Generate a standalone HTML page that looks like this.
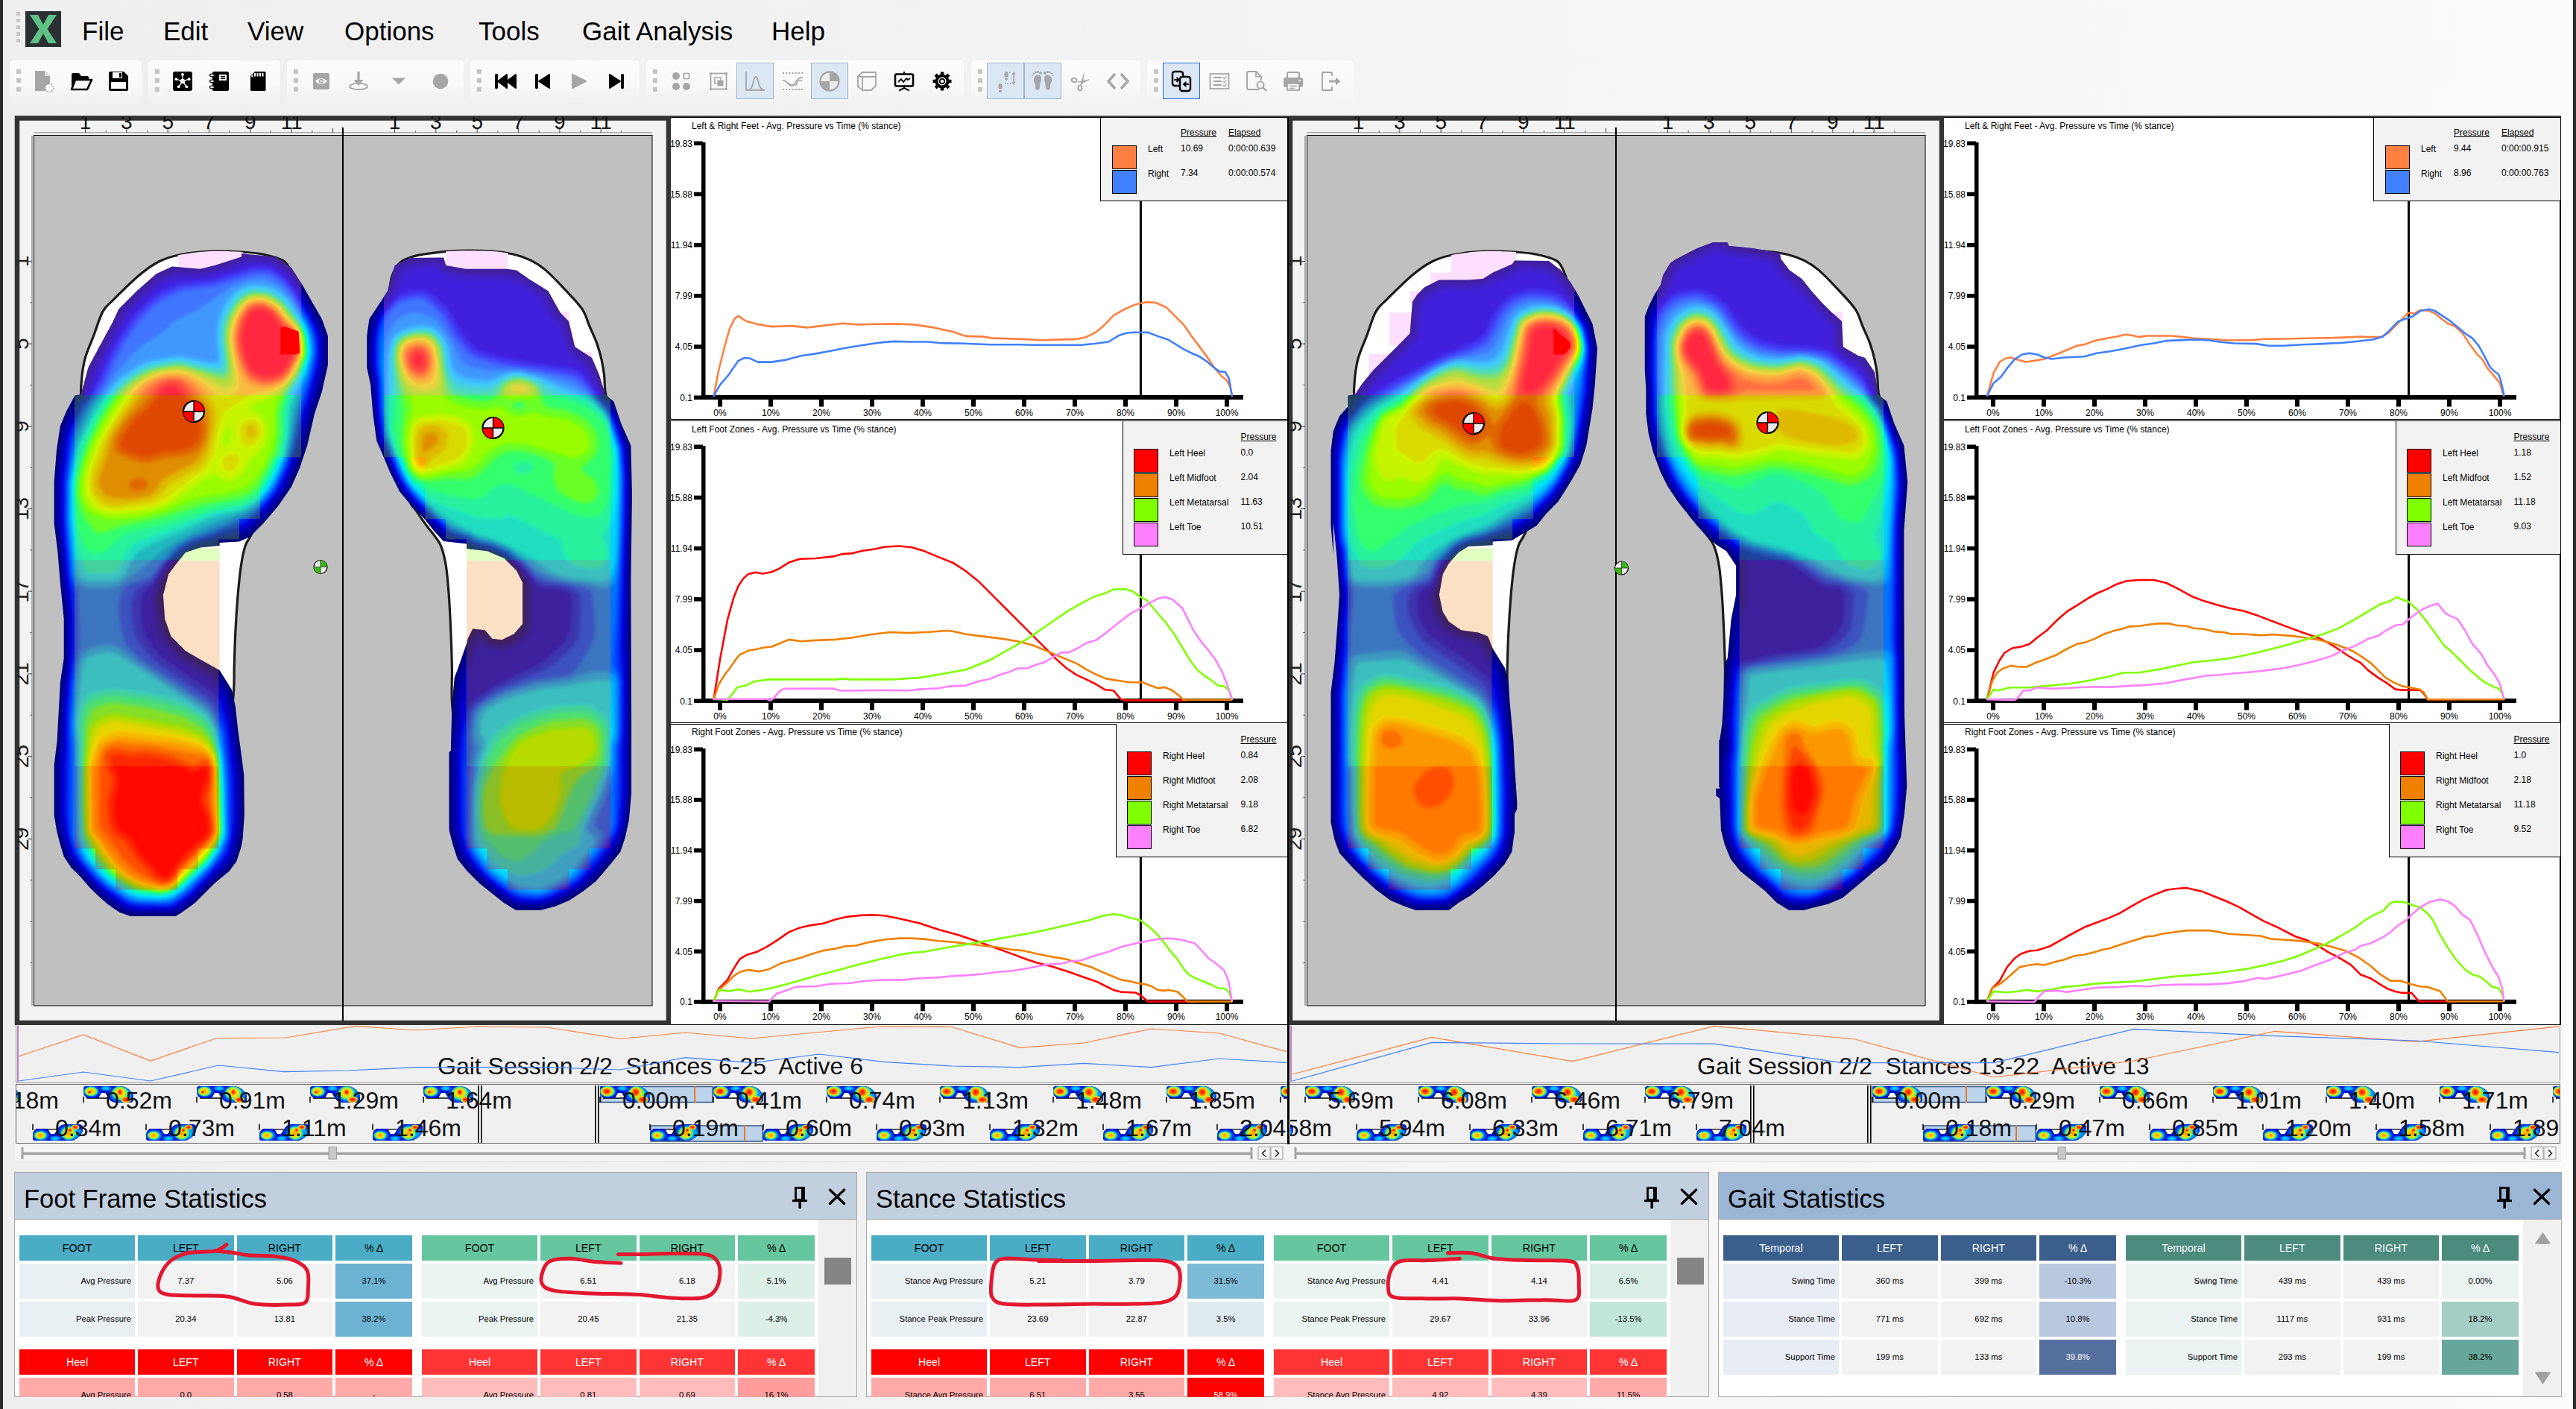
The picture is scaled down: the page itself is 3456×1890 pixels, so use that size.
<!DOCTYPE html>
<html><head><meta charset="utf-8"><title>Gait Analysis</title>
<style>
*{box-sizing:border-box;margin:0;padding:0}
html,body{width:3456px;height:1890px;overflow:hidden;background:#f0f0f0}
body{background:linear-gradient(to right,#efefef,#f2f2f2 40%,#fbfbfb)}
body{position:relative;font-family:"Liberation Sans",sans-serif;color:#000}
.a{position:absolute}
.t{position:absolute;white-space:nowrap;line-height:1}
svg{position:absolute;left:0;top:0;overflow:visible}
.menu{position:absolute;top:19.5px;font-size:35px;line-height:44px;white-space:nowrap;color:#000}
.tg{position:absolute;top:81px;height:57px;background:linear-gradient(#fcfcfc,#f9f9f9 55%,rgba(244,244,244,0));border-radius:5px}
.sel{position:absolute;top:84px;height:49px;width:50px;background:#dbe7f3;border:1px solid #a3b4c8}
.ttl{font-size:12px}
.ax{font-size:12px}
.lg{position:absolute;background:#f2f2f2;border-left:1px solid #000;border-bottom:1px solid #000;font-size:12px}
.lg span{position:absolute;white-space:nowrap;line-height:1}
.lg u{text-decoration:underline}
.sw{position:absolute;width:33px;height:32px;border:1px solid #000}
.big{font-size:32px;color:#111}
.ph{position:absolute;height:63px;border:1px solid #a9a9a9;border-bottom:none}
.ph span{position:absolute;left:12px;top:13px;font-size:34.5px;line-height:44px;white-space:nowrap;color:#000}
.pb{position:absolute;background:#fff;border:1px solid #a9a9a9;overflow:hidden}
.c{position:absolute;font-size:11.3px;line-height:1;white-space:nowrap;display:flex;align-items:center;justify-content:center}
.h{font-size:14.2px}
.r{justify-content:flex-end;padding-right:5px}
</style></head>
<body>
<div class="a" style="left:0;top:0;width:4px;height:1890px;background:#2b2b2b"></div>
<div class="a" style="left:3452px;top:0;width:4px;height:1890px;background:#2b2b2b"></div>
<div class="a" style="left:22px;top:16px;width:5px;height:5px;background:#c8c8c8"></div>
<div class="a" style="left:22px;top:25px;width:5px;height:5px;background:#c8c8c8"></div>
<div class="a" style="left:22px;top:34px;width:5px;height:5px;background:#c8c8c8"></div>
<div class="a" style="left:22px;top:43px;width:5px;height:5px;background:#c8c8c8"></div>
<div class="a" style="left:22px;top:52px;width:5px;height:5px;background:#c8c8c8"></div>
<div class="a" style="left:34px;top:15px;width:48px;height:48px;background:#2a2f33"></div>
<svg width="3456" height="140"><path d="M40 20 L51 20 L58 33 L65 20 L76 20 L63.5 39 L76 58 L65 58 L58 45 L51 58 L40 58 L52.5 39 Z" fill="#5ec286"/></svg>
<div class="menu" id="m_Fi" style="left:110px;width:53px">File</div>
<div class="menu" id="m_Ed" style="left:219px;width:58px">Edit</div>
<div class="menu" id="m_Vi" style="left:332px;width:76px">View</div>
<div class="menu" id="m_Op" style="left:462px;width:124px">Options</div>
<div class="menu" id="m_To" style="left:642px;width:80px">Tools</div>
<div class="menu" id="m_Ga" style="left:781px;width:198px">Gait Analysis</div>
<div class="menu" id="m_He" style="left:1035px;width:74px">Help</div>
<div class="tg" style="left:13px;width:177px"></div>
<div class="a" style="left:22px;top:93px;width:6px;height:6px;background:#c4c4c4;box-shadow:1px 1px 0 #fff"></div>
<div class="a" style="left:22px;top:105px;width:6px;height:6px;background:#c4c4c4;box-shadow:1px 1px 0 #fff"></div>
<div class="a" style="left:22px;top:117px;width:6px;height:6px;background:#c4c4c4;box-shadow:1px 1px 0 #fff"></div>
<div class="tg" style="left:199px;width:177px"></div>
<div class="a" style="left:208px;top:93px;width:6px;height:6px;background:#c4c4c4;box-shadow:1px 1px 0 #fff"></div>
<div class="a" style="left:208px;top:105px;width:6px;height:6px;background:#c4c4c4;box-shadow:1px 1px 0 #fff"></div>
<div class="a" style="left:208px;top:117px;width:6px;height:6px;background:#c4c4c4;box-shadow:1px 1px 0 #fff"></div>
<div class="tg" style="left:385px;width:237px"></div>
<div class="a" style="left:394px;top:93px;width:6px;height:6px;background:#c4c4c4;box-shadow:1px 1px 0 #fff"></div>
<div class="a" style="left:394px;top:105px;width:6px;height:6px;background:#c4c4c4;box-shadow:1px 1px 0 #fff"></div>
<div class="a" style="left:394px;top:117px;width:6px;height:6px;background:#c4c4c4;box-shadow:1px 1px 0 #fff"></div>
<div class="tg" style="left:631px;width:227px"></div>
<div class="a" style="left:640px;top:93px;width:6px;height:6px;background:#c4c4c4;box-shadow:1px 1px 0 #fff"></div>
<div class="a" style="left:640px;top:105px;width:6px;height:6px;background:#c4c4c4;box-shadow:1px 1px 0 #fff"></div>
<div class="a" style="left:640px;top:117px;width:6px;height:6px;background:#c4c4c4;box-shadow:1px 1px 0 #fff"></div>
<div class="tg" style="left:867px;width:426px"></div>
<div class="a" style="left:876px;top:93px;width:6px;height:6px;background:#c4c4c4;box-shadow:1px 1px 0 #fff"></div>
<div class="a" style="left:876px;top:105px;width:6px;height:6px;background:#c4c4c4;box-shadow:1px 1px 0 #fff"></div>
<div class="a" style="left:876px;top:117px;width:6px;height:6px;background:#c4c4c4;box-shadow:1px 1px 0 #fff"></div>
<div class="tg" style="left:1303px;width:227px"></div>
<div class="a" style="left:1312px;top:93px;width:6px;height:6px;background:#c4c4c4;box-shadow:1px 1px 0 #fff"></div>
<div class="a" style="left:1312px;top:105px;width:6px;height:6px;background:#c4c4c4;box-shadow:1px 1px 0 #fff"></div>
<div class="a" style="left:1312px;top:117px;width:6px;height:6px;background:#c4c4c4;box-shadow:1px 1px 0 #fff"></div>
<div class="tg" style="left:1539px;width:277px"></div>
<div class="a" style="left:1548px;top:93px;width:6px;height:6px;background:#c4c4c4;box-shadow:1px 1px 0 #fff"></div>
<div class="a" style="left:1548px;top:105px;width:6px;height:6px;background:#c4c4c4;box-shadow:1px 1px 0 #fff"></div>
<div class="a" style="left:1548px;top:117px;width:6px;height:6px;background:#c4c4c4;box-shadow:1px 1px 0 #fff"></div>
<div class="sel" style="left:988px"></div>
<div class="sel" style="left:1088px"></div>
<div class="sel" style="left:1324px"></div>
<div class="sel" style="left:1374px"></div>
<div class="sel" style="left:1560px;border-color:#1e6fd9"></div>
<svg width="3456" height="160">
<g transform="translate(58 109)"><path d="M-11 -14 H2 L9 -7 V13 H-11Z" fill="#a6a6a6"/><path d="M2 -14 V-7 H9Z" fill="#ddd"/><circle cx="8" cy="9" r="5.5" fill="#fff" stroke="#a6a6a6" stroke-width="1.5" stroke-dasharray="2 1.4"/></g>
<g transform="translate(109 109)"><path d="M-13 -9 Q-13 -11 -11 -11 H-3 L0 -7 H8 Q10 -7 10 -5 V-3 H-8 L-13 9Z" fill="#000"/><path d="M-8 -2 H14 L8 11 H-13Z" fill="none" stroke="#000" stroke-width="2.6" stroke-linejoin="round"/></g>
<g transform="translate(159 109)"><path d="M-13 -11 Q-13 -13 -11 -13 H7 L13 -7 V11 Q13 13 11 13 H-11 Q-13 13 -13 11Z" fill="#000"/><rect x="-10" y="1" width="20" height="9" fill="#fff"/><rect x="-8" y="-12" width="13" height="8" fill="#fff"/><rect x="1" y="-11" width="3" height="6" fill="#000"/></g>
<g transform="translate(245 109)"><rect x="-13" y="-13" width="26" height="26" rx="3" fill="#000"/><circle r="3.2" fill="#fff"/><line x2="0.0" y2="-9.0" stroke="#fff" stroke-width="1.3"/><circle cx="0.0" cy="-9.0" r="1.9" fill="#fff"/><line x2="8.6" y2="-2.8" stroke="#fff" stroke-width="1.3"/><circle cx="8.6" cy="-2.8" r="1.9" fill="#fff"/><line x2="5.3" y2="7.3" stroke="#fff" stroke-width="1.3"/><circle cx="5.3" cy="7.3" r="1.9" fill="#fff"/><line x2="-5.3" y2="7.3" stroke="#fff" stroke-width="1.3"/><circle cx="-5.3" cy="7.3" r="1.9" fill="#fff"/><line x2="-8.6" y2="-2.8" stroke="#fff" stroke-width="1.3"/><circle cx="-8.6" cy="-2.8" r="1.9" fill="#fff"/></g>
<g transform="translate(295 109)"><rect x="-10" y="-13" width="22" height="26" rx="2" fill="#000"/><rect x="-1" y="-9" width="10" height="8" fill="#fff"/><rect x="1" y="-7" width="6" height="1.4" fill="#000"/><rect x="1" y="-4.4" width="6" height="1.4" fill="#000"/><ellipse cx="-10.5" cy="-8" rx="3" ry="1.8" fill="#fff" stroke="#000" stroke-width="1.2"/><ellipse cx="-10.5" cy="0" rx="3" ry="1.8" fill="#fff" stroke="#000" stroke-width="1.2"/><ellipse cx="-10.5" cy="8" rx="3" ry="1.8" fill="#fff" stroke="#000" stroke-width="1.2"/></g>
<g transform="translate(346 109)"><path d="M-10 -7 L-4 -13 H9 Q10.5 -13 10.5 -11.5 V11.5 Q10.5 13 9 13 H-8.5 Q-10 13 -10 11.5Z" fill="#000"/><rect x="-5" y="-11" width="2" height="4.5" fill="#fff"/><rect x="-1.5" y="-11" width="2" height="4.5" fill="#fff"/><rect x="2" y="-11" width="2" height="4.5" fill="#fff"/><rect x="5.5" y="-11" width="2" height="4.5" fill="#fff"/><rect x="-8.6" y="-8.5" width="1.6" height="3" fill="#fff"/></g>
<g transform="translate(431 109)"><rect x="-11" y="-11" width="22" height="22" rx="2.5" fill="#a6a6a6"/><path d="M-8 0 Q0 -8 8 0 Q0 8 -8 0Z" fill="#fff"/><circle r="3.2" fill="#a6a6a6"/><circle r="1.4" fill="#fff"/></g>
<g transform="translate(481 109)"><rect x="-1.6" y="-13" width="3.2" height="13" fill="#a6a6a6"/><path d="M-6.5 -2 H6.5 L0 6Z" fill="#a6a6a6"/><ellipse cx="0" cy="7" rx="12" ry="4.2" fill="none" stroke="#a6a6a6" stroke-width="1.8"/></g>
<g transform="translate(535 109)"><path d="M-9 -4.5 H9 L0 4.5Z" fill="#a6a6a6"/></g>
<g transform="translate(591 109)"><circle r="10.3" fill="#a6a6a6"/></g>
<g transform="translate(678 109)"><rect x="-14" y="-10" width="4" height="20" rx="1.5" fill="#000"/><path d="M2 -9 V9 L-10 0Z M14 -9 V9 L2 0Z" fill="#000" stroke="#000" stroke-width="2" stroke-linejoin="round"/></g>
<g transform="translate(728 109)"><rect x="-10" y="-10" width="4" height="20" rx="1.5" fill="#000"/><path d="M9 -9 V9 L-5 0Z" fill="#000" stroke="#000" stroke-width="2" stroke-linejoin="round"/></g>
<g transform="translate(777 109)"><path d="M-9 -9 V9 L9 0Z" fill="#a6a6a6" stroke="#a6a6a6" stroke-width="2" stroke-linejoin="round"/></g>
<g transform="translate(827 109)"><rect x="6" y="-10" width="4" height="20" rx="1.5" fill="#000"/><path d="M-9 -9 V9 L5 0Z" fill="#000" stroke="#000" stroke-width="2" stroke-linejoin="round"/></g>
<g transform="translate(914 109)"><circle cx="-7" cy="-7" r="5" fill="#a6a6a6"/><circle cx="-7" cy="7" r="5" fill="#a6a6a6"/><circle cx="7" cy="7" r="5" fill="#a6a6a6"/><rect x="3.5" y="-10.5" width="7" height="7" fill="none" stroke="#a6a6a6" stroke-width="1.6"/></g>
<g transform="translate(964 109)"><rect x="-10.5" y="-10.5" width="21" height="21" fill="none" stroke="#a6a6a6" stroke-width="1.8"/><rect x="-5" y="-5" width="8" height="8" fill="none" stroke="#a6a6a6" stroke-width="1.5"/><rect x="-1.5" y="-1.5" width="8" height="8" fill="#a6a6a6"/><circle cx="-10.5" cy="-10.5" r="1.6" fill="#a6a6a6"/><circle cx="-10.5" cy="10.5" r="1.6" fill="#a6a6a6"/><circle cx="10.5" cy="-10.5" r="1.6" fill="#a6a6a6"/><circle cx="10.5" cy="10.5" r="1.6" fill="#a6a6a6"/></g>
<g transform="translate(1013 109)"><path d="M-12 -13 V12 H13" fill="none" stroke="#a6a6a6" stroke-width="1.8"/><path d="M-8 11 C-2 11 -3 -6 1 -6 C5 -6 4 11 11 11" fill="none" stroke="#a6a6a6" stroke-width="1.8"/></g>
<g transform="translate(1064 109)"><path d="M-14 -11 H14 M-14 11 H14" stroke="#a6a6a6" stroke-width="1.8" stroke-dasharray="2 2.2"/><path d="M-14 -1 C-8 -3 -8 6 -2 6 C4 6 4 -6 13 -5" fill="none" stroke="#a6a6a6" stroke-width="1.8"/><path d="M-6 2 L-4 5 H4 L7 -1 H12" fill="none" stroke="#a6a6a6" stroke-width="1.4"/></g>
<g transform="translate(1113 109)"><circle r="12.5" fill="#ececec" stroke="#a6a6a6" stroke-width="2.4"/><path d="M0 0 V-12.5 A12.5 12.5 0 0 1 12.5 0Z M0 0 V12.5 A12.5 12.5 0 0 1 -12.5 0Z" fill="#a6a6a6"/></g>
<g transform="translate(1163 109)"><path d="M-12 -7 L-6 -12 H12 V6 L6 12 H-6 M-12 -7 V7 L-6 12 V-6 H12 M-12 -7 L-6 -6" fill="none" stroke="#a6a6a6" stroke-width="1.8" stroke-linejoin="round"/></g>
<g transform="translate(1213 109)"><rect x="-1" y="-13" width="2" height="4" fill="#000"/><rect x="-12" y="-9.5" width="24" height="16" rx="2" fill="none" stroke="#000" stroke-width="2.6"/><path d="M-8 1 L-4 -3 L-1 1 L3 -4 L5 -2 L8 -4" fill="none" stroke="#000" stroke-width="1.8"/><path d="M0 7 V10 M-7 12.5 L0 9 L7 12.5" fill="none" stroke="#000" stroke-width="2"/></g>
<g transform="translate(1264 109)"><circle r="7.5" fill="none" stroke="#000" stroke-width="4"/><circle r="3.2" fill="none" stroke="#000" stroke-width="1.8"/><rect x="-2.2" y="-12.5" width="4.4" height="5" fill="#000" transform="rotate(0)"/><rect x="-2.2" y="-12.5" width="4.4" height="5" fill="#000" transform="rotate(45)"/><rect x="-2.2" y="-12.5" width="4.4" height="5" fill="#000" transform="rotate(90)"/><rect x="-2.2" y="-12.5" width="4.4" height="5" fill="#000" transform="rotate(135)"/><rect x="-2.2" y="-12.5" width="4.4" height="5" fill="#000" transform="rotate(180)"/><rect x="-2.2" y="-12.5" width="4.4" height="5" fill="#000" transform="rotate(225)"/><rect x="-2.2" y="-12.5" width="4.4" height="5" fill="#000" transform="rotate(270)"/><rect x="-2.2" y="-12.5" width="4.4" height="5" fill="#000" transform="rotate(315)"/></g>
<g transform="translate(1349 109)"><ellipse cx="-7" cy="7" rx="2.6" ry="4" fill="#a6a6a6"/><rect x="-9" y="12" width="4" height="2.4" rx="1" fill="#a6a6a6"/><ellipse cx="1" cy="-9" rx="2.6" ry="4" fill="#a6a6a6"/><rect x="-1" y="-4" width="4" height="2.4" rx="1" fill="#a6a6a6"/><path d="M-1 3 H11" stroke="#a6a6a6" stroke-width="1.6" stroke-dasharray="1.6 1.8"/><path d="M11 -11 V3" stroke="#a6a6a6" stroke-width="1.6"/><path d="M8.5 -9 L11 -13 L13.5 -9Z M8.5 1 L11 5 L13.5 1Z" fill="#a6a6a6"/><path d="M5 -12 h1.6" stroke="#a6a6a6" stroke-width="1.6"/></g>
<g transform="translate(1399 109)"><path d="M-2 -5 C-2 -9 -10 -10 -12 -4 C-13 2 -9 4 -10 8 C-10.5 13 -4 13 -4 8 C-4 3 -2 0 -2 -5Z" fill="#a6a6a6"/><circle cx="-3" cy="-11" r="1.9" fill="#a6a6a6"/><circle cx="-6.5" cy="-12.5" r="1.5" fill="#a6a6a6"/><circle cx="-9.5" cy="-12" r="1.3" fill="#a6a6a6"/><circle cx="-12" cy="-10.5" r="1.1" fill="#a6a6a6"/><circle cx="-13.6" cy="-8" r="1.0" fill="#a6a6a6"/><path d="M2 -5 C2 -9 10 -10 12 -4 C13 2 9 4 10 8 C10.5 13 4 13 4 8 C4 3 2 0 2 -5Z" fill="#a6a6a6"/><circle cx="3" cy="-11" r="1.9" fill="#a6a6a6"/><circle cx="6.5" cy="-12.5" r="1.5" fill="#a6a6a6"/><circle cx="9.5" cy="-12" r="1.3" fill="#a6a6a6"/><circle cx="12" cy="-10.5" r="1.1" fill="#a6a6a6"/><circle cx="13.6" cy="-8" r="1.0" fill="#a6a6a6"/></g>
<g transform="translate(1450 109)"><ellipse cx="-9" cy="0" rx="3.4" ry="2.6" fill="none" stroke="#a6a6a6" stroke-width="1.8" transform="rotate(10)"/><ellipse cx="-1" cy="9" rx="2.6" ry="3.4" fill="none" stroke="#a6a6a6" stroke-width="1.8"/><path d="M-6 1 L13 -3 L4 2Z M-1 6 L5 -14 L3 3Z" fill="#a6a6a6"/></g>
<g transform="translate(1500 109)"><path d="M-4 -10 L-13 0 L-4 10 M4 -10 L13 0 L4 10" fill="none" stroke="#a6a6a6" stroke-width="3.4"/></g>
<g transform="translate(1585 109)"><rect x="-12" y="-13" width="14" height="19" rx="3" fill="#dbe7f3" stroke="#000" stroke-width="2.4"/><rect x="-2" y="-6" width="14" height="19" rx="3" fill="#dbe7f3" stroke="#000" stroke-width="2.4"/><path d="M-10 -2 H-4 M-6.5 -5 L-3 -2 L-6.5 1" fill="none" stroke="#000" stroke-width="1.8"/><path d="M10 4 H4 M6.5 1 L3 4 L6.5 7" fill="none" stroke="#000" stroke-width="1.8"/></g>
<g transform="translate(1636 109)"><rect x="-12.5" y="-10" width="25" height="20" fill="none" stroke="#a6a6a6" stroke-width="1.8"/><path d="M-8 -5 H3 M-8 0 H3 M-8 5 H3" stroke="#a6a6a6" stroke-width="1.8"/><path d="M5 -5 l1.5 1.5 l3 -3 M5 0 l1.5 1.5 l3 -3 M5 5 l1.5 1.5 l3 -3" fill="none" stroke="#a6a6a6" stroke-width="1.3"/></g>
<g transform="translate(1685 109)"><path d="M4 11 H-10 Q-12 11 -12 9 V-11 Q-12 -13 -10 -13 H0 L7 -6 V-1" fill="none" stroke="#a6a6a6" stroke-width="1.9"/><path d="M0 -13 V-6 H7" fill="none" stroke="#a6a6a6" stroke-width="1.6"/><circle cx="6" cy="5" r="4.6" fill="none" stroke="#a6a6a6" stroke-width="1.9"/><path d="M9.5 8.5 L14 13" stroke="#a6a6a6" stroke-width="2.4"/></g>
<g transform="translate(1735 109)"><rect x="-8" y="-12" width="16" height="8" rx="1.5" fill="none" stroke="#a6a6a6" stroke-width="2"/><rect x="-13" y="-5" width="26" height="13" rx="3" fill="#a6a6a6"/><rect x="-8" y="3" width="16" height="9" fill="#f8f8f8" stroke="#a6a6a6" stroke-width="1.8"/><path d="M-5 6.5 H5 M-5 9.3 H2" stroke="#a6a6a6" stroke-width="1.3"/><circle cx="8.5" cy="-1" r="1.3" fill="#f8f8f8"/></g>
<g transform="translate(1785 109)"><path d="M2 -12 H-11 V12 H2 V7 M2 -12 V-7" fill="none" stroke="#a6a6a6" stroke-width="1.9"/><path d="M-2 0 H9" stroke="#a6a6a6" stroke-width="3"/><path d="M7 -5.5 L13.5 0 L7 5.5Z" fill="#a6a6a6"/></g>
</svg>
<div class="a" style="left:20px;top:155px;width:880px;height:1220px;background:#f3f3f3"></div>
<div class="a" style="left:1728px;top:155px;width:880px;height:1220px;background:#f3f3f3"></div>
<svg width="3456" height="1890" font-family="Liberation Sans, sans-serif"><defs><filter id="heat" x="-5%" y="-5%" width="110%" height="110%" color-interpolation-filters="sRGB"><feGaussianBlur stdDeviation="2.5"/><feComponentTransfer><feFuncR type="table" tableValues="0.000 0.000 0.000 0.000 0.000 0.094 0.549 0.941 1.000 1.000 1.000"/><feFuncG type="table" tableValues="0.000 0.000 0.251 0.565 0.878 1.000 1.000 0.941 0.647 0.275 0.000"/><feFuncB type="table" tableValues="0.502 0.843 1.000 1.000 1.000 0.588 0.000 0.000 0.000 0.000 0.000"/></feComponentTransfer></filter></defs>
<path d="M23 158.5 H897 V1372 H23Z" fill="none" stroke="#333" stroke-width="6.5"/>
<clipPath id="rc0"><rect x="22.5" y="156.5" width="876" height="1216"/></clipPath>
<rect x="45.5" y="181.5" width="829.5" height="1167.5" fill="#c0c0c0" stroke="#000" stroke-width="1"/>
<path d="M43.5 182 V1349 M45 179.5 H875" stroke="#fff" stroke-width="1" fill="none"/>
<path d="M45 178 H875" stroke="#777" stroke-width="1.2"/>
<path d="M43 182 V1349" stroke="#777" stroke-width="1.2"/>
<path d="M114.5 172 V178" stroke="#555" stroke-width="1.2"/>
<path d="M142.2 175 V178" stroke="#666" stroke-width="1"/>
<path d="M169.8 172 V178" stroke="#555" stroke-width="1.2"/>
<path d="M197.5 175 V178" stroke="#666" stroke-width="1"/>
<path d="M225.2 172 V178" stroke="#555" stroke-width="1.2"/>
<path d="M252.9 175 V178" stroke="#666" stroke-width="1"/>
<path d="M280.5 172 V178" stroke="#555" stroke-width="1.2"/>
<path d="M308.2 175 V178" stroke="#666" stroke-width="1"/>
<path d="M335.9 172 V178" stroke="#555" stroke-width="1.2"/>
<path d="M363.5 175 V178" stroke="#666" stroke-width="1"/>
<path d="M391.2 172 V178" stroke="#555" stroke-width="1.2"/>
<path d="M418.9 175 V178" stroke="#666" stroke-width="1"/>
<path d="M446.5 172 V178" stroke="#555" stroke-width="1.2"/>
<path d="M529.5 172 V178" stroke="#555" stroke-width="1.2"/>
<path d="M557.2 175 V178" stroke="#666" stroke-width="1"/>
<path d="M584.8 172 V178" stroke="#555" stroke-width="1.2"/>
<path d="M612.5 175 V178" stroke="#666" stroke-width="1"/>
<path d="M640.2 172 V178" stroke="#555" stroke-width="1.2"/>
<path d="M667.9 175 V178" stroke="#666" stroke-width="1"/>
<path d="M695.5 172 V178" stroke="#555" stroke-width="1.2"/>
<path d="M723.2 175 V178" stroke="#666" stroke-width="1"/>
<path d="M750.9 172 V178" stroke="#555" stroke-width="1.2"/>
<path d="M778.5 175 V178" stroke="#666" stroke-width="1"/>
<path d="M806.2 172 V178" stroke="#555" stroke-width="1.2"/>
<path d="M833.9 175 V178" stroke="#666" stroke-width="1"/>
<path d="M37 350.5 H43" stroke="#555" stroke-width="1.2"/>
<path d="M40 405.8 H43" stroke="#666" stroke-width="1"/>
<path d="M37 461.2 H43" stroke="#555" stroke-width="1.2"/>
<path d="M40 516.5 H43" stroke="#666" stroke-width="1"/>
<path d="M37 571.9 H43" stroke="#555" stroke-width="1.2"/>
<path d="M40 627.2 H43" stroke="#666" stroke-width="1"/>
<path d="M37 682.5 H43" stroke="#555" stroke-width="1.2"/>
<path d="M40 737.9 H43" stroke="#666" stroke-width="1"/>
<path d="M37 793.2 H43" stroke="#555" stroke-width="1.2"/>
<path d="M40 848.6 H43" stroke="#666" stroke-width="1"/>
<path d="M37 903.9 H43" stroke="#555" stroke-width="1.2"/>
<path d="M40 959.2 H43" stroke="#666" stroke-width="1"/>
<path d="M37 1014.6 H43" stroke="#555" stroke-width="1.2"/>
<path d="M40 1069.9 H43" stroke="#666" stroke-width="1"/>
<path d="M37 1125.3 H43" stroke="#555" stroke-width="1.2"/>
<path d="M40 1180.6 H43" stroke="#666" stroke-width="1"/>
<path d="M40 1235.9 H43" stroke="#666" stroke-width="1"/>
<path d="M40 1291.3 H43" stroke="#666" stroke-width="1"/>
<rect x="459" y="171" width="2" height="1198" fill="#000"/>
<g clip-path="url(#rc0)"><text x="114.5" y="173" font-size="28" text-anchor="middle" fill="#111">1</text><text x="169.8" y="173" font-size="28" text-anchor="middle" fill="#111">3</text><text x="225.2" y="173" font-size="28" text-anchor="middle" fill="#111">5</text><text x="280.5" y="173" font-size="28" text-anchor="middle" fill="#111">7</text><text x="335.9" y="173" font-size="28" text-anchor="middle" fill="#111">9</text><text x="391.2" y="173" font-size="28" text-anchor="middle" fill="#111">11</text><text x="529.5" y="173" font-size="28" text-anchor="middle" fill="#111">1</text><text x="584.8" y="173" font-size="28" text-anchor="middle" fill="#111">3</text><text x="640.2" y="173" font-size="28" text-anchor="middle" fill="#111">5</text><text x="695.5" y="173" font-size="28" text-anchor="middle" fill="#111">7</text><text x="750.9" y="173" font-size="28" text-anchor="middle" fill="#111">9</text><text x="806.2" y="173" font-size="28" text-anchor="middle" fill="#111">11</text><text transform="translate(37.5 350.5) rotate(-90)" font-size="28" text-anchor="middle" fill="#222">1</text><text transform="translate(37.5 461.2) rotate(-90)" font-size="28" text-anchor="middle" fill="#222">5</text><text transform="translate(37.5 571.9) rotate(-90)" font-size="28" text-anchor="middle" fill="#222">9</text><text transform="translate(37.5 682.5) rotate(-90)" font-size="28" text-anchor="middle" fill="#222">13</text><text transform="translate(37.5 793.2) rotate(-90)" font-size="28" text-anchor="middle" fill="#222">17</text><text transform="translate(37.5 903.9) rotate(-90)" font-size="28" text-anchor="middle" fill="#222">21</text><text transform="translate(37.5 1014.6) rotate(-90)" font-size="28" text-anchor="middle" fill="#222">25</text><text transform="translate(37.5 1125.3) rotate(-90)" font-size="28" text-anchor="middle" fill="#222">29</text></g>
<path d="M1731 158.5 H2605 V1372 H1731Z" fill="none" stroke="#333" stroke-width="6.5"/>
<clipPath id="rc1708"><rect x="1730.5" y="156.5" width="876" height="1216"/></clipPath>
<rect x="1753.5" y="181.5" width="829.5" height="1167.5" fill="#c0c0c0" stroke="#000" stroke-width="1"/>
<path d="M1751.5 182 V1349 M1753 179.5 H2583" stroke="#fff" stroke-width="1" fill="none"/>
<path d="M1753 178 H2583" stroke="#777" stroke-width="1.2"/>
<path d="M1751 182 V1349" stroke="#777" stroke-width="1.2"/>
<path d="M1822.5 172 V178" stroke="#555" stroke-width="1.2"/>
<path d="M1850.2 175 V178" stroke="#666" stroke-width="1"/>
<path d="M1877.8 172 V178" stroke="#555" stroke-width="1.2"/>
<path d="M1905.5 175 V178" stroke="#666" stroke-width="1"/>
<path d="M1933.2 172 V178" stroke="#555" stroke-width="1.2"/>
<path d="M1960.8 175 V178" stroke="#666" stroke-width="1"/>
<path d="M1988.5 172 V178" stroke="#555" stroke-width="1.2"/>
<path d="M2016.2 175 V178" stroke="#666" stroke-width="1"/>
<path d="M2043.9 172 V178" stroke="#555" stroke-width="1.2"/>
<path d="M2071.5 175 V178" stroke="#666" stroke-width="1"/>
<path d="M2099.2 172 V178" stroke="#555" stroke-width="1.2"/>
<path d="M2126.9 175 V178" stroke="#666" stroke-width="1"/>
<path d="M2154.5 172 V178" stroke="#555" stroke-width="1.2"/>
<path d="M2237.5 172 V178" stroke="#555" stroke-width="1.2"/>
<path d="M2265.2 175 V178" stroke="#666" stroke-width="1"/>
<path d="M2292.8 172 V178" stroke="#555" stroke-width="1.2"/>
<path d="M2320.5 175 V178" stroke="#666" stroke-width="1"/>
<path d="M2348.2 172 V178" stroke="#555" stroke-width="1.2"/>
<path d="M2375.8 175 V178" stroke="#666" stroke-width="1"/>
<path d="M2403.5 172 V178" stroke="#555" stroke-width="1.2"/>
<path d="M2431.2 175 V178" stroke="#666" stroke-width="1"/>
<path d="M2458.9 172 V178" stroke="#555" stroke-width="1.2"/>
<path d="M2486.5 175 V178" stroke="#666" stroke-width="1"/>
<path d="M2514.2 172 V178" stroke="#555" stroke-width="1.2"/>
<path d="M2541.9 175 V178" stroke="#666" stroke-width="1"/>
<path d="M1745 350.5 H1751" stroke="#555" stroke-width="1.2"/>
<path d="M1748 405.8 H1751" stroke="#666" stroke-width="1"/>
<path d="M1745 461.2 H1751" stroke="#555" stroke-width="1.2"/>
<path d="M1748 516.5 H1751" stroke="#666" stroke-width="1"/>
<path d="M1745 571.9 H1751" stroke="#555" stroke-width="1.2"/>
<path d="M1748 627.2 H1751" stroke="#666" stroke-width="1"/>
<path d="M1745 682.5 H1751" stroke="#555" stroke-width="1.2"/>
<path d="M1748 737.9 H1751" stroke="#666" stroke-width="1"/>
<path d="M1745 793.2 H1751" stroke="#555" stroke-width="1.2"/>
<path d="M1748 848.6 H1751" stroke="#666" stroke-width="1"/>
<path d="M1745 903.9 H1751" stroke="#555" stroke-width="1.2"/>
<path d="M1748 959.2 H1751" stroke="#666" stroke-width="1"/>
<path d="M1745 1014.6 H1751" stroke="#555" stroke-width="1.2"/>
<path d="M1748 1069.9 H1751" stroke="#666" stroke-width="1"/>
<path d="M1745 1125.3 H1751" stroke="#555" stroke-width="1.2"/>
<path d="M1748 1180.6 H1751" stroke="#666" stroke-width="1"/>
<path d="M1748 1235.9 H1751" stroke="#666" stroke-width="1"/>
<path d="M1748 1291.3 H1751" stroke="#666" stroke-width="1"/>
<rect x="2167" y="171" width="2" height="1198" fill="#000"/>
<g clip-path="url(#rc1708)"><text x="1822.5" y="173" font-size="28" text-anchor="middle" fill="#111">1</text><text x="1877.8" y="173" font-size="28" text-anchor="middle" fill="#111">3</text><text x="1933.2" y="173" font-size="28" text-anchor="middle" fill="#111">5</text><text x="1988.5" y="173" font-size="28" text-anchor="middle" fill="#111">7</text><text x="2043.9" y="173" font-size="28" text-anchor="middle" fill="#111">9</text><text x="2099.2" y="173" font-size="28" text-anchor="middle" fill="#111">11</text><text x="2237.5" y="173" font-size="28" text-anchor="middle" fill="#111">1</text><text x="2292.8" y="173" font-size="28" text-anchor="middle" fill="#111">3</text><text x="2348.2" y="173" font-size="28" text-anchor="middle" fill="#111">5</text><text x="2403.5" y="173" font-size="28" text-anchor="middle" fill="#111">7</text><text x="2458.9" y="173" font-size="28" text-anchor="middle" fill="#111">9</text><text x="2514.2" y="173" font-size="28" text-anchor="middle" fill="#111">11</text><text transform="translate(1745.5 350.5) rotate(-90)" font-size="28" text-anchor="middle" fill="#222">1</text><text transform="translate(1745.5 461.2) rotate(-90)" font-size="28" text-anchor="middle" fill="#222">5</text><text transform="translate(1745.5 571.9) rotate(-90)" font-size="28" text-anchor="middle" fill="#222">9</text><text transform="translate(1745.5 682.5) rotate(-90)" font-size="28" text-anchor="middle" fill="#222">13</text><text transform="translate(1745.5 793.2) rotate(-90)" font-size="28" text-anchor="middle" fill="#222">17</text><text transform="translate(1745.5 903.9) rotate(-90)" font-size="28" text-anchor="middle" fill="#222">21</text><text transform="translate(1745.5 1014.6) rotate(-90)" font-size="28" text-anchor="middle" fill="#222">25</text><text transform="translate(1745.5 1125.3) rotate(-90)" font-size="28" text-anchor="middle" fill="#222">29</text></g>
<path d="M313.6 925.3C314.6 908.9 313.9 908.9 314.2 895.9C314.6 882.8 315.0 863.2 315.9 846.9C316.7 830.6 317.9 812.6 319.1 797.9C320.4 783.2 321.7 769.6 323.4 758.8C325.0 747.9 326.9 739.1 328.9 732.6C330.9 726.2 333.7 724.0 335.5 720.2C337.2 716.5 339.7 714.3 339.7 710.1C339.7 706.0 333.7 704.4 335.5 695.4C337.2 686.5 341.7 675.3 350.1 656.3C358.6 637.2 376.3 604.6 386.1 581.2C395.8 557.8 404.6 534.9 408.9 515.9C413.3 496.8 413.3 484.9 412.2 466.9C411.1 449.0 405.2 422.8 402.4 408.1C399.5 393.5 397.6 386.8 395.2 378.8C392.8 370.7 390.6 364.7 388.0 359.8C385.4 354.9 385.3 352.5 379.5 349.4C373.8 346.3 362.7 343.1 353.4 341.2C344.2 339.3 336.0 338.7 324.0 338.0C312.1 337.2 295.7 336.3 281.6 337.0C267.4 337.7 250.6 339.9 239.1 342.2C227.7 344.5 221.7 346.6 213.0 351.0C204.3 355.5 197.0 360.5 186.9 369.0C176.8 377.4 160.8 393.5 152.6 401.6C144.5 409.8 142.5 409.8 137.9 417.9C133.4 426.1 129.6 439.7 125.5 450.6C121.5 461.5 116.3 471.3 113.5 483.2C110.6 495.2 109.1 511.5 108.6 522.4C108.0 533.3 110.7 538.7 110.2 548.5C109.6 558.3 107.7 559.4 105.3 581.2C102.8 602.9 97.1 646.0 95.5 679.1C93.9 712.3 95.5 738.4 95.5 780.0C95.5 821.6 95.5 871.1 95.5 928.5C95.5 985.9 93.9 1092.0 95.5 1124.4C97.1 1156.8 98.2 1112.9 105.2 1123.0C112.3 1133.1 121.5 1170.3 137.8 1185.0C154.1 1199.7 181.3 1211.1 203.0 1211.1C224.8 1211.1 250.9 1205.1 268.3 1185.0C285.7 1164.9 300.6 1122.5 307.4 1090.4C314.2 1058.4 308.9 1008.7 309.0 992.6C309.2 976.5 307.6 1005.0 308.4 993.8C309.1 982.6 312.6 941.6 313.6 925.3Z" fill="#fff" stroke="#1c1c1c" stroke-width="3.2" stroke-linejoin="round"/>
<clipPath id="olLF1"><path d="M313.6 925.3C314.6 908.9 313.9 908.9 314.2 895.9C314.6 882.8 315.0 863.2 315.9 846.9C316.7 830.6 317.9 812.6 319.1 797.9C320.4 783.2 321.7 769.6 323.4 758.8C325.0 747.9 326.9 739.1 328.9 732.6C330.9 726.2 333.7 724.0 335.5 720.2C337.2 716.5 339.7 714.3 339.7 710.1C339.7 706.0 333.7 704.4 335.5 695.4C337.2 686.5 341.7 675.3 350.1 656.3C358.6 637.2 376.3 604.6 386.1 581.2C395.8 557.8 404.6 534.9 408.9 515.9C413.3 496.8 413.3 484.9 412.2 466.9C411.1 449.0 405.2 422.8 402.4 408.1C399.5 393.5 397.6 386.8 395.2 378.8C392.8 370.7 390.6 364.7 388.0 359.8C385.4 354.9 385.3 352.5 379.5 349.4C373.8 346.3 362.7 343.1 353.4 341.2C344.2 339.3 336.0 338.7 324.0 338.0C312.1 337.2 295.7 336.3 281.6 337.0C267.4 337.7 250.6 339.9 239.1 342.2C227.7 344.5 221.7 346.6 213.0 351.0C204.3 355.5 197.0 360.5 186.9 369.0C176.8 377.4 160.8 393.5 152.6 401.6C144.5 409.8 142.5 409.8 137.9 417.9C133.4 426.1 129.6 439.7 125.5 450.6C121.5 461.5 116.3 471.3 113.5 483.2C110.6 495.2 109.1 511.5 108.6 522.4C108.0 533.3 110.7 538.7 110.2 548.5C109.6 558.3 107.7 559.4 105.3 581.2C102.8 602.9 97.1 646.0 95.5 679.1C93.9 712.3 95.5 738.4 95.5 780.0C95.5 821.6 95.5 871.1 95.5 928.5C95.5 985.9 93.9 1092.0 95.5 1124.4C97.1 1156.8 98.2 1112.9 105.2 1123.0C112.3 1133.1 121.5 1170.3 137.8 1185.0C154.1 1199.7 181.3 1211.1 203.0 1211.1C224.8 1211.1 250.9 1205.1 268.3 1185.0C285.7 1164.9 300.6 1122.5 307.4 1090.4C314.2 1058.4 308.9 1008.7 309.0 992.6C309.2 976.5 307.6 1005.0 308.4 993.8C309.1 982.6 312.6 941.6 313.6 925.3Z"/></clipPath><g clip-path="url(#olLF1)">
<path d="M239.1 336.3 325.7 336.3 325.7 364.1 239.1 364.1Z" fill="#ffdfff"/>
<path d="M216.3 735.3 294.6 735.3 294.6 752.2 216.3 752.2Z" fill="#e0ffc0"/>
<path d="M213.0 752.2 294.6 752.2 294.6 904.0 213.0 904.0Z" fill="#fce0c4"/>
</g>
<clipPath id="fpLF1"><path d="M324.0 340.2 369.7 344.5 391.0 359.2 405.6 382.0 418.7 404.9 431.8 427.7 439.9 450.6 439.9 489.8 431.8 525.7 422.0 555.1 412.2 597.5 402.4 626.9 391.0 653.0 373.0 679.1 353.4 702.0 335.5 719.9 320.8 726.5 294.6 728.1 294.6 732.0 268.5 734.6 248.9 741.1 235.9 757.1 226.1 770.2 218.9 797.9 221.2 830.6 229.4 853.4 248.9 873.0 268.5 884.5 294.6 899.1 311.0 925.3 315.9 948.1 319.1 977.5 324.0 1013.4 327.3 1039.5 327.9 1091.8 325.7 1124.4 323.7 1136.1 317.2 1155.7 307.4 1168.7 297.6 1176.8 287.8 1185.0 274.8 1198.0 261.7 1211.1 243.8 1224.1 235.7 1229.0 175.3 1229.0 160.7 1224.1 144.3 1212.7 131.3 1201.3 119.9 1189.9 108.5 1176.8 95.4 1163.8 85.7 1149.1 80.8 1132.8 76.5 1116.5 72.6 1093.7 72.6 1028.5 72.6 1026.5 76.6 993.8 80.8 915.5 85.7 882.8 85.7 830.6 80.8 781.6 77.5 742.4 77.5 741.1 72.6 702.0 72.6 646.5 75.9 604.0 80.8 571.4 89.0 551.8 100.4 530.6 108.6 528.9 118.4 493.0 131.4 468.5 151.0 432.6 159.2 414.7 183.6 390.2 209.8 367.3 231.0 357.5 268.5 360.8 288.1 355.9 324.0 344.5Z"/></clipPath>
<g clip-path="url(#fpLF1)"><g filter="url(#heat)"><rect x="48" y="315" width="417" height="939" fill="#000"/><path d="M178 1224 164 1219 138 1200 122 1184 100 1160 93 1150 89 1142 83 1124 80 1106 78 1090 78 1024 81 1000 81 982 83 972 83 942 84 934 85 918 90 884 90 824 85 784 82 736 77 700 77 642 84 584 87 572 104 538 110 533 114 528 124 498 166 418 190 394 204 382 214 374 234 365 244 364 254 366 274 365 294 361 322 351 330 347 352 348 366 350 372 353 387 364 393 372 403 388 423 424 432 444 435 454 435 472 434 490 426 524 417 552 403 604 394 630 384 654 369 676 355 692 334 712 326 717 318 719 296 723 288 726 266 731 247 740 241 746 228 760 223 768 215 786 212 798 212 806 216 834 222 852 226 859 247 880 288 904 300 920 306 930 312 962 322 1040 322 1098 320 1124 313 1150 305 1162 274 1190 260 1206 236 1223 230 1224Z" fill="rgb(14,14,14)"/><path d="M180 1220 166 1215 140 1196 125 1182 105 1160 98 1150 94 1142 89 1128 86 1114 83 1090 83 1026 85 1000 87 942 89 918 93 886 94 854 94 824 91 792 88 780 81 700 81 644 88 586 91 574 105 546 108 540 118 530 139 480 169 426 175 418 196 397 218 380 236 372 270 372 284 369 296 366 332 354 350 353 364 355 368 357 384 368 399 388 423 432 429 448 431 456 431 472 430 490 421 524 410 559 400 600 393 622 383 646 377 658 365 674 346 694 332 706 324 711 294 719 286 722 264 728 245 738 238 744 220 766 206 792 205 800 206 822 209 836 216 856 219 862 243 886 282 910 297 928 301 936 307 962 310 978 317 1042 318 1098 315 1124 309 1146 301 1158 258 1202 244 1213 234 1219 228 1220Z" fill="rgb(24,24,24)"/><path d="M180 1216 168 1212 142 1194 127 1180 109 1160 100 1148 97 1142 92 1126 89 1114 87 1088 87 1026 89 1000 89 984 90 942 97 878 97 828 94 792 91 774 85 702 85 642 92 586 96 574 110 544 120 532 131 512 144 482 155 460 176 426 200 401 214 391 240 379 272 376 286 374 334 359 350 357 360 359 366 361 382 371 397 392 419 432 425 448 427 458 428 476 425 494 418 520 404 565 397 598 389 622 379 646 373 658 362 672 348 687 336 697 324 705 274 723 262 726 242 737 236 742 222 758 206 783 194 794 191 802 189 812 190 828 193 846 198 856 211 874 224 886 286 929 292 935 296 942 303 962 306 978 313 1042 314 1096 311 1124 305 1144 298 1156 255 1200 242 1210 234 1215 228 1217 194 1217Z" fill="rgb(37,37,37)"/><path d="M182 1213 170 1209 142 1190 129 1178 109 1156 103 1146 97 1132 94 1118 92 1088 93 1000 92 982 95 920 100 878 101 854 101 824 99 794 94 774 87 702 88 644 95 588 100 574 112 548 123 534 136 512 149 482 161 460 182 428 204 406 216 397 242 385 254 383 288 379 334 364 348 362 356 362 364 364 378 373 384 379 394 392 417 434 423 450 425 462 424 480 419 504 401 562 393 598 385 626 370 656 360 670 346 684 336 692 326 698 282 716 260 723 240 734 234 740 220 756 205 778 202 781 190 786 183 792 179 800 176 812 177 824 180 848 185 858 197 876 212 890 282 938 289 946 295 958 302 982 309 1046 310 1096 309 1122 302 1142 293 1156 276 1175 253 1198 242 1206 232 1212 226 1214Z" fill="rgb(52,52,52)"/><path d="M182 1210 172 1207 155 1196 142 1187 130 1176 113 1156 107 1148 102 1138 97 1122 97 1004 95 982 95 964 98 920 101 894 106 870 107 858 105 796 103 790 98 780 96 772 90 698 90 646 98 594 102 580 116 550 141 514 156 480 166 461 186 432 207 410 222 400 245 390 288 384 332 370 348 367 356 367 368 372 378 378 392 395 415 436 420 450 422 464 422 478 418 497 414 511 398 556 390 600 386 614 381 628 372 648 366 658 356 670 344 682 334 689 326 693 273 716 258 721 240 730 231 738 219 752 204 773 198 776 176 783 168 788 163 796 160 806 159 820 164 850 167 860 176 872 191 886 276 942 282 947 287 954 295 972 299 986 303 1020 305 1054 306 1122 300 1140 288 1158 251 1196 232 1209 226 1211 216 1212Z" fill="rgb(67,67,67)"/><path d="M110 786 102 778 100 774 98 766 92 700 92 649 96 622 102 593 112 570 124 546 156 500 178 474 194 461 215 448 232 432 253 420 262 418 305 388 326 378 340 375 352 374 364 378 374 383 384 392 392 401 410 432 417 450 420 472 418 482 412 504 401 532 395 550 390 586 384 614 376 633 364 656 350 673 332 686 322 690 288 701 240 725 228 732 209 746 184 768 158 786 148 789 126 789 116 788ZM228 1207 216 1209 186 1208 176 1205 166 1200 146 1187 132 1174 113 1152 108 1142 103 1130 101 1120 101 1000 98 974 101 924 104 896 108 881 112 876 116 872 128 867 144 864 150 865 156 867 166 873 188 891 270 944 278 950 283 956 289 968 294 980 300 1018 303 1054 304 1116 302 1126 294 1144 282 1162 248 1195 236 1204Z" fill="rgb(82,82,82)"/><path d="M110 777 106 773 104 768 99 740 95 694 95 646 102 608 107 592 123 558 137 536 150 518 158 509 184 491 196 485 214 481 240 477 252 479 282 486 290 486 292 483 293 480 290 450 293 428 298 414 310 396 317 390 326 385 332 382 340 381 360 383 368 386 376 391 384 398 390 405 410 436 415 452 417 472 415 482 410 502 396 530 390 546 389 556 387 582 381 614 370 639 361 656 354 664 346 672 328 683 318 687 294 691 285 694 240 715 207 728 192 736 184 741 180 746 168 770 160 778 150 780 126 780 116 780ZM226 1205 214 1206 184 1204 173 1200 154 1188 138 1176 120 1156 112 1144 106 1128 105 1120 104 1082 104 998 102 978 102 962 111 892 112 888 116 883 128 878 140 875 148 875 158 878 168 884 273 952 282 962 291 982 298 1018 300 1054 302 1116 300 1126 293 1142 280 1160 244 1194 234 1201Z" fill="rgb(98,98,98)"/><path d="M116 768 112 762 106 741 100 710 98 686 98 646 104 615 110 594 127 560 143 534 154 520 164 510 188 494 200 489 228 483 242 482 252 484 286 492 294 492 296 490 298 484 295 452 297 432 302 418 314 400 320 394 328 389 340 386 360 388 374 395 386 406 407 436 412 450 414 472 413 482 407 500 392 528 386 544 385 554 384 582 378 613 368 636 358 654 346 668 328 679 318 682 292 686 282 689 235 708 200 721 182 729 175 734 170 740 160 763 158 766 154 769 147 770 126 770ZM228 1201 216 1203 190 1201 178 1198 166 1192 146 1179 132 1165 120 1150 111 1130 108 1120 107 1084 108 998 106 978 106 966 108 952 111 942 116 934 122 931 142 925 154 924 200 930 228 937 250 945 270 957 280 967 287 980 290 992 297 1026 299 1064 300 1114 298 1124 291 1140 279 1158 244 1191 236 1197Z" fill="rgb(113,113,113)"/><path d="M118 739 114 734 111 728 104 702 100 662 102 640 110 608 116 591 132 559 154 526 166 514 186 500 198 493 212 490 234 486 244 486 288 497 294 497 298 497 301 494 302 488 299 454 300 436 305 422 316 404 322 398 328 394 334 391 342 389 360 392 368 396 376 401 385 410 407 440 411 454 412 472 410 482 404 500 388 528 382 544 380 554 380 582 374 613 362 639 352 655 341 666 324 675 284 682 214 705 173 714 164 719 143 738 134 742 126 742ZM226 1199 214 1200 186 1197 174 1193 160 1184 144 1172 128 1154 121 1144 113 1126 111 1116 109 1082 110 970 112 957 115 948 120 942 126 939 144 933 156 933 200 939 240 949 254 955 272 966 280 975 285 986 293 1012 295 1026 297 1058 298 1114 296 1124 288 1141 276 1157 241 1190 234 1195Z" fill="rgb(128,128,128)"/><path d="M130 715 116 699 109 686 104 664 105 644 110 620 120 592 136 560 158 527 170 515 190 501 202 496 218 492 234 489 244 489 294 503 298 503 302 502 305 498 306 490 302 456 303 440 308 424 317 408 322 402 328 398 334 394 342 393 352 393 360 395 374 403 382 411 404 440 408 452 410 472 408 482 401 500 383 528 378 540 375 552 375 582 371 606 367 616 360 631 348 650 338 660 330 664 320 668 272 677 212 695 166 705 136 715ZM228 1195 216 1198 190 1194 178 1191 163 1182 148 1171 134 1154 126 1143 115 1122 113 1114 112 1086 112 1040 115 980 117 968 122 956 126 951 131 948 146 944 158 943 202 950 242 960 255 966 272 977 280 986 286 998 291 1014 293 1028 296 1112 295 1122 290 1134 276 1154 256 1172 240 1188Z" fill="rgb(144,144,144)"/><path d="M120 685 116 681 112 674 108 660 109 644 113 624 122 599 134 574 150 547 167 524 180 512 198 501 212 496 232 493 242 492 250 494 276 502 296 510 300 511 304 510 308 506 310 496 305 458 305 444 309 428 319 410 324 405 330 400 336 397 344 396 352 396 360 398 368 402 376 408 400 436 403 442 407 456 408 474 404 486 397 502 375 532 371 540 368 552 368 582 364 601 360 612 352 628 338 647 330 653 318 658 304 661 276 665 260 669 246 674 218 686 188 693 160 696 146 696 130 691ZM226 1194 214 1195 188 1191 176 1186 162 1177 150 1167 138 1152 130 1141 117 1118 116 1110 115 1084 115 1032 120 984 122 976 126 971 132 966 144 961 152 959 162 960 244 975 268 985 276 990 282 997 288 1010 291 1020 292 1032 294 1112 293 1122 288 1133 274 1152 256 1168 238 1187Z" fill="rgb(159,159,159)"/><path d="M124 680 117 670 114 658 114 642 118 626 128 598 138 578 156 547 173 524 186 512 200 504 216 498 236 496 248 497 263 502 277 508 298 520 304 520 308 519 312 514 314 504 308 460 308 448 311 432 319 416 324 409 329 404 336 400 342 399 350 399 358 400 366 404 374 410 387 426 398 437 402 444 405 452 406 462 406 476 396 499 390 508 382 518 362 533 342 542 336 546 335 548 337 550 348 555 354 562 358 572 358 582 355 592 351 600 346 606 334 618 329 630 324 636 314 643 306 645 298 642 288 636 284 636 233 672 218 680 202 684 180 688 150 690 136 687ZM302 596 306 595 308 590 309 580 308 571 306 572 304 575 300 586 300 594ZM226 1192 214 1193 192 1189 182 1185 170 1178 158 1169 150 1161 136 1142 120 1117 118 1108 118 1032 119 1016 124 993 128 981 134 974 144 970 152 967 162 968 242 982 264 990 274 996 282 1004 287 1014 290 1024 293 1112 291 1122 286 1132 272 1150 254 1166 238 1184 232 1189Z" fill="rgb(174,174,174)"/><path d="M128 674 122 665 119 654 120 640 123 626 135 594 143 578 162 548 181 522 193 512 206 505 222 500 238 499 250 501 265 508 274 514 290 528 296 531 304 532 312 529 318 524 321 516 320 508 313 474 310 454 313 436 320 420 325 412 330 406 336 403 342 401 350 401 358 403 366 407 373 412 386 428 398 440 402 448 404 458 405 470 404 476 400 486 390 504 384 512 378 517 364 524 340 529 332 533 306 549 302 553 298 561 294 574 287 612 281 622 275 630 268 635 249 648 222 670 208 677 184 681 154 684 140 682 132 678ZM328 599 324 596 322 590 321 580 322 572 324 567 328 564 334 562 340 562 344 564 349 570 351 576 350 584 347 590 342 596 334 599ZM304 632 301 630 298 626 297 620 298 616 301 612 306 609 314 608 318 608 320 611 321 616 321 622 319 626 316 630 312 632 308 633ZM226 1189 220 1191 214 1190 195 1186 184 1182 173 1176 162 1167 155 1160 123 1116 122 1108 121 1034 122 1020 127 1004 131 994 138 988 148 983 158 980 168 980 230 988 244 991 264 997 274 1001 282 1009 286 1016 288 1024 289 1034 289 1078 291 1112 290 1120 285 1130 272 1146 252 1165 236 1183Z" fill="rgb(190,190,190)"/><path d="M360 519 350 520 342 518 334 514 328 508 324 501 319 488 314 462 313 452 314 444 317 432 321 422 330 410 336 406 344 404 352 404 358 406 370 413 384 430 397 442 400 448 402 457 403 468 402 476 396 489 390 500 384 508 378 513 370 517ZM137 672 130 665 125 656 124 646 126 634 135 612 142 592 146 582 162 557 184 527 192 518 200 512 212 506 222 504 234 503 244 504 254 508 263 514 274 524 280 532 287 544 290 554 289 566 283 598 279 610 272 622 262 630 228 649 214 664 205 670 186 674 156 678 146 676ZM338 587 334 587 332 585 329 580 330 574 332 571 336 570 339 570 342 572 344 578 342 584ZM226 1187 218 1188 210 1187 188 1180 175 1172 165 1164 158 1157 127 1114 126 1108 125 1038 126 1024 130 1010 134 1001 140 996 148 992 158 989 166 989 242 998 272 1006 280 1011 284 1018 286 1024 287 1034 286 1076 289 1112 288 1120 284 1127 274 1139 249 1164 234 1182Z" fill="rgb(205,205,205)"/><path d="M364 514 356 515 348 514 340 511 333 506 330 502 326 494 318 472 316 452 318 442 321 430 326 420 330 414 336 409 342 407 350 407 356 408 367 414 383 432 394 442 398 448 399 454 401 466 400 474 392 492 386 501 380 508 374 511ZM142 664 138 660 134 654 132 646 133 640 143 614 148 590 154 579 164 563 196 523 201 518 210 512 220 508 232 506 242 508 250 512 259 520 272 535 279 546 282 556 282 572 280 588 276 600 268 613 264 618 258 622 222 641 216 646 208 659 200 664 188 667 170 669 152 668ZM226 1184 218 1186 211 1184 188 1172 180 1166 166 1152 135 1110 134 1104 133 1086 134 1048 133 1020 135 1012 138 1006 142 1002 148 998 156 996 162 996 176 998 200 999 222 1003 258 1011 274 1013 280 1017 283 1022 285 1030 285 1040 282 1074 286 1100 287 1112 286 1118 283 1124 278 1130 246 1162 233 1180Z" fill="rgb(220,220,220)"/><path d="M365 510 358 511 350 510 342 506 336 502 332 497 328 489 322 472 320 452 324 432 328 423 332 417 338 412 344 410 350 410 356 411 366 417 380 434 392 444 395 448 397 454 398 464 398 472 396 478 390 490 384 499 379 504 372 508ZM159 608 154 602 154 596 156 588 162 576 176 558 194 541 210 520 218 514 224 512 230 511 236 511 243 514 247 518 270 546 273 554 275 562 276 572 275 582 273 590 269 598 264 604 258 608 246 612 220 614 202 620 194 621 174 616ZM197 650 195 654 192 656 184 658 176 656 173 652 174 648 176 645 180 643 186 642 190 642 194 643 197 646ZM226 1181 218 1182 209 1178 184 1152 168 1128 156 1121 151 1114 147 1102 145 1080 145 1072 150 1054 151 1046 149 1040 142 1026 140 1020 142 1011 148 1006 156 1004 174 1008 194 1007 206 1008 228 1013 258 1026 262 1026 270 1021 274 1020 278 1021 280 1024 282 1032 282 1046 275 1074 282 1096 284 1110 283 1118 278 1125 256 1146 240 1163 232 1176Z" fill="rgb(236,236,236)"/><path d="M367 504 354 505 342 500 338 496 334 490 328 474 324 454 328 436 334 422 338 418 344 416 354 416 362 420 377 438 389 448 392 454 394 468 390 480 384 491 378 498 372 502ZM166 603 162 598 162 594 164 587 170 577 182 562 202 544 217 524 222 519 230 517 235 518 239 520 264 551 268 566 269 580 264 592 260 597 254 601 244 604 218 606 200 612 194 613 178 609ZM224 1176 218 1176 214 1173 206 1164 189 1146 174 1122 161 1114 157 1108 154 1096 153 1078 159 1046 157 1038 149 1022 149 1016 152 1013 158 1012 174 1016 196 1014 216 1017 236 1024 258 1036 264 1035 274 1029 276 1030 277 1032 278 1038 277 1046 269 1066 268 1074 269 1080 276 1094 278 1100 279 1110 278 1116 274 1123 253 1140 236 1160 228 1173Z" fill="rgb(251,251,251)"/></g>
<path d="M100.0 300.0 404.1 300.0 404.1 530.0 100.0 530.0Z" fill="#ff80ff" fill-opacity=".25"/>
<path d="M100.0 530.0 404.1 530.0 404.1 613.0 348.9 613.0 348.9 695.9 321.2 695.9 321.2 723.5 293.5 723.5 293.5 751.2 100.0 751.2Z" fill="#80ff00" fill-opacity=".25"/>
<path d="M100.0 751.2 293.5 751.2 293.5 1027.7 100.0 1027.7Z" fill="#f08000" fill-opacity=".25"/>
<path d="M100.0 1027.7 293.5 1027.7 293.5 1138.3 265.9 1138.3 265.9 1165.9 238.2 1165.9 238.2 1193.6 155.3 1193.6 155.3 1165.9 127.7 1165.9 127.7 1138.3 100.0 1138.3Z" fill="#ff0000" fill-opacity=".25"/>
</g>
<path d="M376.3 439.2 382.8 438.2 400.7 444.7 402.1 473.4 396.5 475.4 376.3 475.4Z" fill="#ff0000"/>
<path d="M606.4 941.6C605.5 925.3 606.7 911.7 606.4 895.9C606.1 880.1 605.5 863.2 604.8 846.9C604.1 830.6 603.3 812.6 602.2 797.9C601.1 783.2 600.0 769.6 598.3 758.8C596.5 747.9 594.2 739.2 591.7 732.6C589.3 726.1 587.1 724.6 583.6 719.6C580.0 714.6 574.7 708.4 570.5 702.6C566.3 696.9 561.7 689.8 558.4 685.0C555.1 680.2 551.1 678.1 550.6 673.9C550.1 669.6 555.1 666.8 555.2 659.5C555.2 652.2 555.2 646.5 550.9 630.1C546.7 613.8 535.4 588.8 529.7 561.6C524.0 534.4 518.0 489.8 516.6 466.9C515.3 444.1 520.6 435.4 521.5 424.5C522.5 413.6 522.4 407.5 522.5 401.6C522.7 395.7 521.9 394.7 522.5 389.2C523.2 383.8 524.2 375.1 526.4 369.0C528.7 362.9 531.9 356.7 536.2 352.6C540.6 348.6 545.5 346.7 552.6 344.5C559.6 342.3 568.3 340.9 578.7 339.6C589.0 338.2 601.0 336.8 614.6 336.3C628.2 335.9 647.8 336.2 660.3 337.0C672.8 337.8 681.0 339.2 689.7 341.2C698.4 343.3 705.4 345.8 712.5 349.4C719.6 352.9 724.5 355.9 732.1 362.4C739.7 369.0 750.1 379.9 758.2 388.6C766.4 397.3 775.6 406.5 781.1 414.7C786.5 422.8 787.6 429.9 790.9 437.5C794.1 445.1 797.9 452.8 800.7 460.4C803.4 468.0 805.6 476.2 807.2 483.2C808.8 490.3 809.6 495.7 810.5 502.8C811.3 509.9 811.0 518.1 812.1 525.7C813.2 533.3 815.1 539.3 817.0 548.5C818.9 557.8 821.3 559.4 823.5 581.2C825.7 602.9 829.0 646.0 830.1 679.1C831.1 712.3 830.1 738.4 830.1 780.0C830.1 821.6 830.1 871.1 830.1 928.5C830.1 985.9 831.3 1093.1 830.1 1124.4C828.8 1155.7 832.0 1105.9 822.6 1116.5C813.2 1127.2 792.7 1172.5 773.7 1188.3C754.7 1204.0 730.2 1213.8 708.5 1211.1C686.7 1208.4 659.0 1192.1 643.3 1172.0C627.5 1151.8 619.1 1120.3 613.9 1090.4C608.8 1060.5 612.6 1008.7 612.3 992.6C612.0 976.5 612.9 1002.3 612.0 993.8C611.0 985.3 607.3 957.9 606.4 941.6Z" fill="#fff" stroke="#1c1c1c" stroke-width="3.2" stroke-linejoin="round"/>
<clipPath id="olRF1"><path d="M606.4 941.6C605.5 925.3 606.7 911.7 606.4 895.9C606.1 880.1 605.5 863.2 604.8 846.9C604.1 830.6 603.3 812.6 602.2 797.9C601.1 783.2 600.0 769.6 598.3 758.8C596.5 747.9 594.2 739.2 591.7 732.6C589.3 726.1 587.1 724.6 583.6 719.6C580.0 714.6 574.7 708.4 570.5 702.6C566.3 696.9 561.7 689.8 558.4 685.0C555.1 680.2 551.1 678.1 550.6 673.9C550.1 669.6 555.1 666.8 555.2 659.5C555.2 652.2 555.2 646.5 550.9 630.1C546.7 613.8 535.4 588.8 529.7 561.6C524.0 534.4 518.0 489.8 516.6 466.9C515.3 444.1 520.6 435.4 521.5 424.5C522.5 413.6 522.4 407.5 522.5 401.6C522.7 395.7 521.9 394.7 522.5 389.2C523.2 383.8 524.2 375.1 526.4 369.0C528.7 362.9 531.9 356.7 536.2 352.6C540.6 348.6 545.5 346.7 552.6 344.5C559.6 342.3 568.3 340.9 578.7 339.6C589.0 338.2 601.0 336.8 614.6 336.3C628.2 335.9 647.8 336.2 660.3 337.0C672.8 337.8 681.0 339.2 689.7 341.2C698.4 343.3 705.4 345.8 712.5 349.4C719.6 352.9 724.5 355.9 732.1 362.4C739.7 369.0 750.1 379.9 758.2 388.6C766.4 397.3 775.6 406.5 781.1 414.7C786.5 422.8 787.6 429.9 790.9 437.5C794.1 445.1 797.9 452.8 800.7 460.4C803.4 468.0 805.6 476.2 807.2 483.2C808.8 490.3 809.6 495.7 810.5 502.8C811.3 509.9 811.0 518.1 812.1 525.7C813.2 533.3 815.1 539.3 817.0 548.5C818.9 557.8 821.3 559.4 823.5 581.2C825.7 602.9 829.0 646.0 830.1 679.1C831.1 712.3 830.1 738.4 830.1 780.0C830.1 821.6 830.1 871.1 830.1 928.5C830.1 985.9 831.3 1093.1 830.1 1124.4C828.8 1155.7 832.0 1105.9 822.6 1116.5C813.2 1127.2 792.7 1172.5 773.7 1188.3C754.7 1204.0 730.2 1213.8 708.5 1211.1C686.7 1208.4 659.0 1192.1 643.3 1172.0C627.5 1151.8 619.1 1120.3 613.9 1090.4C608.8 1060.5 612.6 1008.7 612.3 992.6C612.0 976.5 612.9 1002.3 612.0 993.8C611.0 985.3 607.3 957.9 606.4 941.6Z"/></clipPath><g clip-path="url(#olRF1)">
<path d="M598.3 336.3 681.5 336.3 681.5 362.4 598.3 362.4Z" fill="#ffdfff"/>
<path d="M751.7 417.9 764.1 417.9 764.1 432.6 751.7 432.6Z" fill="#ffdfff"/>
<path d="M781.1 471.8 794.8 471.8 794.8 481.6 781.1 481.6Z" fill="#ffdfff"/>
<path d="M626.0 734.3 706.0 734.3 706.0 752.2 626.0 752.2Z" fill="#e0ffc0"/>
<path d="M626.0 752.2 706.0 752.2 706.0 861.6 626.0 861.6Z" fill="#fce0c4"/>
</g>
<clipPath id="fpRF1"><path d="M529.7 355.9 549.3 346.1 595.0 345.5 598.3 355.9 624.4 360.8 679.9 360.8 692.9 362.4 709.3 373.9 735.4 390.2 751.7 419.6 763.1 431.0 771.3 465.3 794.1 480.0 803.9 502.8 812.1 528.9 823.5 538.7 833.3 568.1 846.4 597.5 848.0 662.8 846.4 780.0 847.1 960.0 847.1 1064.3 843.8 1100.2 838.9 1123.0 832.4 1142.6 819.3 1158.9 799.8 1181.7 783.5 1194.8 763.9 1207.8 744.3 1216.0 724.8 1220.9 692.2 1220.9 675.9 1211.1 659.6 1198.0 643.3 1185.0 627.0 1168.7 613.9 1152.4 607.4 1132.8 602.5 1113.3 602.5 1008.9 601.5 1010.1 604.8 1006.9 606.4 944.9 609.7 908.9 614.6 895.9 626.0 863.2 627.6 856.7 634.2 843.6 650.5 845.3 660.3 856.7 673.3 858.3 689.7 850.2 701.1 837.1 701.1 781.6 692.9 765.3 676.6 749.0 653.8 739.2 626.0 735.9 626.0 729.4 595.0 726.1 581.9 711.8 568.9 695.4 552.6 679.1 536.2 659.5 523.2 633.4 515.0 613.8 505.2 591.0 500.3 555.1 497.1 515.9 492.2 493.0 492.2 450.6 495.4 427.7 502.0 417.9 511.7 403.2 519.9 390.2Z"/></clipPath>
<g clip-path="url(#fpRF1)"><g filter="url(#heat)"><rect x="467" y="320" width="406" height="925" fill="#000"/><path d="M734 1213 720 1216 694 1214 680 1207 652 1185 629 1161 620 1149 616 1139 608 1111 608 1015 609 1005 610 983 612 973 612 943 614 935 615 923 619 901 634 859 638 853 642 851 646 852 656 862 666 865 674 865 680 864 692 858 700 850 707 841 708 837 708 789 706 779 697 765 678 748 658 738 636 734 630 731 625 727 600 721 594 717 553 675 539 657 528 635 509 591 503 557 501 513 496 491 497 449 499 437 502 427 526 391 535 363 539 359 552 354 572 353 580 351 588 352 590 353 595 359 600 362 620 367 682 368 690 370 704 377 730 395 745 421 757 435 767 469 789 487 797 503 808 529 821 545 827 557 842 599 844 641 842 871 843 879 843 1063 840 1099 836 1117 826 1139 815 1155 802 1170 790 1182 778 1192 750 1208Z" fill="rgb(14,14,14)"/><path d="M724 1211 704 1211 694 1209 682 1203 654 1182 633 1159 624 1147 620 1139 615 1117 613 1105 613 1017 615 985 617 973 619 945 624 913 627 901 642 863 644 862 652 868 666 872 676 873 684 871 696 864 706 855 713 845 715 839 715 795 713 783 708 775 697 761 680 746 658 735 638 731 632 729 626 725 602 718 598 715 555 673 541 655 529 633 513 593 509 581 506 557 503 513 500 489 501 449 503 437 506 427 514 415 533 391 537 383 542 367 544 365 554 361 584 359 590 365 596 368 620 375 682 376 699 383 724 401 739 425 751 439 761 473 764 477 783 491 793 507 807 533 819 547 825 559 839 599 842 641 841 713 840 725 838 861 840 911 839 1065 835 1107 832 1117 822 1137 811 1151 788 1178 776 1188 754 1201 742 1206Z" fill="rgb(24,24,24)"/><path d="M730 1207 720 1208 700 1207 696 1206 684 1200 652 1176 634 1155 626 1143 621 1127 618 1107 617 1027 619 987 625 955 628 947 634 940 666 918 722 891 737 879 758 859 762 852 764 843 767 809 766 801 763 795 758 792 750 791 730 789 722 787 700 760 680 743 660 734 638 729 628 723 602 714 558 672 544 655 537 645 532 633 515 593 512 581 508 555 506 511 503 489 503 461 504 451 507 435 515 419 534 397 540 392 546 390 560 388 568 389 576 392 584 397 601 413 622 449 634 463 642 469 674 479 720 487 766 493 774 496 780 499 788 508 804 534 814 545 819 553 825 565 836 599 839 639 839 683 834 869 837 913 837 979 835 1007 835 1065 832 1105 829 1115 818 1135 808 1149 785 1175 776 1183 764 1191 742 1202Z" fill="rgb(37,37,37)"/><path d="M728 1204 718 1205 702 1204 696 1202 686 1198 654 1174 636 1153 629 1141 624 1127 623 1113 622 1035 625 985 630 957 634 949 640 943 656 932 672 922 726 901 734 897 746 889 769 867 774 859 777 847 779 809 779 801 776 795 766 789 752 785 730 783 722 780 701 757 682 741 660 731 638 726 628 720 604 712 588 698 560 671 549 659 541 647 533 631 518 593 514 581 511 553 509 511 506 489 506 453 510 437 512 431 517 421 524 412 534 402 540 399 558 395 566 395 572 397 580 403 597 419 612 446 622 459 632 471 640 476 676 486 766 500 778 505 788 515 802 536 813 547 818 555 823 567 834 601 837 639 836 707 830 871 830 891 834 913 834 979 831 1005 831 1065 828 1103 825 1115 815 1133 782 1173 774 1181 762 1189 740 1200Z" fill="rgb(52,52,52)"/><path d="M727 1201 718 1202 700 1200 690 1196 681 1191 660 1176 654 1170 638 1150 630 1137 627 1121 627 1061 629 1027 633 1005 631 987 633 965 636 955 642 946 654 938 674 927 690 921 720 912 760 906 767 903 772 899 778 891 791 869 797 855 798 845 795 799 792 793 786 789 732 778 724 775 718 771 702 754 683 739 662 729 640 724 630 718 606 709 590 696 563 671 545 649 535 631 518 587 514 555 512 513 509 483 510 455 515 433 521 421 530 411 538 405 546 403 558 400 566 401 572 404 579 409 593 423 608 449 618 463 628 474 636 480 670 490 704 494 764 505 774 509 790 523 802 539 813 551 821 567 832 601 835 641 834 711 826 839 822 885 823 893 830 906 831 921 831 981 830 991 827 1005 827 1023 825 1047 824 1105 822 1112 810 1133 775 1175 768 1181 759 1187 738 1197Z" fill="rgb(67,67,67)"/><path d="M820 786 812 789 804 789 788 783 770 781 750 777 731 771 718 763 701 749 684 736 662 726 640 721 632 716 618 711 606 705 590 693 564 669 553 657 546 647 538 633 521 589 518 579 516 555 513 491 515 465 517 455 520 446 526 436 532 429 544 422 554 419 564 420 576 424 584 429 592 437 605 457 618 483 626 490 638 494 656 498 688 496 702 497 729 503 764 513 774 518 788 527 810 550 816 561 820 569 830 601 831 613 833 641 832 681 830 749 826 777 824 782ZM692 1193 673 1181 657 1169 638 1144 634 1136 632 1129 631 1119 632 1053 635 1027 642 1003 641 999 637 991 636 985 637 967 640 956 645 949 654 943 676 931 693 925 724 917 762 912 790 902 808 900 818 902 825 907 828 915 828 981 827 989 823 1001 823 1027 817 1055 811 1075 798 1105 799 1109 806 1114 808 1116 809 1121 807 1127 799 1139 775 1169 767 1177 758 1183 734 1195 724 1198 709 1197Z" fill="rgb(82,82,82)"/><path d="M817 777 810 780 802 780 764 776 747 771 736 765 714 749 686 734 664 724 640 717 600 695 590 688 577 677 556 657 548 647 539 629 523 589 520 577 518 551 520 477 524 457 528 451 531 447 540 442 552 438 568 436 580 438 588 443 597 455 602 467 606 487 607 493 612 499 618 503 632 508 654 510 660 509 676 502 686 499 696 499 710 502 727 507 758 520 784 530 792 535 808 551 814 560 818 569 828 601 829 615 830 667 827 745 823 767 820 773ZM692 1187 669 1173 659 1165 642 1142 638 1134 636 1127 635 1085 636 1053 641 1025 650 999 650 993 645 985 644 981 645 967 647 959 649 955 654 951 676 939 692 933 714 927 732 923 760 920 784 915 810 912 818 913 820 915 821 921 822 949 824 983 819 1001 819 1023 817 1037 806 1067 790 1102 788 1109 788 1113 790 1117 798 1123 799 1127 798 1131 790 1142 767 1169 761 1175 752 1181 730 1191 722 1193 706 1191Z" fill="rgb(98,98,98)"/><path d="M806 761 800 764 788 763 777 761 768 757 761 751 755 739 753 731 754 725 750 724 689 693 680 690 676 694 672 696 662 696 648 695 636 693 606 682 582 672 568 663 554 651 548 643 540 627 526 590 523 577 523 555 524 529 524 477 527 461 530 455 534 450 546 444 560 441 574 441 584 446 591 453 597 463 602 491 604 499 610 507 618 513 636 516 654 517 662 515 675 507 684 503 694 502 706 504 722 509 750 524 786 537 794 543 808 556 812 562 816 570 826 603 827 615 827 641 826 665 822 689 818 703 809 719 808 721 814 735 814 747 812 754ZM684 1170 670 1163 660 1154 645 1133 642 1127 640 1119 638 1087 640 1052 646 1024 660 991 666 983 684 969 694 963 706 958 734 949 744 947 780 945 788 946 794 948 810 959 814 964 816 969 818 983 816 1001 816 1023 812 1037 802 1065 782 1107 778 1131 772 1137 753 1147 740 1161 724 1170 715 1173 702 1175 694 1174Z" fill="rgb(113,113,113)"/><path d="M808 688 804 692 798 694 784 694 774 692 690 652 682 649 676 649 670 651 662 655 646 668 642 669 636 670 610 666 582 659 566 653 556 647 548 638 542 626 534 602 529 579 529 569 531 533 527 479 530 463 534 455 538 451 544 448 558 444 574 444 583 449 590 457 594 465 599 497 604 510 608 517 616 522 644 526 656 525 662 522 672 513 680 508 690 505 700 505 710 508 718 511 724 515 736 526 742 530 782 543 794 551 807 563 812 569 816 581 821 611 821 621 818 661 814 676ZM716 627 714 623 713 621 708 619 704 619 694 621 691 623 689 627 692 633 698 636 710 633 714 630ZM675 1149 668 1143 648 1121 645 1113 643 1095 643 1063 646 1046 654 1021 666 998 675 989 695 973 709 967 734 959 746 956 778 954 788 955 796 959 807 969 812 979 813 987 811 1021 809 1029 792 1070 772 1110 768 1114 754 1117 734 1126 727 1131 716 1143 698 1154 694 1155 688 1155Z" fill="rgb(128,128,128)"/><path d="M799 669 792 674 782 675 772 672 756 664 748 657 743 645 742 635 745 625 743 621 737 617 720 610 704 606 684 605 673 609 664 615 646 633 638 639 630 642 622 643 600 642 574 646 564 645 556 640 550 633 546 625 542 613 539 597 539 577 542 549 532 501 530 481 531 467 536 457 544 451 558 447 572 447 578 449 582 452 588 459 591 467 596 499 602 521 606 527 612 530 632 536 648 538 656 537 662 535 666 531 672 519 678 513 690 508 702 508 714 513 722 519 725 525 729 541 734 546 738 547 754 549 762 551 778 558 788 564 794 571 799 579 802 589 803 597 801 605 796 613 792 618 782 625 780 629 783 633 796 642 800 649 802 655 802 661ZM704 543 700 540 694 540 690 541 688 543 688 545 692 548 696 549 702 547 703 545ZM656 1116 651 1109 648 1093 648 1069 650 1055 656 1041 667 1021 689 993 696 987 712 978 734 969 744 967 782 964 791 967 800 973 804 979 806 987 807 1009 805 1019 800 1027 780 1041 772 1049 762 1070 750 1103 745 1111 739 1115 728 1120 716 1122 666 1120 660 1118Z" fill="rgb(144,144,144)"/><path d="M536 461 539 457 544 454 558 450 572 450 578 453 582 456 588 465 590 475 594 509 595 529 598 534 604 538 622 546 634 548 654 549 672 546 682 555 690 559 702 558 718 553 732 559 752 561 760 563 777 571 784 578 788 585 790 592 790 597 788 603 785 607 780 611 774 613 768 614 710 596 692 594 680 594 672 596 660 602 652 609 639 623 628 630 600 634 574 640 566 640 560 637 554 632 550 625 545 605 544 591 546 573 548 565 553 553 554 547 551 535 539 511 535 495 533 477 534 467ZM718 529 716 533 714 534 698 533 682 534 677 531 676 523 679 517 684 514 692 511 700 511 708 514 714 517 718 523ZM684 1108 679 1101 674 1087 671 1077 671 1067 674 1041 678 1027 683 1015 693 1001 699 995 711 989 740 979 778 976 784 976 790 979 795 985 798 993 799 1001 798 1009 792 1017 780 1025 772 1029 758 1033 752 1037 751 1041 753 1057 752 1065 744 1089 735 1103 726 1111 716 1114 696 1113 689 1111Z" fill="rgb(159,159,159)"/><path d="M580 524 568 525 556 522 548 515 542 506 536 489 535 475 538 463 541 459 546 456 558 453 570 453 578 457 584 465 588 481 590 509 588 515 586 519ZM710 523 709 525 706 526 694 527 688 526 685 525 684 523 685 519 688 517 696 516 704 517 707 519ZM558 631 554 625 552 619 549 597 549 585 551 573 553 567 556 563 560 560 566 558 594 555 602 556 616 560 624 563 629 567 632 571 634 577 636 585 636 593 631 609 624 618 614 624 576 635 566 635Z" fill="rgb(174,174,174)"/><path d="M576 515 568 516 558 515 550 509 544 501 539 487 538 475 541 465 547 459 558 456 568 456 576 460 581 467 585 481 585 497 582 509ZM560 627 556 621 554 615 553 595 555 577 557 571 560 568 566 565 574 564 594 563 614 568 623 573 627 581 627 593 624 605 618 613 606 619 574 630 566 630Z" fill="rgb(190,190,190)"/><path d="M570 509 564 510 556 508 548 501 544 493 541 483 541 473 545 465 552 461 560 459 568 460 574 464 579 471 581 483 580 495 576 504ZM564 623 560 617 558 607 558 589 562 577 566 573 576 570 586 570 594 573 599 579 601 585 600 593 597 601 592 607 582 614 572 623 568 624Z" fill="rgb(205,205,205)"/><path d="M566 504 560 504 554 501 549 495 545 487 544 479 546 471 550 467 556 464 564 464 570 466 574 470 577 477 578 487 576 495 572 501ZM568 606 566 603 566 597 568 585 572 581 576 580 580 580 584 581 586 583 588 587 586 595 579 601 572 605Z" fill="rgb(220,220,220)"/><path d="M564 499 558 498 554 495 551 491 549 485 549 479 550 474 554 470 558 468 564 468 568 470 572 475 573 479 574 485 572 492 569 497Z" fill="rgb(236,236,236)"/><path d="M562 492 559 491 557 489 555 483 556 477 560 475 563 475 566 477 568 483 566 490Z" fill="rgb(251,251,251)"/></g>
<path d="M515.0 300.0 819.1 300.0 819.1 530.0 515.0 530.0Z" fill="#ff80ff" fill-opacity=".25"/>
<path d="M515.0 530.0 819.1 530.0 819.1 751.2 625.6 751.2 625.6 723.5 598.0 723.5 598.0 695.9 570.3 695.9 570.3 613.0 515.0 613.0Z" fill="#80ff00" fill-opacity=".25"/>
<path d="M625.6 751.2 819.1 751.2 819.1 1027.7 625.6 1027.7Z" fill="#f08000" fill-opacity=".25"/>
<path d="M625.6 1027.7 819.1 1027.7 819.1 1138.3 791.5 1138.3 791.5 1165.9 763.9 1165.9 763.9 1193.6 680.9 1193.6 680.9 1165.9 653.2 1165.9 653.2 1138.3 625.6 1138.3Z" fill="#ff0000" fill-opacity=".25"/>
</g>
<path d="M2021.6 925.3C2022.6 908.9 2021.9 908.9 2022.2 895.9C2022.6 882.8 2023.0 863.2 2023.9 846.9C2024.7 830.6 2025.9 812.6 2027.1 797.9C2028.4 783.2 2029.7 769.6 2031.4 758.8C2033.0 747.9 2034.9 739.1 2036.9 732.6C2038.9 726.2 2041.7 724.0 2043.5 720.2C2045.2 716.5 2047.7 714.3 2047.7 710.1C2047.7 706.0 2041.7 704.4 2043.5 695.4C2045.2 686.5 2049.7 675.3 2058.1 656.3C2066.6 637.2 2084.3 604.6 2094.1 581.2C2103.8 557.8 2112.6 534.9 2116.9 515.9C2121.3 496.8 2121.3 484.9 2120.2 466.9C2119.1 449.0 2113.2 422.8 2110.4 408.1C2107.5 393.5 2105.6 386.8 2103.2 378.8C2100.8 370.7 2098.6 364.7 2096.0 359.8C2093.4 354.9 2093.3 352.5 2087.5 349.4C2081.8 346.3 2070.7 343.1 2061.4 341.2C2052.2 339.3 2044.0 338.7 2032.0 338.0C2020.1 337.2 2003.7 336.3 1989.6 337.0C1975.4 337.7 1958.6 339.9 1947.1 342.2C1935.7 344.5 1929.7 346.6 1921.0 351.0C1912.3 355.5 1905.0 360.5 1894.9 369.0C1884.8 377.4 1868.8 393.5 1860.6 401.6C1852.5 409.8 1850.5 409.8 1845.9 417.9C1841.4 426.1 1837.6 439.7 1833.5 450.6C1829.5 461.5 1824.3 471.3 1821.5 483.2C1818.6 495.2 1817.1 511.5 1816.6 522.4C1816.0 533.3 1818.7 538.7 1818.2 548.5C1817.6 558.3 1815.7 559.4 1813.3 581.2C1810.8 602.9 1805.1 646.0 1803.5 679.1C1801.9 712.3 1803.5 738.4 1803.5 780.0C1803.5 821.6 1803.5 871.1 1803.5 928.5C1803.5 985.9 1801.9 1092.0 1803.5 1124.4C1805.1 1156.8 1806.2 1112.9 1813.2 1123.0C1820.3 1133.1 1829.5 1170.3 1845.8 1185.0C1862.1 1199.7 1889.3 1211.1 1911.0 1211.1C1932.8 1211.1 1958.9 1205.1 1976.3 1185.0C1993.7 1164.9 2008.6 1122.5 2015.4 1090.4C2022.2 1058.4 2016.9 1008.7 2017.0 992.6C2017.2 976.5 2015.6 1005.0 2016.4 993.8C2017.1 982.6 2020.6 941.6 2021.6 925.3Z" fill="#fff" stroke="#1c1c1c" stroke-width="3.2" stroke-linejoin="round"/>
<clipPath id="olLF2"><path d="M2021.6 925.3C2022.6 908.9 2021.9 908.9 2022.2 895.9C2022.6 882.8 2023.0 863.2 2023.9 846.9C2024.7 830.6 2025.9 812.6 2027.1 797.9C2028.4 783.2 2029.7 769.6 2031.4 758.8C2033.0 747.9 2034.9 739.1 2036.9 732.6C2038.9 726.2 2041.7 724.0 2043.5 720.2C2045.2 716.5 2047.7 714.3 2047.7 710.1C2047.7 706.0 2041.7 704.4 2043.5 695.4C2045.2 686.5 2049.7 675.3 2058.1 656.3C2066.6 637.2 2084.3 604.6 2094.1 581.2C2103.8 557.8 2112.6 534.9 2116.9 515.9C2121.3 496.8 2121.3 484.9 2120.2 466.9C2119.1 449.0 2113.2 422.8 2110.4 408.1C2107.5 393.5 2105.6 386.8 2103.2 378.8C2100.8 370.7 2098.6 364.7 2096.0 359.8C2093.4 354.9 2093.3 352.5 2087.5 349.4C2081.8 346.3 2070.7 343.1 2061.4 341.2C2052.2 339.3 2044.0 338.7 2032.0 338.0C2020.1 337.2 2003.7 336.3 1989.6 337.0C1975.4 337.7 1958.6 339.9 1947.1 342.2C1935.7 344.5 1929.7 346.6 1921.0 351.0C1912.3 355.5 1905.0 360.5 1894.9 369.0C1884.8 377.4 1868.8 393.5 1860.6 401.6C1852.5 409.8 1850.5 409.8 1845.9 417.9C1841.4 426.1 1837.6 439.7 1833.5 450.6C1829.5 461.5 1824.3 471.3 1821.5 483.2C1818.6 495.2 1817.1 511.5 1816.6 522.4C1816.0 533.3 1818.7 538.7 1818.2 548.5C1817.6 558.3 1815.7 559.4 1813.3 581.2C1810.8 602.9 1805.1 646.0 1803.5 679.1C1801.9 712.3 1803.5 738.4 1803.5 780.0C1803.5 821.6 1803.5 871.1 1803.5 928.5C1803.5 985.9 1801.9 1092.0 1803.5 1124.4C1805.1 1156.8 1806.2 1112.9 1813.2 1123.0C1820.3 1133.1 1829.5 1170.3 1845.8 1185.0C1862.1 1199.7 1889.3 1211.1 1911.0 1211.1C1932.8 1211.1 1958.9 1205.1 1976.3 1185.0C1993.7 1164.9 2008.6 1122.5 2015.4 1090.4C2022.2 1058.4 2016.9 1008.7 2017.0 992.6C2017.2 976.5 2015.6 1005.0 2016.4 993.8C2017.1 982.6 2020.6 941.6 2021.6 925.3Z"/></clipPath><g clip-path="url(#olLF2)">
<path d="M1947.1 336.3 2033.7 336.3 2033.7 378.1 1947.1 378.1Z" fill="#ffdfff"/>
<path d="M1919.4 365.7 1947.8 365.7 1947.8 385.3 1919.4 385.3Z" fill="#ffdfff"/>
<path d="M1891.6 390.2 1904.1 390.2 1904.1 406.5 1891.6 406.5Z" fill="#ffdfff"/>
<path d="M1863.9 419.6 1897.5 419.6 1897.5 463.6 1863.9 463.6Z" fill="#ffdfff"/>
<path d="M1836.1 475.1 1864.9 475.1 1864.9 506.1 1836.1 506.1Z" fill="#ffdfff"/>
<path d="M1924.3 735.3 2002.6 735.3 2002.6 752.2 1924.3 752.2Z" fill="#e0ffc0"/>
<path d="M1921.0 752.2 2002.6 752.2 2002.6 873.0 1921.0 873.0Z" fill="#fce0c4"/>
</g>
<clipPath id="fpLF2"><path d="M2032.0 349.4 2077.7 350.0 2094.1 362.4 2107.1 378.8 2116.9 395.1 2126.7 414.7 2136.5 434.3 2143.0 466.9 2139.8 515.9 2136.5 548.5 2128.3 597.5 2120.2 623.6 2107.1 646.5 2090.8 672.6 2074.5 688.9 2061.4 705.2 2041.8 716.7 2028.8 724.8 2002.6 726.5 2002.6 731.3 1970.0 733.0 1956.9 741.1 1943.9 755.5 1935.7 770.2 1930.8 797.9 1935.7 820.8 1943.9 833.9 1960.2 845.3 1983.1 848.5 1996.1 853.4 2002.6 869.8 2019.0 895.9 2023.9 915.5 2025.5 941.6 2030.4 993.8 2032.0 1026.5 2035.3 1075.4 2035.3 1085.2 2032.0 1091.8 2032.0 1124.4 2031.7 1116.5 2028.4 1142.6 2018.7 1158.9 2005.6 1173.6 1989.3 1188.3 1973.0 1201.3 1956.7 1211.1 1943.7 1220.9 1899.6 1220.9 1885.0 1216.0 1865.4 1207.8 1845.8 1193.2 1829.5 1178.5 1813.2 1162.2 1796.9 1144.2 1790.4 1126.3 1785.5 1103.5 1785.5 960.0 1785.5 1059.1 1785.5 928.5 1790.4 889.4 1793.7 846.9 1797.0 797.9 1793.7 749.0 1788.8 700.0 1788.8 780.0 1788.8 744.4 1785.5 705.2 1785.5 604.0 1788.8 577.9 1797.0 558.3 1808.4 545.3 1808.4 530.6 1818.2 528.9 1826.4 515.9 1842.7 496.3 1862.3 476.7 1878.6 460.4 1891.6 447.3 1894.9 404.9 1901.4 395.1 1911.2 385.3 1930.8 375.5 1970.0 375.5 1989.6 373.9 2002.6 365.7 2028.8 354.3Z"/></clipPath>
<g clip-path="url(#fpLF2)"><g filter="url(#heat)"><rect x="1760" y="324" width="408" height="921" fill="#000"/><path d="M1901 1216 1889 1212 1863 1199 1837 1179 1811 1153 1801 1139 1794 1119 1790 1103 1790 929 1794 895 1795 875 1796 865 1797 841 1798 833 1800 803 1800 789 1798 779 1795 739 1791 731 1789 709 1789 613 1792 589 1795 577 1803 561 1813 548 1816 537 1825 531 1831 521 1843 507 1887 462 1896 451 1899 435 1899 423 1902 409 1905 401 1913 393 1935 382 1977 381 1991 379 2013 368 2025 364 2039 356 2049 355 2057 357 2073 358 2077 359 2091 369 2109 395 2132 437 2134 445 2138 467 2135 525 2133 533 2132 549 2124 595 2118 615 2105 641 2088 667 2057 700 2027 718 2003 723 1997 726 1970 731 1955 739 1941 753 1937 760 1933 769 1925 797 1925 803 1928 819 1931 827 1938 837 1957 850 1965 853 1981 856 1991 859 2002 881 2010 893 2014 903 2019 935 2020 949 2025 991 2026 1009 2027 1017 2029 1077 2028 1091 2027 1121 2024 1129 2022 1141 2015 1153 1985 1184 1974 1193 1941 1215 1933 1216Z" fill="rgb(14,14,14)"/><path d="M1901 1211 1891 1209 1865 1195 1851 1186 1839 1176 1814 1151 1805 1137 1798 1119 1794 1103 1794 931 1798 895 1798 875 1800 865 1800 841 1803 803 1803 789 1801 779 1798 739 1794 729 1792 709 1792 617 1793 605 1798 579 1802 569 1806 563 1817 549 1821 541 1828 535 1849 511 1893 467 1902 455 1906 437 1907 425 1909 411 1912 405 1918 399 1937 389 1979 389 1995 385 2016 375 2029 371 2043 363 2071 365 2085 375 2097 389 2113 411 2128 437 2134 459 2135 471 2131 525 2120 593 2114 615 2096 649 2085 665 2055 695 2025 713 2003 719 1995 723 1969 729 1953 738 1937 755 1931 767 1926 783 1919 795 1918 801 1920 817 1923 827 1931 841 1937 846 1953 856 1985 865 1996 885 2004 897 2007 905 2010 917 2017 957 2021 993 2024 1061 2023 1119 2018 1139 2011 1151 1983 1180 1971 1190 1951 1205 1939 1211 1921 1212Z" fill="rgb(24,24,24)"/><path d="M1901 1208 1885 1202 1869 1194 1859 1187 1841 1173 1817 1149 1809 1137 1802 1121 1798 1107 1797 1097 1797 931 1803 867 1803 843 1807 803 1806 789 1804 779 1801 755 1800 739 1797 727 1795 707 1795 619 1796 607 1799 591 1802 577 1808 565 1819 552 1825 543 1839 530 1867 512 1915 486 1939 474 1967 463 1985 453 1991 447 2000 427 2006 417 2015 405 2023 398 2035 392 2049 388 2059 387 2081 390 2091 393 2097 398 2107 408 2116 421 2124 433 2128 443 2133 467 2128 525 2116 595 2110 617 2094 647 2082 663 2052 693 2023 709 1993 720 1967 727 1952 735 1935 753 1929 765 1926 775 1921 784 1915 789 1907 792 1905 795 1903 799 1901 809 1901 815 1903 823 1911 841 1917 850 1926 857 1963 882 1991 903 1999 911 2003 918 2012 957 2017 993 2020 1063 2019 1119 2014 1137 2006 1151 1979 1179 1959 1195 1943 1206 1937 1208 1913 1209Z" fill="rgb(37,37,37)"/><path d="M1901 1205 1893 1202 1879 1196 1861 1185 1843 1171 1821 1149 1811 1135 1805 1119 1802 1107 1801 1095 1800 931 1807 867 1807 843 1811 805 1810 791 1806 777 1803 739 1799 725 1798 707 1798 619 1799 607 1805 579 1811 567 1827 546 1839 536 1869 518 1921 488 1943 478 1969 469 1991 457 1997 449 2011 421 2020 409 2027 403 2037 398 2051 394 2061 394 2079 396 2089 399 2097 404 2105 411 2113 420 2124 439 2127 447 2130 465 2130 473 2126 503 2125 523 2118 571 2112 603 2106 619 2092 645 2080 661 2051 689 2017 707 1993 717 1967 724 1953 731 1932 751 1926 763 1923 773 1919 779 1915 783 1905 785 1898 789 1892 795 1889 801 1888 813 1890 825 1899 845 1906 857 1917 867 1955 891 1985 913 1993 921 1998 931 2004 945 2009 959 2014 991 2017 1061 2016 1117 2011 1135 2003 1149 1976 1177 1957 1193 1941 1203 1937 1205 1911 1206Z" fill="rgb(52,52,52)"/><path d="M1901 1201 1889 1197 1871 1188 1857 1179 1841 1166 1824 1149 1816 1137 1809 1123 1806 1111 1804 1087 1805 1039 1803 1015 1803 933 1808 885 1812 865 1812 845 1815 805 1814 791 1808 775 1805 737 1802 725 1800 707 1800 623 1801 609 1805 589 1807 579 1813 568 1829 549 1839 541 1925 490 1947 480 1973 473 1987 466 1995 461 2001 453 2015 425 2023 414 2029 408 2039 403 2053 399 2079 401 2089 404 2099 410 2107 416 2113 424 2119 433 2124 443 2128 465 2128 475 2124 503 2122 521 2113 583 2108 607 2103 621 2090 643 2083 653 2075 663 2053 683 2005 709 1991 715 1965 722 1951 729 1930 749 1917 776 1913 778 1905 780 1877 791 1872 795 1869 801 1869 813 1872 835 1875 845 1879 852 1891 865 1905 877 1977 920 1989 929 1996 939 2004 957 2009 977 2012 995 2014 1057 2014 1109 2013 1121 2008 1135 1997 1151 1973 1175 1957 1189 1946 1197 1938 1201 1933 1202 1913 1203Z" fill="rgb(67,67,67)"/><path d="M1817 785 1813 780 1811 773 1807 737 1804 725 1802 709 1802 631 1804 611 1809 585 1813 575 1817 569 1831 553 1841 544 1923 494 1949 482 1981 477 1993 473 1999 470 2004 465 2009 457 2023 425 2029 417 2037 411 2053 405 2071 405 2087 408 2103 416 2113 426 2122 441 2126 459 2127 471 2125 487 2114 533 2113 569 2107 604 2101 619 2085 647 2067 666 2047 681 1993 711 1981 715 1965 719 1949 727 1926 747 1915 767 1895 779 1887 782 1859 788 1827 788ZM1939 1196 1921 1199 1905 1198 1885 1191 1869 1183 1847 1167 1830 1151 1821 1139 1813 1123 1810 1111 1809 1083 1809 1039 1806 1015 1807 931 1811 889 1815 881 1821 878 1829 876 1875 872 1887 875 1981 930 1991 940 2000 957 2007 983 2010 1009 2011 1103 2009 1123 2004 1135 1993 1150 1956 1185 1948 1191Z" fill="rgb(82,82,82)"/><path d="M1817 778 1815 775 1813 770 1810 737 1807 723 1805 707 1805 637 1807 615 1813 589 1817 578 1823 569 1837 554 1845 547 1877 528 1909 505 1929 493 1943 487 1953 484 1963 483 1987 485 1998 483 2005 480 2010 475 2015 466 2030 427 2035 421 2041 416 2057 410 2073 409 2091 412 2105 420 2113 429 2120 441 2125 457 2126 471 2122 487 2109 519 2105 531 2109 567 2105 603 2099 618 2083 644 2065 662 2050 673 2025 686 1994 705 1975 713 1963 717 1951 722 1921 741 1913 749 1899 769 1891 775 1883 777 1861 780 1827 780 1821 779ZM1941 1188 1925 1193 1913 1193 1895 1189 1875 1181 1856 1169 1844 1159 1827 1140 1817 1123 1815 1111 1813 1083 1813 1039 1810 1015 1811 963 1813 930 1817 898 1819 892 1823 889 1831 887 1875 884 1886 885 1957 921 1979 934 1989 943 1996 957 2004 983 2007 1009 2008 1099 2007 1121 2003 1131 1993 1144 1979 1156 1955 1180 1949 1184Z" fill="rgb(98,98,98)"/><path d="M1829 760 1825 755 1819 743 1815 732 1812 719 1809 679 1810 641 1813 619 1820 589 1825 580 1842 557 1850 549 1875 535 1911 507 1925 498 1937 492 1955 487 1963 487 1979 490 1987 491 2001 490 2009 486 2015 480 2019 473 2032 431 2037 424 2045 419 2059 413 2075 412 2091 415 2105 423 2113 431 2120 443 2124 459 2124 471 2121 485 2111 505 2101 529 2101 537 2104 555 2105 567 2104 591 2102 603 2097 615 2083 637 2061 656 2049 665 2019 676 1991 690 1951 703 1908 723 1897 731 1877 753 1871 757 1860 761 1849 763 1837 762ZM1939 1181 1925 1185 1915 1185 1891 1180 1879 1175 1861 1164 1849 1155 1827 1132 1822 1125 1819 1119 1818 1111 1816 1085 1816 1037 1814 1013 1816 953 1820 933 1824 923 1831 916 1849 906 1859 904 1871 906 1929 918 1951 925 1973 936 1983 942 1991 953 1997 968 2002 987 2005 1013 2006 1101 2005 1121 2001 1129 1993 1139 1979 1149 1955 1173 1947 1178Z" fill="rgb(113,113,113)"/><path d="M1833 737 1827 730 1823 723 1817 692 1815 675 1817 643 1820 623 1828 593 1844 563 1850 555 1857 549 1877 539 1907 513 1926 501 1939 494 1955 490 1963 491 1979 495 1989 497 2003 496 2011 493 2017 487 2022 477 2035 433 2039 426 2047 421 2063 415 2079 415 2095 419 2107 427 2114 435 2119 445 2123 461 2123 471 2120 483 2109 503 2098 529 2097 537 2101 565 2100 599 2095 613 2083 631 2075 638 2045 657 2015 664 1991 674 1959 678 1941 684 1891 705 1847 739 1841 740 1837 739ZM1941 1174 1929 1177 1919 1177 1893 1172 1881 1168 1853 1149 1829 1127 1825 1122 1822 1117 1821 1111 1819 1087 1820 1039 1818 1013 1820 957 1825 937 1829 927 1837 920 1851 912 1859 911 1871 912 1935 926 1952 931 1973 941 1983 948 1989 957 1995 972 1999 989 2002 1015 2004 1111 2003 1119 1999 1127 1993 1134 1977 1145 1963 1160 1955 1167Z" fill="rgb(128,128,128)"/><path d="M1838 671 1831 662 1827 653 1826 645 1826 637 1832 609 1838 587 1848 565 1855 555 1879 543 1901 522 1911 514 1929 503 1942 497 1951 495 1959 495 1983 502 1995 503 2005 502 2013 499 2019 492 2025 480 2037 434 2042 427 2049 423 2059 419 2067 417 2085 418 2099 423 2111 433 2116 441 2119 451 2122 463 2121 472 2118 481 2107 501 2094 529 2094 537 2097 553 2098 565 2098 591 2097 603 2089 617 2077 632 2071 636 2043 650 2015 656 1993 664 1985 664 1973 658 1955 657 1941 648 1937 648 1931 652 1919 667 1913 672 1905 676 1891 680 1875 682 1853 680 1845 677ZM1939 1170 1929 1172 1921 1172 1897 1167 1885 1163 1863 1149 1844 1133 1833 1125 1829 1121 1825 1115 1824 1109 1823 1087 1823 1041 1822 1013 1825 957 1829 940 1833 931 1841 924 1853 918 1865 917 1887 921 1937 933 1955 939 1972 947 1980 953 1987 963 1993 977 1997 993 2000 1017 2002 1091 2001 1111 2000 1119 1997 1125 1993 1130 1975 1141 1957 1160 1949 1166Z" fill="rgb(144,144,144)"/><path d="M1846 661 1839 652 1837 645 1838 613 1846 579 1852 565 1857 559 1862 555 1875 549 1881 546 1902 525 1911 518 1929 508 1940 503 1949 501 1957 500 1981 508 1993 510 2003 511 2011 508 2019 500 2026 487 2039 435 2044 429 2049 425 2059 421 2067 420 2083 420 2097 424 2105 430 2110 435 2115 443 2119 453 2120 463 2119 471 2116 481 2106 499 2092 527 2091 537 2095 563 2095 599 2093 605 2089 613 2076 629 2067 634 2043 643 2013 648 1993 653 1989 652 1977 646 1959 644 1945 635 1939 634 1935 635 1931 638 1907 661 1893 667 1879 669 1861 668 1851 666ZM1939 1165 1931 1167 1921 1167 1899 1162 1889 1159 1871 1147 1849 1129 1835 1121 1831 1118 1828 1113 1827 1107 1826 1087 1827 1017 1828 983 1830 959 1833 946 1837 937 1845 929 1855 924 1867 923 1889 927 1933 939 1961 949 1971 954 1977 959 1985 970 1989 979 1993 993 1997 1019 1999 1085 1999 1107 1998 1117 1995 1123 1991 1127 1973 1138 1961 1151 1953 1158Z" fill="rgb(159,159,159)"/><path d="M1853 639 1846 625 1845 617 1845 611 1852 579 1856 567 1861 561 1881 550 1901 531 1911 522 1923 516 1937 511 1949 508 1959 508 1983 515 2003 523 2007 523 2011 521 2019 510 2028 491 2041 437 2045 431 2051 427 2067 422 2075 422 2085 423 2097 427 2105 432 2110 437 2113 443 2117 453 2118 463 2118 471 2115 479 2104 497 2089 527 2088 537 2093 563 2092 599 2087 611 2079 621 2073 627 2063 632 2041 638 2011 636 1993 637 1983 634 1961 626 1941 616 1937 615 1932 617 1927 629 1921 636 1913 643 1905 647 1897 647 1885 641 1879 640 1865 644 1861 644 1857 643ZM1937 1161 1929 1162 1923 1162 1895 1153 1885 1147 1859 1129 1837 1118 1832 1111 1831 1103 1831 1021 1833 981 1839 954 1843 945 1849 937 1857 933 1863 932 1869 932 1895 937 1928 947 1961 959 1968 963 1975 970 1981 979 1985 988 1991 1009 1993 1023 1996 1083 1996 1105 1995 1115 1992 1121 1988 1125 1971 1134 1955 1151 1945 1157Z" fill="rgb(174,174,174)"/><path d="M1875 605 1873 599 1872 577 1874 571 1891 545 1911 527 1919 522 1929 519 1955 514 1965 516 1979 520 2003 531 2007 531 2011 530 2015 528 2019 523 2025 509 2033 483 2041 443 2044 437 2047 433 2053 429 2063 425 2071 424 2079 424 2095 428 2103 433 2109 439 2112 445 2115 453 2117 461 2116 469 2113 478 2102 495 2086 527 2085 537 2089 555 2090 563 2089 597 2087 604 2083 611 2077 619 2071 624 2059 629 2041 632 1991 627 1965 619 1939 604 1931 603 1924 605 1911 618 1907 620 1903 621 1896 619ZM1941 1153 1931 1156 1925 1155 1919 1153 1901 1144 1875 1126 1845 1117 1841 1115 1837 1110 1835 1097 1836 1031 1839 987 1841 979 1844 973 1849 968 1855 964 1861 962 1867 962 1885 964 1943 981 1957 986 1973 995 1979 1000 1983 1007 1988 1023 1991 1051 1993 1099 1991 1115 1989 1119 1984 1123 1969 1128 1965 1130 1954 1145Z" fill="rgb(190,190,190)"/><path d="M1897 565 1893 559 1893 555 1893 551 1897 545 1913 531 1927 524 1947 521 1959 521 1981 527 2005 539 2011 539 2017 535 2023 527 2029 511 2036 483 2045 441 2048 435 2053 432 2061 428 2069 427 2085 428 2093 430 2099 433 2105 438 2109 443 2113 451 2114 459 2115 465 2113 472 2084 523 2080 533 2080 539 2085 555 2086 563 2086 589 2085 599 2078 611 2073 617 2068 621 2054 625 2039 626 2013 622 1993 615 1973 614 1961 608 1933 589 1909 576 1903 572ZM1941 1143 1933 1146 1925 1145 1909 1137 1879 1116 1871 1114 1851 1111 1847 1109 1845 1107 1844 1101 1845 989 1849 979 1857 972 1865 970 1877 971 1942 991 1956 997 1967 1003 1973 1009 1977 1016 1981 1027 1984 1051 1986 1089 1985 1111 1983 1115 1979 1117 1967 1118 1961 1120 1956 1125 1950 1137Z" fill="rgb(205,205,205)"/><path d="M1905 560 1902 555 1902 549 1905 545 1911 539 1917 534 1925 531 1947 526 1959 526 1969 529 1985 535 2003 548 2007 549 2013 548 2023 539 2029 529 2040 481 2046 447 2048 441 2051 437 2057 433 2063 431 2071 429 2079 430 2089 432 2096 435 2103 440 2107 445 2111 453 2112 459 2112 465 2111 471 2107 478 2098 491 2089 507 2077 525 2073 533 2073 541 2079 557 2080 565 2082 591 2081 597 2078 603 2073 609 2066 615 2053 619 2037 620 2015 615 1993 605 1979 606 1973 605 1961 599 1935 580 1915 569ZM1879 999 1875 1002 1869 1004 1863 1004 1859 1002 1855 999 1853 995 1853 989 1854 985 1858 981 1863 979 1869 979 1874 981 1879 985 1881 989 1881 995ZM1909 1082 1902 1075 1897 1065 1897 1057 1900 1049 1911 1037 1919 1031 1933 1028 1939 1029 1943 1031 1948 1037 1951 1049 1950 1057 1945 1067 1938 1075 1929 1081 1917 1084Z" fill="rgb(220,220,220)"/><path d="M1915 558 1912 553 1912 549 1916 543 1921 539 1929 536 1939 533 1951 532 1959 532 1975 537 1987 545 1996 555 2003 570 2005 570 2035 533 2037 516 2046 475 2049 451 2053 441 2057 437 2063 435 2071 433 2079 433 2087 435 2095 439 2101 443 2105 448 2109 460 2109 465 2107 471 2096 487 2083 508 2061 535 2062 541 2073 567 2076 587 2076 593 2074 599 2069 604 2063 609 2053 613 2043 615 2031 613 2019 610 2011 606 2006 601 2002 595 1999 585 1997 585 1983 594 1977 596 1971 595 1961 589 1941 574 1923 565Z" fill="rgb(236,236,236)"/><path d="M2047 526 2044 521 2043 515 2052 473 2055 451 2057 445 2062 441 2071 438 2081 439 2092 443 2099 448 2103 455 2104 463 2102 469 2090 485 2079 503 2069 516 2063 521 2057 525 2051 527ZM1989 577 1985 583 1981 586 1977 587 1971 586 1965 583 1945 568 1927 558 1923 553 1923 549 1925 546 1929 543 1943 539 1957 538 1968 541 1981 549 1989 558 1992 567ZM2037 608 2026 605 2017 601 2012 595 2011 587 2015 574 2029 553 2039 542 2043 540 2047 540 2051 542 2055 547 2063 561 2068 575 2069 589 2066 597 2059 603 2048 607Z" fill="rgb(251,251,251)"/></g>
<path d="M1808.0 300.0 2112.2 300.0 2112.2 530.0 1808.0 530.0Z" fill="#ff80ff" fill-opacity=".25"/>
<path d="M1808.0 530.0 2112.2 530.0 2112.2 613.0 2056.8 613.0 2056.8 695.9 2029.2 695.9 2029.2 723.5 2001.5 723.5 2001.5 751.2 1808.0 751.2Z" fill="#80ff00" fill-opacity=".25"/>
<path d="M1808.0 751.2 2001.5 751.2 2001.5 1027.7 1808.0 1027.7Z" fill="#f08000" fill-opacity=".25"/>
<path d="M1808.0 1027.7 2001.5 1027.7 2001.5 1138.3 1973.9 1138.3 1973.9 1165.9 1946.2 1165.9 1946.2 1193.6 1863.3 1193.6 1863.3 1165.9 1835.7 1165.9 1835.7 1138.3 1808.0 1138.3Z" fill="#ff0000" fill-opacity=".25"/>
</g>
<path d="M2084.3 439.5 2094.1 449.3 2106.5 459.1 2107.1 465.6 2099.3 475.4 2084.3 475.4Z" fill="#ff0000"/>
<path d="M2314.4 941.6C2313.5 925.3 2314.7 911.7 2314.4 895.9C2314.1 880.1 2313.5 863.2 2312.8 846.9C2312.1 830.6 2311.3 812.6 2310.2 797.9C2309.1 783.2 2308.0 769.6 2306.3 758.8C2304.5 747.9 2302.2 739.2 2299.7 732.6C2297.3 726.1 2295.1 724.6 2291.6 719.6C2288.0 714.6 2282.7 708.4 2278.5 702.6C2274.3 696.9 2269.7 689.8 2266.4 685.0C2263.1 680.2 2259.1 678.1 2258.6 673.9C2258.1 669.6 2263.1 666.8 2263.2 659.5C2263.2 652.2 2263.2 646.5 2258.9 630.1C2254.7 613.8 2243.4 588.8 2237.7 561.6C2232.0 534.4 2226.0 489.8 2224.6 466.9C2223.3 444.1 2228.6 435.4 2229.5 424.5C2230.5 413.6 2230.4 407.5 2230.5 401.6C2230.7 395.7 2229.9 394.7 2230.5 389.2C2231.2 383.8 2232.2 375.1 2234.4 369.0C2236.7 362.9 2239.9 356.7 2244.2 352.6C2248.6 348.6 2253.5 346.7 2260.6 344.5C2267.6 342.3 2276.3 340.9 2286.7 339.6C2297.0 338.2 2309.0 336.8 2322.6 336.3C2336.2 335.9 2355.8 336.2 2368.3 337.0C2380.8 337.8 2389.0 339.2 2397.7 341.2C2406.4 343.3 2413.4 345.8 2420.5 349.4C2427.6 352.9 2432.5 355.9 2440.1 362.4C2447.7 369.0 2458.1 379.9 2466.2 388.6C2474.4 397.3 2483.6 406.5 2489.1 414.7C2494.5 422.8 2495.6 429.9 2498.9 437.5C2502.1 445.1 2505.9 452.8 2508.7 460.4C2511.4 468.0 2513.6 476.2 2515.2 483.2C2516.8 490.3 2517.6 495.7 2518.5 502.8C2519.3 509.9 2519.0 518.1 2520.1 525.7C2521.2 533.3 2523.1 539.3 2525.0 548.5C2526.9 557.8 2529.3 559.4 2531.5 581.2C2533.7 602.9 2537.0 646.0 2538.1 679.1C2539.1 712.3 2538.1 738.4 2538.1 780.0C2538.1 821.6 2538.1 871.1 2538.1 928.5C2538.1 985.9 2539.3 1093.1 2538.1 1124.4C2536.8 1155.7 2540.0 1105.9 2530.6 1116.5C2521.2 1127.2 2500.7 1172.5 2481.7 1188.3C2462.7 1204.0 2438.2 1213.8 2416.5 1211.1C2394.7 1208.4 2367.0 1192.1 2351.3 1172.0C2335.5 1151.8 2327.1 1120.3 2321.9 1090.4C2316.8 1060.5 2320.6 1008.7 2320.3 992.6C2320.0 976.5 2320.9 1002.3 2320.0 993.8C2319.0 985.3 2315.3 957.9 2314.4 941.6Z" fill="#fff" stroke="#1c1c1c" stroke-width="3.2" stroke-linejoin="round"/>
<clipPath id="olRF2"><path d="M2314.4 941.6C2313.5 925.3 2314.7 911.7 2314.4 895.9C2314.1 880.1 2313.5 863.2 2312.8 846.9C2312.1 830.6 2311.3 812.6 2310.2 797.9C2309.1 783.2 2308.0 769.6 2306.3 758.8C2304.5 747.9 2302.2 739.2 2299.7 732.6C2297.3 726.1 2295.1 724.6 2291.6 719.6C2288.0 714.6 2282.7 708.4 2278.5 702.6C2274.3 696.9 2269.7 689.8 2266.4 685.0C2263.1 680.2 2259.1 678.1 2258.6 673.9C2258.1 669.6 2263.1 666.8 2263.2 659.5C2263.2 652.2 2263.2 646.5 2258.9 630.1C2254.7 613.8 2243.4 588.8 2237.7 561.6C2232.0 534.4 2226.0 489.8 2224.6 466.9C2223.3 444.1 2228.6 435.4 2229.5 424.5C2230.5 413.6 2230.4 407.5 2230.5 401.6C2230.7 395.7 2229.9 394.7 2230.5 389.2C2231.2 383.8 2232.2 375.1 2234.4 369.0C2236.7 362.9 2239.9 356.7 2244.2 352.6C2248.6 348.6 2253.5 346.7 2260.6 344.5C2267.6 342.3 2276.3 340.9 2286.7 339.6C2297.0 338.2 2309.0 336.8 2322.6 336.3C2336.2 335.9 2355.8 336.2 2368.3 337.0C2380.8 337.8 2389.0 339.2 2397.7 341.2C2406.4 343.3 2413.4 345.8 2420.5 349.4C2427.6 352.9 2432.5 355.9 2440.1 362.4C2447.7 369.0 2458.1 379.9 2466.2 388.6C2474.4 397.3 2483.6 406.5 2489.1 414.7C2494.5 422.8 2495.6 429.9 2498.9 437.5C2502.1 445.1 2505.9 452.8 2508.7 460.4C2511.4 468.0 2513.6 476.2 2515.2 483.2C2516.8 490.3 2517.6 495.7 2518.5 502.8C2519.3 509.9 2519.0 518.1 2520.1 525.7C2521.2 533.3 2523.1 539.3 2525.0 548.5C2526.9 557.8 2529.3 559.4 2531.5 581.2C2533.7 602.9 2537.0 646.0 2538.1 679.1C2539.1 712.3 2538.1 738.4 2538.1 780.0C2538.1 821.6 2538.1 871.1 2538.1 928.5C2538.1 985.9 2539.3 1093.1 2538.1 1124.4C2536.8 1155.7 2540.0 1105.9 2530.6 1116.5C2521.2 1127.2 2500.7 1172.5 2481.7 1188.3C2462.7 1204.0 2438.2 1213.8 2416.5 1211.1C2394.7 1208.4 2367.0 1192.1 2351.3 1172.0C2335.5 1151.8 2327.1 1120.3 2321.9 1090.4C2316.8 1060.5 2320.6 1008.7 2320.3 992.6C2320.0 976.5 2320.9 1002.3 2320.0 993.8C2319.0 985.3 2315.3 957.9 2314.4 941.6Z"/></clipPath><g clip-path="url(#olRF2)">
<path d="M2459.7 417.9 2472.1 417.9 2472.1 432.6 2459.7 432.6Z" fill="#ffdfff"/>
</g>
<clipPath id="fpRF2"><path d="M2298.1 324.9 2317.7 324.9 2319.3 329.8 2352.0 333.1 2387.9 339.6 2389.5 347.7 2400.9 362.4 2417.3 373.9 2430.3 390.2 2443.4 404.9 2456.4 417.9 2471.1 431.0 2472.8 465.3 2492.3 476.7 2502.1 480.0 2515.2 499.6 2520.1 528.9 2531.5 538.7 2541.3 568.1 2554.4 597.5 2559.3 646.5 2554.4 711.8 2554.4 780.0 2555.1 960.0 2558.3 1054.6 2555.1 1090.4 2550.2 1123.0 2543.7 1136.1 2530.6 1155.7 2514.3 1168.7 2491.5 1188.3 2471.9 1204.6 2452.3 1212.7 2432.8 1217.6 2419.7 1220.9 2400.2 1220.9 2383.9 1211.1 2367.6 1194.8 2351.3 1181.7 2335.0 1168.7 2321.9 1152.4 2313.8 1132.8 2308.9 1113.3 2307.2 1070.9 2302.3 1067.6 2302.3 1057.8 2307.2 1057.8 2307.2 992.6 2312.1 960.0 2309.5 1059.1 2306.3 1055.8 2306.3 993.8 2309.5 987.3 2312.8 928.5 2314.4 889.4 2317.7 882.8 2322.6 830.6 2329.1 797.9 2329.1 758.8 2316.1 739.2 2303.0 731.0 2289.9 719.6 2276.9 705.2 2263.8 688.9 2250.8 672.6 2237.7 653.0 2227.9 633.4 2218.1 607.3 2211.6 581.2 2208.3 555.1 2208.3 522.4 2206.7 496.3 2206.7 424.5 2211.6 411.4 2219.7 395.1 2227.9 382.0 2231.2 369.0 2241.0 352.6 2257.3 342.9 2276.9 333.1Z"/></clipPath>
<g clip-path="url(#fpRF2)"><g filter="url(#heat)"><rect x="2182" y="300" width="403" height="946" fill="#000"/><path d="M2422 1215 2404 1214 2386 1206 2370 1190 2356 1179 2344 1168 2334 1158 2327 1148 2319 1130 2314 1112 2313 1070 2310 1064 2312 1054 2312 1020 2313 1016 2316 1011 2317 1006 2316 964 2317 954 2318 918 2320 908 2320 894 2323 884 2326 868 2326 850 2328 842 2329 830 2336 800 2336 758 2335 754 2323 738 2298 719 2280 702 2269 686 2253 668 2241 650 2233 634 2223 608 2216 582 2212 558 2212 512 2210 502 2211 440 2212 424 2219 410 2231 390 2247 358 2258 350 2296 332 2302 330 2312 331 2318 335 2328 338 2354 341 2380 346 2395 366 2412 378 2423 392 2442 412 2448 419 2462 432 2465 438 2466 462 2468 468 2472 472 2497 486 2508 500 2518 532 2528 542 2532 552 2549 598 2552 612 2555 648 2551 704 2551 864 2552 880 2552 1004 2554 1014 2554 1062 2552 1074 2552 1090 2549 1114 2546 1122 2537 1136 2526 1152 2488 1185 2464 1201 2440 1210Z" fill="rgb(14,14,14)"/><path d="M2422 1211 2404 1210 2392 1205 2386 1201 2372 1187 2357 1176 2340 1158 2329 1144 2323 1128 2319 1110 2318 1072 2317 1062 2317 1022 2320 1012 2321 1006 2320 968 2322 930 2326 896 2330 884 2333 870 2334 852 2336 832 2344 800 2343 756 2340 748 2328 736 2300 715 2284 700 2252 660 2243 646 2231 622 2225 606 2221 590 2216 556 2213 492 2214 450 2216 430 2217 424 2224 410 2241 386 2251 366 2254 362 2276 350 2303 338 2308 338 2316 342 2326 345 2352 348 2376 353 2390 372 2406 384 2416 396 2436 416 2442 424 2457 438 2458 442 2459 462 2462 470 2468 476 2490 489 2496 494 2504 505 2516 533 2527 546 2547 600 2549 614 2552 648 2548 704 2547 862 2549 882 2549 1004 2550 1016 2550 1060 2549 1088 2545 1114 2543 1120 2535 1132 2522 1150 2486 1182 2460 1198 2438 1207Z" fill="rgb(24,24,24)"/><path d="M2430 1206 2420 1207 2406 1206 2398 1204 2390 1199 2373 1184 2360 1174 2346 1160 2333 1144 2327 1130 2322 1110 2322 1072 2321 1060 2321 1024 2324 1006 2324 968 2326 920 2330 896 2334 890 2338 887 2384 877 2434 870 2442 867 2449 862 2464 848 2470 840 2473 826 2474 798 2473 794 2468 790 2450 787 2440 783 2410 762 2396 754 2348 741 2336 736 2303 712 2287 698 2258 664 2245 644 2235 622 2229 608 2222 580 2218 554 2217 500 2217 456 2219 430 2224 418 2231 408 2240 398 2246 393 2252 390 2278 388 2288 390 2298 394 2310 402 2317 408 2334 434 2340 440 2352 450 2362 455 2396 464 2422 464 2450 468 2454 470 2466 480 2488 494 2500 507 2514 534 2525 548 2537 578 2544 602 2546 614 2549 648 2545 704 2544 864 2546 886 2547 980 2546 1004 2547 1016 2547 1062 2546 1088 2543 1112 2537 1124 2520 1147 2488 1176 2460 1194 2440 1203Z" fill="rgb(37,37,37)"/><path d="M2430 1203 2420 1204 2408 1203 2400 1201 2392 1197 2360 1170 2348 1158 2336 1142 2330 1128 2326 1110 2325 1024 2328 1004 2327 966 2330 920 2333 900 2336 896 2342 892 2384 883 2438 876 2451 872 2465 864 2476 854 2482 844 2485 828 2487 798 2483 792 2478 788 2470 784 2454 782 2446 779 2415 758 2401 750 2389 746 2350 736 2338 732 2330 728 2306 710 2289 696 2261 662 2248 642 2235 614 2231 604 2225 580 2221 554 2220 500 2220 456 2223 430 2228 418 2234 410 2242 403 2248 399 2256 396 2270 394 2280 394 2288 397 2300 403 2308 408 2314 414 2335 444 2347 454 2358 461 2368 464 2392 469 2420 469 2446 473 2456 477 2486 499 2496 509 2502 517 2512 536 2522 547 2531 568 2542 602 2544 616 2546 648 2542 706 2541 798 2541 862 2543 882 2544 980 2543 1006 2544 1018 2544 1060 2542 1088 2539 1112 2534 1124 2518 1144 2486 1174 2460 1191 2442 1199Z" fill="rgb(52,52,52)"/><path d="M2430 1200 2420 1201 2408 1199 2398 1196 2392 1193 2362 1168 2352 1158 2338 1139 2331 1124 2328 1108 2329 1028 2332 939 2336 906 2337 902 2340 898 2348 894 2380 889 2442 881 2468 875 2484 868 2493 860 2499 850 2505 812 2506 798 2505 794 2500 789 2470 780 2450 775 2420 756 2401 746 2350 733 2331 724 2308 708 2290 692 2264 662 2252 644 2239 618 2234 604 2228 580 2224 552 2222 498 2223 458 2223 446 2226 434 2232 420 2237 414 2246 407 2252 403 2258 401 2272 399 2280 399 2288 402 2300 408 2310 417 2327 442 2334 450 2347 460 2358 466 2370 469 2390 473 2416 472 2426 473 2446 477 2459 484 2484 503 2496 515 2500 519 2511 538 2520 548 2529 568 2540 602 2542 616 2544 648 2540 704 2539 770 2537 798 2537 860 2541 884 2542 978 2540 1006 2540 1062 2540 1086 2537 1110 2535 1118 2528 1128 2496 1161 2486 1170 2459 1188 2442 1196Z" fill="rgb(67,67,67)"/><path d="M2530 782 2524 785 2516 786 2480 779 2452 770 2428 755 2402 743 2354 730 2340 725 2322 714 2300 696 2286 682 2266 658 2252 637 2240 614 2236 602 2230 580 2227 554 2226 498 2227 454 2230 442 2235 428 2240 421 2246 415 2256 409 2270 405 2280 405 2292 408 2300 413 2306 418 2332 454 2340 461 2350 468 2362 473 2382 476 2394 477 2420 475 2446 481 2454 485 2486 511 2500 524 2509 538 2519 550 2525 562 2535 594 2540 616 2541 648 2536 760 2534 776ZM2400 1191 2387 1184 2363 1164 2342 1137 2335 1126 2332 1118 2331 1104 2331 1028 2338 922 2340 906 2342 903 2345 900 2354 897 2460 883 2488 876 2504 874 2526 872 2532 873 2536 878 2538 886 2540 976 2539 988 2537 1006 2536 1098 2535 1110 2533 1116 2526 1126 2513 1136 2490 1162 2480 1170 2458 1184 2442 1192 2428 1196 2418 1196Z" fill="rgb(82,82,82)"/><path d="M2523 776 2518 778 2512 779 2479 774 2460 766 2434 751 2404 739 2354 726 2340 720 2324 710 2307 696 2288 677 2268 651 2250 624 2242 606 2235 578 2231 546 2231 500 2233 454 2235 444 2241 432 2245 426 2251 420 2262 413 2272 410 2282 410 2294 414 2300 418 2306 424 2326 455 2332 462 2343 470 2356 476 2368 479 2386 481 2412 477 2420 477 2434 480 2446 484 2457 492 2498 527 2508 540 2516 549 2524 565 2530 582 2536 604 2538 618 2537 670 2532 746 2528 768 2526 773ZM2400 1184 2386 1176 2368 1162 2340 1127 2337 1122 2334 1116 2333 1102 2334 1034 2337 986 2339 962 2344 940 2346 910 2348 907 2352 905 2367 902 2456 891 2488 886 2514 884 2526 884 2530 887 2531 892 2536 940 2537 976 2536 988 2533 1004 2532 1102 2532 1110 2530 1116 2524 1123 2507 1134 2490 1153 2481 1162 2463 1176 2454 1181 2437 1188 2426 1190 2416 1189Z" fill="rgb(98,98,98)"/><path d="M2514 761 2508 764 2498 764 2489 762 2480 758 2473 752 2468 746 2460 729 2433 714 2433 712 2431 710 2424 695 2419 690 2410 684 2391 674 2386 673 2379 674 2372 678 2360 687 2352 690 2340 689 2330 685 2320 679 2280 651 2268 639 2255 618 2245 594 2240 574 2236 540 2236 496 2237 458 2239 448 2244 436 2249 428 2254 424 2264 418 2274 415 2284 415 2294 419 2300 423 2307 432 2328 465 2338 472 2353 480 2366 483 2384 485 2418 480 2430 482 2442 486 2451 492 2474 513 2500 533 2514 550 2522 565 2528 582 2533 606 2535 620 2534 639 2532 655 2520 703 2514 720 2515 724 2522 735 2523 742 2523 746 2520 754ZM2410 1179 2394 1172 2376 1159 2354 1136 2342 1125 2337 1116 2336 1100 2337 1028 2340 982 2345 960 2349 952 2356 945 2386 929 2400 923 2412 920 2482 911 2494 911 2502 913 2512 918 2524 928 2528 934 2530 942 2533 980 2530 1004 2529 1102 2528 1114 2522 1121 2507 1128 2501 1132 2480 1154 2454 1174 2444 1178 2428 1181 2420 1181Z" fill="rgb(113,113,113)"/><path d="M2498 699 2494 701 2488 701 2476 698 2470 695 2463 688 2452 669 2445 662 2422 648 2396 638 2386 636 2376 637 2356 644 2340 654 2332 656 2304 646 2282 640 2276 636 2270 631 2263 620 2249 590 2246 578 2241 538 2240 460 2242 450 2247 440 2250 434 2255 428 2264 422 2274 418 2284 419 2292 422 2298 426 2306 436 2320 461 2325 468 2335 476 2352 484 2366 487 2384 488 2410 483 2418 482 2427 484 2438 488 2448 494 2472 518 2498 537 2504 543 2514 557 2522 572 2528 596 2529 618 2527 638 2524 649 2509 678 2501 694ZM2410 1170 2396 1164 2383 1156 2360 1134 2344 1122 2339 1114 2338 1092 2340 1029 2344 985 2348 968 2352 959 2358 952 2387 936 2400 930 2414 927 2476 918 2490 917 2498 918 2508 924 2519 932 2524 938 2526 946 2529 982 2527 1002 2528 1020 2526 1044 2526 1104 2525 1112 2522 1117 2518 1120 2502 1126 2496 1130 2470 1153 2452 1167 2442 1170 2428 1172 2418 1172Z" fill="rgb(128,128,128)"/><path d="M2512 636 2506 642 2496 647 2488 650 2480 651 2472 649 2431 636 2390 627 2376 627 2336 637 2324 639 2284 631 2274 626 2268 619 2255 596 2251 586 2250 576 2246 536 2243 466 2246 450 2250 440 2254 434 2262 427 2272 422 2280 422 2290 425 2296 429 2303 438 2317 464 2322 471 2334 480 2350 487 2364 490 2384 492 2392 490 2410 486 2418 485 2432 489 2444 496 2470 522 2500 547 2508 557 2516 569 2520 582 2522 606 2519 622 2516 630ZM2402 1161 2391 1154 2370 1134 2346 1120 2342 1116 2341 1112 2341 1084 2344 1028 2349 990 2354 972 2358 964 2364 957 2390 942 2404 936 2430 930 2476 922 2488 922 2498 924 2508 930 2516 936 2520 942 2522 950 2524 978 2524 1002 2525 1020 2523 1048 2523 1104 2521 1112 2516 1117 2498 1124 2486 1130 2454 1154 2444 1160 2434 1163 2422 1164 2412 1164Z" fill="rgb(144,144,144)"/><path d="M2504 627 2498 632 2486 638 2480 638 2436 625 2390 617 2378 617 2336 626 2324 628 2298 623 2282 622 2276 619 2272 615 2259 598 2255 588 2253 580 2249 508 2245 466 2249 450 2256 436 2264 429 2272 425 2282 425 2290 428 2296 433 2303 442 2315 466 2320 474 2332 483 2348 491 2364 494 2384 495 2392 494 2410 489 2418 488 2430 492 2441 498 2449 506 2472 532 2496 552 2504 562 2510 571 2514 586 2515 600 2512 612ZM2402 1155 2395 1150 2380 1132 2372 1128 2350 1120 2346 1116 2343 1110 2343 1084 2346 1049 2353 1002 2361 978 2366 969 2373 962 2394 949 2409 942 2434 935 2472 928 2484 927 2494 929 2506 936 2512 940 2516 946 2518 954 2520 984 2520 1002 2523 1020 2520 1050 2519 1102 2518 1110 2516 1113 2512 1115 2496 1120 2472 1130 2434 1153 2426 1155 2416 1157 2408 1156Z" fill="rgb(159,159,159)"/><path d="M2504 605 2496 614 2492 616 2486 617 2426 610 2392 604 2382 605 2354 614 2332 617 2324 617 2304 613 2284 613 2276 610 2262 597 2257 588 2255 580 2256 552 2255 524 2253 502 2248 468 2249 456 2256 441 2262 434 2272 428 2280 428 2288 430 2294 435 2300 443 2312 468 2318 477 2330 486 2346 494 2362 497 2382 499 2390 498 2408 492 2416 491 2424 493 2435 498 2442 504 2451 514 2470 539 2494 560 2502 570 2506 580 2508 590 2508 598ZM2406 1147 2400 1143 2384 1128 2376 1124 2354 1118 2350 1116 2346 1110 2346 1090 2348 1062 2359 1012 2366 990 2371 978 2376 971 2389 962 2404 954 2431 944 2448 940 2476 935 2482 935 2488 936 2503 944 2508 950 2511 960 2513 1002 2519 1020 2519 1028 2513 1062 2512 1104 2510 1108 2454 1132 2430 1144 2416 1148Z" fill="rgb(174,174,174)"/><path d="M2498 600 2490 607 2480 608 2428 602 2388 595 2380 597 2358 604 2328 610 2306 606 2284 606 2278 605 2270 601 2262 592 2258 580 2258 568 2263 548 2262 530 2260 506 2252 482 2250 468 2252 456 2258 443 2264 436 2272 432 2280 431 2288 434 2294 439 2299 446 2310 470 2316 479 2328 489 2344 498 2362 501 2380 503 2390 501 2408 496 2416 495 2424 497 2432 501 2441 508 2451 520 2463 544 2470 550 2488 564 2496 573 2500 580 2502 588 2501 594ZM2354 1114 2350 1108 2349 1100 2350 1078 2353 1060 2367 1014 2379 988 2386 978 2398 969 2408 966 2414 967 2428 972 2434 974 2442 972 2458 967 2466 967 2474 969 2484 975 2488 980 2490 986 2494 1008 2496 1013 2500 1016 2512 1018 2514 1020 2515 1026 2512 1039 2500 1069 2491 1104 2486 1112 2480 1116 2464 1121 2442 1125 2424 1131 2410 1133 2400 1131 2382 1121 2360 1116Z" fill="rgb(190,190,190)"/><path d="M2255 454 2260 444 2268 437 2276 434 2284 435 2290 439 2296 446 2308 472 2314 482 2320 488 2332 497 2348 504 2372 507 2390 506 2412 499 2420 500 2430 505 2438 512 2446 522 2448 526 2448 530 2444 534 2436 535 2342 536 2322 539 2310 540 2294 539 2286 537 2280 534 2277 530 2268 506 2255 482 2252 468 2253 462ZM2491 588 2488 592 2484 594 2466 598 2430 594 2411 590 2392 583 2386 578 2382 570 2383 556 2385 552 2388 549 2396 548 2438 555 2462 561 2476 566 2484 571 2491 580 2492 584ZM2338 596 2332 602 2324 604 2308 601 2290 601 2272 597 2266 593 2261 586 2260 576 2262 566 2268 557 2276 553 2300 551 2318 555 2330 562 2335 568 2338 574 2339 584 2339 590ZM2358 1108 2356 1102 2356 1088 2357 1074 2360 1062 2374 1022 2388 990 2393 982 2400 977 2408 975 2414 976 2426 982 2432 984 2442 983 2458 978 2464 977 2470 978 2476 982 2481 990 2485 1014 2487 1020 2492 1026 2504 1030 2505 1032 2503 1038 2491 1062 2481 1100 2477 1108 2474 1110 2468 1112 2444 1115 2426 1124 2410 1127 2400 1124 2388 1116 2382 1113 2362 1110Z" fill="rgb(205,205,205)"/><path d="M2257 456 2262 446 2268 440 2276 437 2284 438 2289 442 2294 448 2305 474 2312 486 2320 494 2336 507 2342 510 2354 513 2372 516 2390 514 2410 507 2416 507 2421 508 2428 512 2433 518 2433 522 2430 524 2424 524 2344 524 2338 526 2326 531 2318 533 2300 534 2290 532 2286 530 2282 526 2274 504 2258 481 2255 468ZM2332 592 2328 598 2324 599 2310 596 2294 596 2272 593 2267 590 2263 584 2262 578 2264 570 2268 563 2276 559 2298 557 2312 560 2322 564 2329 570 2333 580 2333 586ZM2414 1121 2404 1120 2399 1116 2396 1112 2393 1104 2390 1078 2391 1052 2395 996 2398 988 2402 984 2406 983 2411 984 2416 988 2423 1004 2437 1024 2445 1044 2447 1058 2445 1072 2434 1110 2431 1114 2426 1118Z" fill="rgb(220,220,220)"/><path d="M2323 526 2314 529 2298 529 2290 527 2286 523 2277 500 2262 481 2258 472 2258 464 2260 457 2264 449 2270 443 2276 441 2280 441 2286 444 2290 448 2294 455 2305 482 2310 490 2323 504 2326 510 2328 516 2328 520ZM2328 588 2326 591 2322 593 2310 591 2294 592 2274 590 2270 588 2267 584 2266 580 2266 575 2269 568 2276 564 2294 562 2306 563 2318 567 2324 572 2328 580ZM2414 1113 2408 1111 2404 1106 2398 1086 2397 1074 2397 1052 2400 1026 2406 1002 2408 1001 2424 1017 2431 1026 2436 1040 2440 1058 2440 1066 2436 1080 2426 1104 2422 1110 2418 1112Z" fill="rgb(236,236,236)"/><path d="M2316 522 2308 524 2298 523 2294 522 2290 519 2281 496 2266 478 2263 472 2263 466 2264 459 2268 452 2272 449 2276 447 2280 447 2284 449 2288 454 2301 486 2318 510 2319 518ZM2321 582 2320 584 2318 585 2308 585 2294 586 2274 583 2272 581 2271 578 2272 574 2277 570 2288 568 2300 567 2310 570 2316 573 2320 577ZM2418 1092 2412 1091 2408 1087 2405 1080 2404 1070 2403 1052 2406 1032 2409 1024 2414 1021 2420 1024 2426 1032 2430 1044 2433 1058 2432 1068 2428 1082 2424 1089Z" fill="rgb(251,251,251)"/></g>
<path d="M2223.0 300.0 2527.2 300.0 2527.2 530.0 2223.0 530.0Z" fill="#ff80ff" fill-opacity=".25"/>
<path d="M2223.0 530.0 2527.2 530.0 2527.2 751.2 2333.6 751.2 2333.6 723.5 2305.9 723.5 2305.9 695.9 2278.3 695.9 2278.3 613.0 2223.0 613.0Z" fill="#80ff00" fill-opacity=".25"/>
<path d="M2333.6 751.2 2527.2 751.2 2527.2 1027.7 2333.6 1027.7Z" fill="#f08000" fill-opacity=".25"/>
<path d="M2333.6 1027.7 2527.2 1027.7 2527.2 1138.3 2499.5 1138.3 2499.5 1165.9 2471.8 1165.9 2471.8 1193.6 2388.9 1193.6 2388.9 1165.9 2361.2 1165.9 2361.2 1138.3 2333.6 1138.3Z" fill="#ff0000" fill-opacity=".25"/>
</g>
<circle cx="260" cy="552" r="14" fill="#ececec" stroke="#000" stroke-width="2.2"/><path d="M260 552 V538 A14 14 0 0 1 274 552Z M260 552 V566 A14 14 0 0 1 246 552Z" fill="#f00"/><path d="M246 552 H274 M260 538 V566" stroke="#000" stroke-width="1.3"/>
<circle cx="661.5" cy="574" r="14" fill="#ececec" stroke="#000" stroke-width="2.2"/><path d="M661.5 574 V560 A14 14 0 0 1 675.5 574Z M661.5 574 V588 A14 14 0 0 1 647.5 574Z" fill="#f00"/><path d="M647.5 574 H675.5 M661.5 560 V588" stroke="#000" stroke-width="1.3"/>
<circle cx="430" cy="760.5" r="9" fill="#ececec" stroke="#000" stroke-width="1.2"/><path d="M430 760.5 V751.5 A9 9 0 0 1 439 760.5Z M430 760.5 V769.5 A9 9 0 0 1 421 760.5Z" fill="#3cb814"/><path d="M421 760.5 H439 M430 751.5 V769.5" stroke="#000" stroke-width="0.6"/>
<circle cx="1977" cy="568" r="14" fill="#ececec" stroke="#000" stroke-width="2.2"/><path d="M1977 568 V554 A14 14 0 0 1 1991 568Z M1977 568 V582 A14 14 0 0 1 1963 568Z" fill="#f00"/><path d="M1963 568 H1991 M1977 554 V582" stroke="#000" stroke-width="1.3"/>
<circle cx="2371.5" cy="567" r="14" fill="#ececec" stroke="#000" stroke-width="2.2"/><path d="M2371.5 567 V553 A14 14 0 0 1 2385.5 567Z M2371.5 567 V581 A14 14 0 0 1 2357.5 567Z" fill="#f00"/><path d="M2357.5 567 H2385.5 M2371.5 553 V581" stroke="#000" stroke-width="1.3"/>
<circle cx="2175.5" cy="762" r="9" fill="#ececec" stroke="#000" stroke-width="1.2"/><path d="M2175.5 762 V753 A9 9 0 0 1 2184.5 762Z M2175.5 762 V771 A9 9 0 0 1 2166.5 762Z" fill="#3cb814"/><path d="M2166.5 762 H2184.5 M2175.5 753 V771" stroke="#000" stroke-width="0.6"/></svg>
<div class="a" style="left:900px;top:155px;width:829px;height:1220px;background:linear-gradient(#888,#000 2.5px)"></div>
<div class="a" style="left:900px;top:158px;width:827px;height:404px;background:#fff"></div>
<div class="a" style="left:900px;top:565px;width:827px;height:404px;background:#fff"></div>
<div class="a" style="left:900px;top:972px;width:827px;height:401.5px;background:#fff"></div>
<div class="a" style="left:900px;top:563px;width:827px;height:1px;background:#fff"></div>
<div class="a" style="left:900px;top:969.5px;width:827px;height:1px;background:#fff"></div>
<div class="a" style="left:2608px;top:155px;width:827.5px;height:1220px;background:linear-gradient(#888,#000 2.5px)"></div>
<div class="a" style="left:2608px;top:158px;width:826px;height:404px;background:#fff"></div>
<div class="a" style="left:2608px;top:565px;width:826px;height:404px;background:#fff"></div>
<div class="a" style="left:2608px;top:972px;width:826px;height:401.5px;background:#fff"></div>
<div class="a" style="left:2608px;top:563px;width:827px;height:1px;background:#fff"></div>
<div class="a" style="left:2608px;top:969.5px;width:827px;height:1px;background:#fff"></div>
<div class="t ttl" style="left:928px;top:163px">Left &amp; Right Feet - Avg. Pressure vs Time (% stance)</div>
<div class="t ax" style="left:870px;width:59px;text-align:right;top:186.5px">19.83</div>
<div class="t ax" style="left:870px;width:59px;text-align:right;top:254.7px">15.88</div>
<div class="t ax" style="left:870px;width:59px;text-align:right;top:322.9px">11.94</div>
<div class="t ax" style="left:870px;width:59px;text-align:right;top:391.1px">7.99</div>
<div class="t ax" style="left:870px;width:59px;text-align:right;top:459.3px">4.05</div>
<div class="t ax" style="left:870px;width:59px;text-align:right;top:527.5px">0.1</div>
<div class="t ax" style="left:936px;width:60px;text-align:center;top:547.5px">0%</div>
<div class="t ax" style="left:1004px;width:60px;text-align:center;top:547.5px">10%</div>
<div class="t ax" style="left:1072px;width:60px;text-align:center;top:547.5px">20%</div>
<div class="t ax" style="left:1140px;width:60px;text-align:center;top:547.5px">30%</div>
<div class="t ax" style="left:1208px;width:60px;text-align:center;top:547.5px">40%</div>
<div class="t ax" style="left:1276px;width:60px;text-align:center;top:547.5px">50%</div>
<div class="t ax" style="left:1344px;width:60px;text-align:center;top:547.5px">60%</div>
<div class="t ax" style="left:1412px;width:60px;text-align:center;top:547.5px">70%</div>
<div class="t ax" style="left:1480px;width:60px;text-align:center;top:547.5px">80%</div>
<div class="t ax" style="left:1548px;width:60px;text-align:center;top:547.5px">90%</div>
<div class="t ax" style="left:1616px;width:60px;text-align:center;top:547.5px">100%</div>
<div class="t ttl" style="left:928px;top:570px">Left Foot Zones - Avg. Pressure vs Time (% stance)</div>
<div class="t ax" style="left:870px;width:59px;text-align:right;top:593.5px">19.83</div>
<div class="t ax" style="left:870px;width:59px;text-align:right;top:661.7px">15.88</div>
<div class="t ax" style="left:870px;width:59px;text-align:right;top:729.9px">11.94</div>
<div class="t ax" style="left:870px;width:59px;text-align:right;top:798.1px">7.99</div>
<div class="t ax" style="left:870px;width:59px;text-align:right;top:866.3px">4.05</div>
<div class="t ax" style="left:870px;width:59px;text-align:right;top:934.5px">0.1</div>
<div class="t ax" style="left:936px;width:60px;text-align:center;top:954.5px">0%</div>
<div class="t ax" style="left:1004px;width:60px;text-align:center;top:954.5px">10%</div>
<div class="t ax" style="left:1072px;width:60px;text-align:center;top:954.5px">20%</div>
<div class="t ax" style="left:1140px;width:60px;text-align:center;top:954.5px">30%</div>
<div class="t ax" style="left:1208px;width:60px;text-align:center;top:954.5px">40%</div>
<div class="t ax" style="left:1276px;width:60px;text-align:center;top:954.5px">50%</div>
<div class="t ax" style="left:1344px;width:60px;text-align:center;top:954.5px">60%</div>
<div class="t ax" style="left:1412px;width:60px;text-align:center;top:954.5px">70%</div>
<div class="t ax" style="left:1480px;width:60px;text-align:center;top:954.5px">80%</div>
<div class="t ax" style="left:1548px;width:60px;text-align:center;top:954.5px">90%</div>
<div class="t ax" style="left:1616px;width:60px;text-align:center;top:954.5px">100%</div>
<div class="t ttl" style="left:928px;top:976px">Right Foot Zones - Avg. Pressure vs Time (% stance)</div>
<div class="t ax" style="left:870px;width:59px;text-align:right;top:999.5px">19.83</div>
<div class="t ax" style="left:870px;width:59px;text-align:right;top:1067.2px">15.88</div>
<div class="t ax" style="left:870px;width:59px;text-align:right;top:1135.0px">11.94</div>
<div class="t ax" style="left:870px;width:59px;text-align:right;top:1202.8px">7.99</div>
<div class="t ax" style="left:870px;width:59px;text-align:right;top:1270.5px">4.05</div>
<div class="t ax" style="left:870px;width:59px;text-align:right;top:1338.2px">0.1</div>
<div class="t ax" style="left:936px;width:60px;text-align:center;top:1358.2px">0%</div>
<div class="t ax" style="left:1004px;width:60px;text-align:center;top:1358.2px">10%</div>
<div class="t ax" style="left:1072px;width:60px;text-align:center;top:1358.2px">20%</div>
<div class="t ax" style="left:1140px;width:60px;text-align:center;top:1358.2px">30%</div>
<div class="t ax" style="left:1208px;width:60px;text-align:center;top:1358.2px">40%</div>
<div class="t ax" style="left:1276px;width:60px;text-align:center;top:1358.2px">50%</div>
<div class="t ax" style="left:1344px;width:60px;text-align:center;top:1358.2px">60%</div>
<div class="t ax" style="left:1412px;width:60px;text-align:center;top:1358.2px">70%</div>
<div class="t ax" style="left:1480px;width:60px;text-align:center;top:1358.2px">80%</div>
<div class="t ax" style="left:1548px;width:60px;text-align:center;top:1358.2px">90%</div>
<div class="t ax" style="left:1616px;width:60px;text-align:center;top:1358.2px">100%</div>
<div class="t ttl" style="left:2636px;top:163px">Left &amp; Right Feet - Avg. Pressure vs Time (% stance)</div>
<div class="t ax" style="left:2578px;width:59px;text-align:right;top:186.5px">19.83</div>
<div class="t ax" style="left:2578px;width:59px;text-align:right;top:254.7px">15.88</div>
<div class="t ax" style="left:2578px;width:59px;text-align:right;top:322.9px">11.94</div>
<div class="t ax" style="left:2578px;width:59px;text-align:right;top:391.1px">7.99</div>
<div class="t ax" style="left:2578px;width:59px;text-align:right;top:459.3px">4.05</div>
<div class="t ax" style="left:2578px;width:59px;text-align:right;top:527.5px">0.1</div>
<div class="t ax" style="left:2644px;width:60px;text-align:center;top:547.5px">0%</div>
<div class="t ax" style="left:2712px;width:60px;text-align:center;top:547.5px">10%</div>
<div class="t ax" style="left:2780px;width:60px;text-align:center;top:547.5px">20%</div>
<div class="t ax" style="left:2848px;width:60px;text-align:center;top:547.5px">30%</div>
<div class="t ax" style="left:2916px;width:60px;text-align:center;top:547.5px">40%</div>
<div class="t ax" style="left:2984px;width:60px;text-align:center;top:547.5px">50%</div>
<div class="t ax" style="left:3052px;width:60px;text-align:center;top:547.5px">60%</div>
<div class="t ax" style="left:3120px;width:60px;text-align:center;top:547.5px">70%</div>
<div class="t ax" style="left:3188px;width:60px;text-align:center;top:547.5px">80%</div>
<div class="t ax" style="left:3256px;width:60px;text-align:center;top:547.5px">90%</div>
<div class="t ax" style="left:3324px;width:60px;text-align:center;top:547.5px">100%</div>
<div class="t ttl" style="left:2636px;top:570px">Left Foot Zones - Avg. Pressure vs Time (% stance)</div>
<div class="t ax" style="left:2578px;width:59px;text-align:right;top:593.5px">19.83</div>
<div class="t ax" style="left:2578px;width:59px;text-align:right;top:661.7px">15.88</div>
<div class="t ax" style="left:2578px;width:59px;text-align:right;top:729.9px">11.94</div>
<div class="t ax" style="left:2578px;width:59px;text-align:right;top:798.1px">7.99</div>
<div class="t ax" style="left:2578px;width:59px;text-align:right;top:866.3px">4.05</div>
<div class="t ax" style="left:2578px;width:59px;text-align:right;top:934.5px">0.1</div>
<div class="t ax" style="left:2644px;width:60px;text-align:center;top:954.5px">0%</div>
<div class="t ax" style="left:2712px;width:60px;text-align:center;top:954.5px">10%</div>
<div class="t ax" style="left:2780px;width:60px;text-align:center;top:954.5px">20%</div>
<div class="t ax" style="left:2848px;width:60px;text-align:center;top:954.5px">30%</div>
<div class="t ax" style="left:2916px;width:60px;text-align:center;top:954.5px">40%</div>
<div class="t ax" style="left:2984px;width:60px;text-align:center;top:954.5px">50%</div>
<div class="t ax" style="left:3052px;width:60px;text-align:center;top:954.5px">60%</div>
<div class="t ax" style="left:3120px;width:60px;text-align:center;top:954.5px">70%</div>
<div class="t ax" style="left:3188px;width:60px;text-align:center;top:954.5px">80%</div>
<div class="t ax" style="left:3256px;width:60px;text-align:center;top:954.5px">90%</div>
<div class="t ax" style="left:3324px;width:60px;text-align:center;top:954.5px">100%</div>
<div class="t ttl" style="left:2636px;top:976px">Right Foot Zones - Avg. Pressure vs Time (% stance)</div>
<div class="t ax" style="left:2578px;width:59px;text-align:right;top:999.5px">19.83</div>
<div class="t ax" style="left:2578px;width:59px;text-align:right;top:1067.2px">15.88</div>
<div class="t ax" style="left:2578px;width:59px;text-align:right;top:1135.0px">11.94</div>
<div class="t ax" style="left:2578px;width:59px;text-align:right;top:1202.8px">7.99</div>
<div class="t ax" style="left:2578px;width:59px;text-align:right;top:1270.5px">4.05</div>
<div class="t ax" style="left:2578px;width:59px;text-align:right;top:1338.2px">0.1</div>
<div class="t ax" style="left:2644px;width:60px;text-align:center;top:1358.2px">0%</div>
<div class="t ax" style="left:2712px;width:60px;text-align:center;top:1358.2px">10%</div>
<div class="t ax" style="left:2780px;width:60px;text-align:center;top:1358.2px">20%</div>
<div class="t ax" style="left:2848px;width:60px;text-align:center;top:1358.2px">30%</div>
<div class="t ax" style="left:2916px;width:60px;text-align:center;top:1358.2px">40%</div>
<div class="t ax" style="left:2984px;width:60px;text-align:center;top:1358.2px">50%</div>
<div class="t ax" style="left:3052px;width:60px;text-align:center;top:1358.2px">60%</div>
<div class="t ax" style="left:3120px;width:60px;text-align:center;top:1358.2px">70%</div>
<div class="t ax" style="left:3188px;width:60px;text-align:center;top:1358.2px">80%</div>
<div class="t ax" style="left:3256px;width:60px;text-align:center;top:1358.2px">90%</div>
<div class="t ax" style="left:3324px;width:60px;text-align:center;top:1358.2px">100%</div>
<svg width="3456" height="1890"><rect x="941" y="191" width="5.5" height="345.0" fill="#000"/>
<rect x="941" y="530.0" width="727" height="6" fill="#000"/>
<rect x="931" y="189.5" width="12" height="5.5" fill="#000"/>
<rect x="931" y="257.7" width="12" height="5.5" fill="#000"/>
<rect x="931" y="325.9" width="12" height="5.5" fill="#000"/>
<rect x="931" y="394.1" width="12" height="5.5" fill="#000"/>
<rect x="931" y="462.3" width="12" height="5.5" fill="#000"/>
<rect x="931" y="530.5" width="12" height="5.5" fill="#000"/>
<rect x="963" y="534.0" width="6" height="11.5" fill="#000"/>
<rect x="1031" y="534.0" width="6" height="11.5" fill="#000"/>
<rect x="1099" y="534.0" width="6" height="11.5" fill="#000"/>
<rect x="1167" y="534.0" width="6" height="11.5" fill="#000"/>
<rect x="1235" y="534.0" width="6" height="11.5" fill="#000"/>
<rect x="1303" y="534.0" width="6" height="11.5" fill="#000"/>
<rect x="1371" y="534.0" width="6" height="11.5" fill="#000"/>
<rect x="1439" y="534.0" width="6" height="11.5" fill="#000"/>
<rect x="1507" y="534.0" width="6" height="11.5" fill="#000"/>
<rect x="1575" y="534.0" width="6" height="11.5" fill="#000"/>
<rect x="1643" y="534.0" width="6" height="11.5" fill="#000"/>
<rect x="1528.9" y="158" width="3" height="375.0" fill="#000"/>
<polyline points="957.6,531.1 964.2,496.5 972.5,463.5 979.1,440.4 985.7,427.2 990.6,423.9 1000.5,430.5 1015.4,434.8 1035.2,438.1 1061.6,437.1 1083.0,439.4 1107.8,436.4 1130.9,433.8 1150.7,435.4 1173.8,434.8 1200.2,434.4 1226.6,435.4 1253.0,439.4 1279.4,445.3 1295.9,450.9 1319.0,451.6 1332.2,453.6 1365.2,454.6 1398.2,456.2 1418.0,455.6 1444.3,454.9 1457.5,451.9 1470.7,445.3 1480.6,437.1 1493.8,423.2 1510.3,414.0 1523.5,408.4 1536.7,405.4 1549.9,405.7 1564.8,412.3 1576.3,423.9 1587.9,435.4 1599.4,451.9 1609.3,465.1 1619.2,478.3 1629.1,493.2 1639.0,504.7 1645.6,509.7 1650.6,519.6 1652.9,531.1" fill="none" stroke="#ff8040" stroke-width="2.6" stroke-linejoin="round" stroke-linecap="round"/>
<polyline points="957.6,531.1 965.9,516.3 977.4,503.1 984.0,493.2 990.6,483.9 998.9,480.0 1005.5,480.6 1017.0,485.6 1035.2,485.6 1055.0,482.6 1074.8,477.3 1094.6,474.4 1114.4,470.7 1134.2,466.8 1154.0,463.5 1173.8,460.5 1187.0,458.9 1200.2,457.9 1220.0,458.5 1244.7,458.5 1262.9,460.2 1292.6,460.8 1328.9,462.2 1368.5,462.2 1385.0,462.8 1418.0,462.8 1450.9,462.8 1470.7,460.8 1487.2,458.5 1500.4,450.3 1510.3,447.0 1520.2,445.7 1530.1,446.0 1540.0,445.7 1553.2,450.9 1566.4,455.2 1576.3,461.2 1587.9,468.4 1599.4,474.0 1609.3,478.3 1619.2,484.9 1629.1,493.2 1635.7,498.1 1644.0,499.1 1648.9,508.0 1652.9,531.1" fill="none" stroke="#4080ff" stroke-width="2.6" stroke-linejoin="round" stroke-linecap="round"/>
<rect x="941" y="598" width="5.5" height="345.0" fill="#000"/>
<rect x="941" y="937.0" width="727" height="6" fill="#000"/>
<rect x="931" y="596.5" width="12" height="5.5" fill="#000"/>
<rect x="931" y="664.7" width="12" height="5.5" fill="#000"/>
<rect x="931" y="732.9" width="12" height="5.5" fill="#000"/>
<rect x="931" y="801.1" width="12" height="5.5" fill="#000"/>
<rect x="931" y="869.3" width="12" height="5.5" fill="#000"/>
<rect x="931" y="937.5" width="12" height="5.5" fill="#000"/>
<rect x="963" y="941.0" width="6" height="11.5" fill="#000"/>
<rect x="1031" y="941.0" width="6" height="11.5" fill="#000"/>
<rect x="1099" y="941.0" width="6" height="11.5" fill="#000"/>
<rect x="1167" y="941.0" width="6" height="11.5" fill="#000"/>
<rect x="1235" y="941.0" width="6" height="11.5" fill="#000"/>
<rect x="1303" y="941.0" width="6" height="11.5" fill="#000"/>
<rect x="1371" y="941.0" width="6" height="11.5" fill="#000"/>
<rect x="1439" y="941.0" width="6" height="11.5" fill="#000"/>
<rect x="1507" y="941.0" width="6" height="11.5" fill="#000"/>
<rect x="1575" y="941.0" width="6" height="11.5" fill="#000"/>
<rect x="1643" y="941.0" width="6" height="11.5" fill="#000"/>
<rect x="1528.9" y="565" width="3" height="375.0" fill="#000"/>
<polyline points="957.6,937.8 965.9,885.0 975.8,832.2 984.0,802.5 990.6,786.0 997.2,776.1 1003.8,770.1 1013.7,767.8 1023.6,769.5 1035.2,767.2 1045.1,762.9 1058.3,754.6 1073.1,749.7 1094.6,749.0 1117.7,746.4 1130.9,743.1 1144.1,742.1 1157.3,738.8 1173.8,736.5 1187.0,733.5 1206.8,732.5 1223.3,734.2 1239.8,739.1 1259.6,747.4 1279.4,755.3 1295.9,766.2 1312.4,779.4 1328.9,795.9 1352.0,819.0 1375.1,842.1 1398.2,865.2 1418.0,885.0 1431.1,896.5 1444.3,905.4 1457.5,911.4 1470.7,918.0 1482.3,925.2 1493.8,926.2 1503.7,937.8 1510.3,939.4 1591.2,939.4" fill="none" stroke="#ff0000" stroke-width="2.6" stroke-linejoin="round" stroke-linecap="round"/>
<polyline points="957.6,937.8 964.2,918.0 972.5,904.8 979.1,896.5 985.7,886.6 992.3,878.4 1003.8,872.8 1015.4,870.8 1025.3,868.5 1035.2,867.5 1045.1,863.5 1058.3,857.9 1074.8,860.2 1094.6,858.9 1121.0,857.9 1144.1,855.3 1167.2,851.3 1193.6,848.0 1220.0,849.0 1246.4,847.7 1269.5,846.0 1279.4,847.0 1295.9,850.7 1319.0,853.6 1345.4,856.9 1365.2,860.2 1385.0,865.2 1404.8,873.4 1424.5,881.7 1444.3,889.9 1457.5,898.2 1470.7,904.8 1483.9,910.4 1500.4,913.0 1513.6,915.0 1533.4,915.3 1543.3,919.6 1553.2,922.9 1563.1,921.9 1573.0,926.2 1581.3,932.8 1587.9,938.8 1652.2,938.8" fill="none" stroke="#f08000" stroke-width="2.6" stroke-linejoin="round" stroke-linecap="round"/>
<polyline points="957.6,937.8 975.8,938.8 982.4,931.2 989.0,921.9 1000.5,919.6 1012.1,914.0 1031.9,911.4 1121.0,911.4 1130.9,910.4 1140.8,911.4 1196.9,911.4 1233.2,909.1 1259.6,904.8 1295.9,898.2 1328.9,885.0 1352.0,871.8 1378.4,856.9 1404.8,838.8 1431.1,820.6 1450.9,809.1 1470.7,799.2 1482.3,795.9 1493.8,790.6 1510.3,790.3 1520.2,793.6 1530.1,800.8 1538.4,804.8 1549.9,819.0 1563.1,833.8 1576.3,852.0 1586.2,868.5 1596.1,885.0 1606.0,898.2 1615.9,906.4 1625.8,913.0 1634.1,919.6 1642.3,920.6 1648.9,926.2 1652.9,937.8" fill="none" stroke="#80ff00" stroke-width="2.6" stroke-linejoin="round" stroke-linecap="round"/>
<polyline points="957.6,937.8 1028.6,937.8 1033.5,939.4 1038.5,936.1 1045.1,927.9 1051.7,923.9 1117.7,923.6 1127.6,926.5 1187.0,925.9 1220.0,926.2 1233.2,924.6 1259.6,923.2 1272.8,920.6 1295.9,919.6 1312.4,914.0 1328.9,910.4 1342.1,904.8 1352.0,902.1 1365.2,896.5 1378.4,896.5 1388.3,892.2 1401.5,888.3 1414.7,880.0 1424.5,875.1 1434.4,875.1 1447.6,868.5 1457.5,862.5 1470.7,858.6 1483.9,848.7 1500.4,835.5 1516.9,822.9 1530.1,816.3 1543.3,808.4 1553.2,803.1 1563.1,800.8 1573.0,804.1 1586.2,815.7 1592.8,828.9 1601.1,845.4 1611.0,860.2 1620.9,871.8 1630.8,885.0 1639.0,899.8 1645.6,916.3 1650.6,931.2 1652.9,937.8" fill="none" stroke="#ff80ff" stroke-width="2.6" stroke-linejoin="round" stroke-linecap="round"/>
<rect x="941" y="1004" width="5.5" height="342.8" fill="#000"/>
<rect x="941" y="1340.8" width="727" height="6" fill="#000"/>
<rect x="931" y="1002.5" width="12" height="5.5" fill="#000"/>
<rect x="931" y="1070.2" width="12" height="5.5" fill="#000"/>
<rect x="931" y="1138.0" width="12" height="5.5" fill="#000"/>
<rect x="931" y="1205.8" width="12" height="5.5" fill="#000"/>
<rect x="931" y="1273.5" width="12" height="5.5" fill="#000"/>
<rect x="931" y="1341.2" width="12" height="5.5" fill="#000"/>
<rect x="963" y="1344.8" width="6" height="11.5" fill="#000"/>
<rect x="1031" y="1344.8" width="6" height="11.5" fill="#000"/>
<rect x="1099" y="1344.8" width="6" height="11.5" fill="#000"/>
<rect x="1167" y="1344.8" width="6" height="11.5" fill="#000"/>
<rect x="1235" y="1344.8" width="6" height="11.5" fill="#000"/>
<rect x="1303" y="1344.8" width="6" height="11.5" fill="#000"/>
<rect x="1371" y="1344.8" width="6" height="11.5" fill="#000"/>
<rect x="1439" y="1344.8" width="6" height="11.5" fill="#000"/>
<rect x="1507" y="1344.8" width="6" height="11.5" fill="#000"/>
<rect x="1575" y="1344.8" width="6" height="11.5" fill="#000"/>
<rect x="1643" y="1344.8" width="6" height="11.5" fill="#000"/>
<rect x="1528.9" y="971" width="3" height="372.8" fill="#000"/>
<polyline points="957.6,1342.8 964.2,1326.3 975.8,1314.7 984.0,1299.9 992.3,1286.7 1002.2,1280.7 1015.4,1276.8 1028.6,1270.2 1041.8,1261.9 1058.3,1250.4 1073.1,1244.4 1088.0,1241.1 1104.5,1238.8 1121.0,1233.2 1137.5,1229.6 1154.0,1227.9 1170.5,1227.3 1187.0,1228.3 1206.8,1232.2 1233.2,1238.2 1259.6,1247.1 1286.0,1254.3 1309.1,1261.9 1332.2,1270.2 1352.0,1277.4 1378.4,1287.3 1391.6,1291.6 1411.4,1296.6 1434.4,1303.8 1450.9,1309.8 1470.7,1316.4 1483.9,1323.0 1493.8,1327.9 1503.7,1330.6 1523.5,1331.5 1531.8,1336.2 1540.0,1343.4 1602.7,1343.4" fill="none" stroke="#ff0000" stroke-width="2.6" stroke-linejoin="round" stroke-linecap="round"/>
<polyline points="957.6,1342.8 964.2,1327.9 975.8,1318.0 985.7,1308.1 993.9,1303.2 1003.8,1300.9 1018.7,1303.2 1031.9,1299.9 1046.7,1292.6 1061.6,1288.3 1074.8,1284.4 1088.0,1280.1 1104.5,1275.1 1121.0,1272.5 1134.2,1269.2 1149.0,1268.2 1167.2,1263.6 1187.0,1260.3 1206.8,1258.6 1223.3,1258.6 1239.8,1259.6 1259.6,1262.3 1279.4,1263.6 1299.2,1266.2 1319.0,1268.5 1338.8,1270.8 1355.3,1273.5 1371.8,1275.1 1391.6,1279.4 1411.4,1283.4 1431.1,1286.7 1450.9,1293.3 1464.1,1297.2 1477.3,1303.2 1490.5,1308.8 1503.7,1314.1 1516.9,1316.4 1526.8,1319.0 1536.7,1320.3 1545.0,1323.0 1553.2,1327.9 1561.5,1328.9 1568.1,1327.9 1579.6,1330.2 1586.2,1336.2 1592.8,1343.4 1652.2,1343.4" fill="none" stroke="#f08000" stroke-width="2.6" stroke-linejoin="round" stroke-linecap="round"/>
<polyline points="957.6,1342.8 964.2,1327.9 979.1,1329.6 990.6,1326.9 1005.5,1330.2 1022.0,1327.9 1038.5,1324.6 1055.0,1320.3 1074.8,1314.7 1101.2,1307.1 1127.6,1300.5 1154.0,1293.3 1180.4,1286.7 1206.8,1280.7 1220.0,1278.4 1239.8,1276.8 1266.2,1271.8 1295.9,1266.9 1325.6,1261.9 1352.0,1257.0 1378.4,1252.4 1404.8,1247.1 1431.1,1241.1 1450.9,1236.5 1460.8,1234.5 1477.3,1228.9 1493.8,1226.3 1503.7,1227.3 1513.6,1230.6 1530.1,1234.5 1540.0,1242.1 1549.9,1250.4 1559.8,1261.9 1569.7,1275.1 1579.6,1286.7 1589.5,1301.5 1596.1,1308.1 1606.0,1313.1 1615.9,1317.0 1625.8,1321.3 1634.1,1325.3 1644.0,1326.3 1648.9,1331.2 1652.9,1342.8" fill="none" stroke="#80ff00" stroke-width="2.6" stroke-linejoin="round" stroke-linecap="round"/>
<polyline points="957.6,1342.8 1031.9,1343.4 1041.8,1332.9 1055.0,1328.6 1068.2,1323.6 1094.6,1323.0 1114.4,1319.7 1140.8,1318.7 1160.6,1315.7 1187.0,1314.4 1213.4,1314.4 1233.2,1312.1 1259.6,1311.1 1279.4,1309.1 1299.2,1308.1 1319.0,1306.5 1338.8,1303.8 1358.6,1302.2 1378.4,1298.9 1398.2,1294.9 1411.4,1293.3 1424.5,1292.6 1437.7,1289.3 1450.9,1288.3 1464.1,1283.4 1477.3,1279.4 1487.2,1276.8 1503.7,1270.2 1516.9,1266.9 1533.4,1263.6 1549.9,1260.3 1566.4,1258.6 1582.9,1260.3 1602.7,1265.2 1611.0,1273.5 1620.9,1285.0 1632.4,1293.3 1642.3,1301.5 1648.3,1316.4 1652.2,1339.5 1652.9,1342.8" fill="none" stroke="#ff80ff" stroke-width="2.6" stroke-linejoin="round" stroke-linecap="round"/>
<rect x="2649" y="191" width="5.5" height="345.0" fill="#000"/>
<rect x="2649" y="530.0" width="727" height="6" fill="#000"/>
<rect x="2639" y="189.5" width="12" height="5.5" fill="#000"/>
<rect x="2639" y="257.7" width="12" height="5.5" fill="#000"/>
<rect x="2639" y="325.9" width="12" height="5.5" fill="#000"/>
<rect x="2639" y="394.1" width="12" height="5.5" fill="#000"/>
<rect x="2639" y="462.3" width="12" height="5.5" fill="#000"/>
<rect x="2639" y="530.5" width="12" height="5.5" fill="#000"/>
<rect x="2671" y="534.0" width="6" height="11.5" fill="#000"/>
<rect x="2739" y="534.0" width="6" height="11.5" fill="#000"/>
<rect x="2807" y="534.0" width="6" height="11.5" fill="#000"/>
<rect x="2875" y="534.0" width="6" height="11.5" fill="#000"/>
<rect x="2943" y="534.0" width="6" height="11.5" fill="#000"/>
<rect x="3011" y="534.0" width="6" height="11.5" fill="#000"/>
<rect x="3079" y="534.0" width="6" height="11.5" fill="#000"/>
<rect x="3147" y="534.0" width="6" height="11.5" fill="#000"/>
<rect x="3215" y="534.0" width="6" height="11.5" fill="#000"/>
<rect x="3283" y="534.0" width="6" height="11.5" fill="#000"/>
<rect x="3351" y="534.0" width="6" height="11.5" fill="#000"/>
<rect x="3230.1" y="158" width="3" height="375.0" fill="#000"/>
<polyline points="2666.1,530.6 2674.5,500.5 2682.8,485.5 2691.1,480.5 2697.8,479.5 2706.2,482.2 2717.9,485.5 2729.5,483.9 2742.9,481.5 2762.9,473.8 2786.3,463.8 2796.3,462.2 2809.7,457.1 2826.4,453.8 2839.7,451.5 2851.4,448.8 2859.7,449.8 2869.8,452.1 2879.8,450.5 2913.2,450.5 2929.9,452.1 2943.2,453.8 2963.2,454.8 2989.9,456.5 3023.3,456.1 3036.7,454.8 3063.4,454.5 3096.8,453.8 3130.2,453.1 3156.9,452.1 3166.9,451.5 3176.9,452.1 3193.6,452.1 3203.6,447.1 3213.6,437.1 3223.6,427.1 3230.3,419.8 3238.7,420.4 3247.0,416.1 3257.0,416.4 3267.0,420.4 3277.1,428.8 3283.7,433.8 3293.7,437.8 3303.8,447.1 3313.8,462.2 3322.1,473.8 3330.5,482.2 3337.1,493.9 3347.2,505.6 3353.8,513.9 3358.8,530.6" fill="none" stroke="#ff8040" stroke-width="2.6" stroke-linejoin="round" stroke-linecap="round"/>
<polyline points="2666.1,530.6 2674.5,513.9 2684.5,505.6 2692.8,493.9 2702.8,482.2 2712.8,475.5 2722.9,473.8 2732.9,475.5 2742.9,479.5 2752.9,481.5 2769.6,479.5 2796.3,478.2 2813.0,473.8 2829.7,471.5 2849.7,467.8 2873.1,462.8 2889.8,460.5 2906.5,457.1 2929.9,456.1 2946.5,455.5 2963.2,456.5 2979.9,458.8 2996.6,460.5 3026.7,461.1 3043.4,463.8 3063.4,463.8 3090.1,462.2 3116.8,461.1 3143.5,459.8 3163.5,457.8 3183.6,455.5 3196.9,451.5 3206.9,442.1 3217.0,431.4 3227.0,427.8 3237.0,424.4 3247.0,417.1 3258.7,414.7 3267.0,417.1 3277.1,423.8 3287.1,430.4 3297.1,438.8 3307.1,447.1 3317.1,453.8 3325.5,463.8 3333.8,478.8 3340.5,492.2 3345.5,497.2 3352.2,502.2 3355.5,512.2 3359.5,530.6" fill="none" stroke="#4080ff" stroke-width="2.6" stroke-linejoin="round" stroke-linecap="round"/>
<rect x="2649" y="598" width="5.5" height="345.0" fill="#000"/>
<rect x="2649" y="937.0" width="727" height="6" fill="#000"/>
<rect x="2639" y="596.5" width="12" height="5.5" fill="#000"/>
<rect x="2639" y="664.7" width="12" height="5.5" fill="#000"/>
<rect x="2639" y="732.9" width="12" height="5.5" fill="#000"/>
<rect x="2639" y="801.1" width="12" height="5.5" fill="#000"/>
<rect x="2639" y="869.3" width="12" height="5.5" fill="#000"/>
<rect x="2639" y="937.5" width="12" height="5.5" fill="#000"/>
<rect x="2671" y="941.0" width="6" height="11.5" fill="#000"/>
<rect x="2739" y="941.0" width="6" height="11.5" fill="#000"/>
<rect x="2807" y="941.0" width="6" height="11.5" fill="#000"/>
<rect x="2875" y="941.0" width="6" height="11.5" fill="#000"/>
<rect x="2943" y="941.0" width="6" height="11.5" fill="#000"/>
<rect x="3011" y="941.0" width="6" height="11.5" fill="#000"/>
<rect x="3079" y="941.0" width="6" height="11.5" fill="#000"/>
<rect x="3147" y="941.0" width="6" height="11.5" fill="#000"/>
<rect x="3215" y="941.0" width="6" height="11.5" fill="#000"/>
<rect x="3283" y="941.0" width="6" height="11.5" fill="#000"/>
<rect x="3351" y="941.0" width="6" height="11.5" fill="#000"/>
<rect x="3230.1" y="565" width="3" height="375.0" fill="#000"/>
<polyline points="2666.1,937.3 2674.5,902.2 2682.8,885.5 2689.5,875.5 2699.5,869.5 2712.8,867.2 2722.9,863.8 2732.9,855.5 2746.2,845.5 2759.6,832.1 2772.9,820.4 2786.3,812.1 2799.6,803.7 2813.0,796.0 2826.4,790.4 2839.7,783.7 2853.1,779.3 2869.8,778.0 2889.8,778.0 2906.5,782.0 2923.2,790.4 2939.9,799.7 2956.6,806.1 2973.3,811.1 2989.9,815.4 3010.0,819.4 3030.0,826.1 3050.0,833.8 3070.1,841.4 3090.1,848.8 3110.1,855.5 3123.5,862.1 3136.8,870.5 3150.2,879.5 3160.2,885.5 3166.9,888.9 3176.9,898.9 3190.3,908.9 3203.6,917.2 3213.6,924.6 3223.6,925.6 3247.0,925.6 3252.0,930.6 3257.0,938.3 3293.7,938.3" fill="none" stroke="#ff0000" stroke-width="2.6" stroke-linejoin="round" stroke-linecap="round"/>
<polyline points="2666.1,937.3 2672.8,913.9 2679.5,902.2 2686.1,897.2 2697.8,892.9 2707.8,894.5 2719.5,894.5 2729.5,889.5 2742.9,884.8 2759.6,878.2 2772.9,870.5 2786.3,863.8 2796.3,862.1 2809.7,857.1 2823.0,850.5 2836.4,846.1 2846.4,843.8 2856.4,840.4 2869.8,839.8 2883.1,837.8 2896.5,836.4 2909.8,836.4 2919.8,838.8 2933.2,839.8 2943.2,842.8 2956.6,843.8 2969.9,847.1 2983.3,848.1 2993.3,850.5 3010.0,850.5 3033.3,852.1 3050.0,851.1 3076.7,853.1 3093.4,855.5 3110.1,858.1 3123.5,861.5 3136.8,865.5 3150.2,870.5 3160.2,875.5 3170.2,882.2 3180.2,888.9 3190.3,898.9 3200.3,908.9 3210.3,914.9 3223.6,920.6 3233.7,922.2 3247.0,924.9 3252.0,928.9 3257.0,938.3 3358.8,938.3" fill="none" stroke="#f08000" stroke-width="2.6" stroke-linejoin="round" stroke-linecap="round"/>
<polyline points="2666.1,937.3 2674.5,924.9 2681.1,926.2 2696.2,922.2 2722.9,922.2 2749.6,919.6 2776.3,917.2 2803.0,912.9 2829.7,907.2 2849.7,902.2 2869.8,902.2 2896.5,897.9 2923.2,892.2 2943.2,888.2 2963.2,886.2 2989.9,883.2 3013.3,878.8 3036.7,873.2 3063.4,866.5 3090.1,858.8 3116.8,850.5 3136.8,843.1 3156.9,832.1 3176.9,820.4 3193.6,810.4 3206.9,806.1 3215.3,801.0 3223.6,804.7 3230.3,806.1 3243.7,818.7 3257.0,835.4 3270.4,853.8 3278.7,865.5 3288.7,873.8 3300.4,885.5 3313.8,898.9 3327.1,910.6 3337.1,917.2 3347.2,922.2 3352.2,923.2 3357.2,930.6 3359.5,937.3" fill="none" stroke="#80ff00" stroke-width="2.6" stroke-linejoin="round" stroke-linecap="round"/>
<polyline points="2666.1,938.3 2702.8,938.9 2707.8,935.6 2714.5,926.2 2722.9,926.2 2732.9,922.2 2752.9,923.9 2786.3,922.2 2809.7,921.2 2833.0,921.6 2856.4,919.9 2879.8,918.9 2906.5,916.2 2929.9,911.6 2943.2,909.5 2959.9,906.2 2976.6,905.5 2996.6,903.2 3023.3,901.2 3043.4,898.9 3063.4,896.2 3083.4,892.2 3103.5,887.2 3126.8,880.5 3143.5,872.2 3160.2,866.1 3176.9,857.1 3190.3,853.1 3200.3,846.1 3213.6,838.8 3223.6,837.8 3230.3,832.1 3240.3,823.8 3250.3,817.1 3260.4,812.7 3270.4,809.4 3280.4,822.1 3287.1,826.1 3297.1,830.4 3307.1,845.5 3317.1,863.8 3328.8,877.2 3337.1,892.2 3347.2,905.5 3353.8,917.2 3359.5,937.3" fill="none" stroke="#ff80ff" stroke-width="2.6" stroke-linejoin="round" stroke-linecap="round"/>
<rect x="2649" y="1004" width="5.5" height="342.8" fill="#000"/>
<rect x="2649" y="1340.8" width="727" height="6" fill="#000"/>
<rect x="2639" y="1002.5" width="12" height="5.5" fill="#000"/>
<rect x="2639" y="1070.2" width="12" height="5.5" fill="#000"/>
<rect x="2639" y="1138.0" width="12" height="5.5" fill="#000"/>
<rect x="2639" y="1205.8" width="12" height="5.5" fill="#000"/>
<rect x="2639" y="1273.5" width="12" height="5.5" fill="#000"/>
<rect x="2639" y="1341.2" width="12" height="5.5" fill="#000"/>
<rect x="2671" y="1344.8" width="6" height="11.5" fill="#000"/>
<rect x="2739" y="1344.8" width="6" height="11.5" fill="#000"/>
<rect x="2807" y="1344.8" width="6" height="11.5" fill="#000"/>
<rect x="2875" y="1344.8" width="6" height="11.5" fill="#000"/>
<rect x="2943" y="1344.8" width="6" height="11.5" fill="#000"/>
<rect x="3011" y="1344.8" width="6" height="11.5" fill="#000"/>
<rect x="3079" y="1344.8" width="6" height="11.5" fill="#000"/>
<rect x="3147" y="1344.8" width="6" height="11.5" fill="#000"/>
<rect x="3215" y="1344.8" width="6" height="11.5" fill="#000"/>
<rect x="3283" y="1344.8" width="6" height="11.5" fill="#000"/>
<rect x="3351" y="1344.8" width="6" height="11.5" fill="#000"/>
<rect x="3230.1" y="971" width="3" height="372.8" fill="#000"/>
<polyline points="2666.1,1342.3 2672.8,1325.6 2682.8,1315.6 2692.8,1297.2 2702.8,1285.5 2711.2,1279.5 2722.9,1275.5 2732.9,1274.8 2749.6,1269.5 2762.9,1262.1 2776.3,1254.5 2796.3,1243.8 2809.7,1238.8 2829.7,1231.1 2843.0,1225.4 2863.1,1213.7 2876.4,1206.4 2889.8,1200.4 2906.5,1193.7 2919.8,1192.0 2933.2,1191.0 2953.2,1195.4 2969.9,1202.0 2986.6,1208.7 3003.3,1216.4 3013.3,1222.1 3036.7,1235.4 3056.7,1244.4 3080.1,1256.5 3093.4,1260.5 3110.1,1268.8 3123.5,1277.2 3136.8,1283.8 3153.5,1293.9 3166.9,1307.2 3180.2,1312.2 3193.6,1320.6 3203.6,1326.6 3213.6,1329.9 3223.6,1331.9 3235.3,1331.9 3245.3,1343.3 3293.7,1343.3" fill="none" stroke="#ff0000" stroke-width="2.6" stroke-linejoin="round" stroke-linecap="round"/>
<polyline points="2666.1,1342.3 2672.8,1325.6 2684.5,1318.9 2696.2,1308.9 2709.5,1297.2 2722.9,1294.5 2732.9,1293.2 2742.9,1294.5 2756.2,1290.5 2769.6,1287.2 2783.0,1282.2 2796.3,1280.5 2809.7,1277.2 2823.0,1273.2 2829.7,1272.2 2849.7,1265.5 2866.4,1260.5 2879.8,1256.1 2889.8,1255.5 2899.8,1252.8 2916.5,1250.5 2933.2,1248.1 2963.2,1248.1 2973.3,1249.4 2989.9,1252.8 3006.6,1253.8 3033.3,1255.5 3046.7,1259.5 3063.4,1260.5 3086.8,1262.1 3110.1,1265.5 3130.2,1270.5 3146.9,1275.5 3163.5,1283.8 3180.2,1295.5 3193.6,1307.2 3206.9,1315.6 3220.3,1315.6 3233.7,1319.9 3247.0,1323.2 3257.0,1323.9 3273.7,1329.6 3283.7,1343.3 3358.8,1343.3" fill="none" stroke="#f08000" stroke-width="2.6" stroke-linejoin="round" stroke-linecap="round"/>
<polyline points="2666.1,1342.3 2674.5,1329.9 2692.8,1331.2 2706.2,1329.9 2719.5,1327.9 2732.9,1329.9 2752.9,1327.2 2769.6,1323.9 2789.6,1322.2 2809.7,1319.6 2836.4,1317.9 2863.1,1316.6 2889.8,1313.2 2916.5,1309.9 2943.2,1307.9 2969.9,1305.5 2996.6,1302.2 3013.3,1299.9 3036.7,1294.9 3063.4,1288.8 3083.4,1282.2 3103.5,1273.8 3120.1,1266.5 3140.2,1255.5 3160.2,1243.8 3173.6,1233.8 3186.9,1226.1 3196.9,1222.1 3206.9,1211.1 3213.6,1209.4 3227.0,1210.4 3237.0,1214.4 3247.0,1217.1 3257.0,1225.4 3263.7,1233.8 3273.7,1253.8 3283.7,1270.5 3293.7,1285.5 3307.1,1300.5 3317.1,1307.2 3327.1,1309.9 3335.5,1316.6 3343.8,1323.9 3352.2,1325.6 3357.2,1333.9 3359.5,1342.3" fill="none" stroke="#80ff00" stroke-width="2.6" stroke-linejoin="round" stroke-linecap="round"/>
<polyline points="2666.1,1343.3 2729.5,1343.9 2736.2,1335.6 2742.9,1329.6 2759.6,1328.9 2772.9,1330.6 2796.3,1327.2 2813.0,1324.9 2843.0,1323.9 2863.1,1322.2 2879.8,1323.2 2903.1,1321.2 2929.9,1320.6 2963.2,1320.6 2989.9,1318.9 3013.3,1315.6 3030.0,1311.5 3040.0,1313.2 3063.4,1307.9 3086.8,1302.2 3103.5,1295.5 3126.8,1287.2 3143.5,1278.8 3160.2,1273.8 3166.9,1268.8 3180.2,1265.5 3196.9,1257.1 3206.9,1250.5 3217.0,1241.4 3227.0,1235.4 3237.0,1225.4 3247.0,1217.1 3260.4,1209.4 3273.7,1206.4 3283.7,1208.7 3293.7,1215.4 3303.8,1227.1 3313.8,1233.8 3323.8,1253.8 3333.8,1277.2 3343.8,1297.2 3352.2,1310.5 3357.2,1327.2 3359.5,1342.3" fill="none" stroke="#ff80ff" stroke-width="2.6" stroke-linejoin="round" stroke-linecap="round"/></svg>
<div class="lg" style="left:1476px;top:158px;width:251px;height:112px">
<span style="left:107px;top:14px"><u>Pressure</u></span><span style="left:171px;top:14px"><u>Elapsed</u></span>
<div class="sw" style="left:15px;top:37px;background:#ff8040"></div>
<span style="left:63px;top:36px">Left</span><span style="left:107px;top:35px">10.69</span><span style="left:171px;top:35px">0:00:00.639</span>
<div class="sw" style="left:15px;top:70px;background:#4080ff"></div>
<span style="left:63px;top:69px">Right</span><span style="left:107px;top:68px">7.34</span><span style="left:171px;top:68px">0:00:00.574</span>
</div>
<div class="lg" style="left:1506px;top:565px;width:221px;height:179px">
<span style="left:157.5px;top:15px"><u>Pressure</u></span>
<div class="sw" style="left:14px;top:37px;background:#ff0000"></div>
<span style="left:62px;top:37px">Left Heel</span><span style="left:157.5px;top:36px">0.0</span>
<div class="sw" style="left:14px;top:70px;background:#f08000"></div>
<span style="left:62px;top:70px">Left Midfoot</span><span style="left:157.5px;top:69px">2.04</span>
<div class="sw" style="left:14px;top:103px;background:#80ff00"></div>
<span style="left:62px;top:103px">Left Metatarsal</span><span style="left:157.5px;top:102px">11.63</span>
<div class="sw" style="left:14px;top:136px;background:#ff80ff"></div>
<span style="left:62px;top:136px">Left Toe</span><span style="left:157.5px;top:135px">10.51</span>
</div>
<div class="lg" style="left:1497px;top:971px;width:230px;height:179px">
<span style="left:166.5px;top:15px"><u>Pressure</u></span>
<div class="sw" style="left:14px;top:37px;background:#ff0000"></div>
<span style="left:62px;top:37px">Right Heel</span><span style="left:166.5px;top:36px">0.84</span>
<div class="sw" style="left:14px;top:70px;background:#f08000"></div>
<span style="left:62px;top:70px">Right Midfoot</span><span style="left:166.5px;top:69px">2.08</span>
<div class="sw" style="left:14px;top:103px;background:#80ff00"></div>
<span style="left:62px;top:103px">Right Metatarsal</span><span style="left:166.5px;top:102px">9.18</span>
<div class="sw" style="left:14px;top:136px;background:#ff80ff"></div>
<span style="left:62px;top:136px">Right Toe</span><span style="left:166.5px;top:135px">6.82</span>
</div>
<div class="lg" style="left:3184px;top:158px;width:251px;height:112px">
<span style="left:107px;top:14px"><u>Pressure</u></span><span style="left:171px;top:14px"><u>Elapsed</u></span>
<div class="sw" style="left:15px;top:37px;background:#ff8040"></div>
<span style="left:63px;top:36px">Left</span><span style="left:107px;top:35px">9.44</span><span style="left:171px;top:35px">0:00:00.915</span>
<div class="sw" style="left:15px;top:70px;background:#4080ff"></div>
<span style="left:63px;top:69px">Right</span><span style="left:107px;top:68px">8.96</span><span style="left:171px;top:68px">0:00:00.763</span>
</div>
<div class="lg" style="left:3214px;top:565px;width:221px;height:179px">
<span style="left:157.5px;top:15px"><u>Pressure</u></span>
<div class="sw" style="left:14px;top:37px;background:#ff0000"></div>
<span style="left:62px;top:37px">Left Heel</span><span style="left:157.5px;top:36px">1.18</span>
<div class="sw" style="left:14px;top:70px;background:#f08000"></div>
<span style="left:62px;top:70px">Left Midfoot</span><span style="left:157.5px;top:69px">1.52</span>
<div class="sw" style="left:14px;top:103px;background:#80ff00"></div>
<span style="left:62px;top:103px">Left Metatarsal</span><span style="left:157.5px;top:102px">11.18</span>
<div class="sw" style="left:14px;top:136px;background:#ff80ff"></div>
<span style="left:62px;top:136px">Left Toe</span><span style="left:157.5px;top:135px">9.03</span>
</div>
<div class="lg" style="left:3205px;top:971px;width:230px;height:179px">
<span style="left:166.5px;top:15px"><u>Pressure</u></span>
<div class="sw" style="left:14px;top:37px;background:#ff0000"></div>
<span style="left:62px;top:37px">Right Heel</span><span style="left:166.5px;top:36px">1.0</span>
<div class="sw" style="left:14px;top:70px;background:#f08000"></div>
<span style="left:62px;top:70px">Right Midfoot</span><span style="left:166.5px;top:69px">2.18</span>
<div class="sw" style="left:14px;top:103px;background:#80ff00"></div>
<span style="left:62px;top:103px">Right Metatarsal</span><span style="left:166.5px;top:102px">11.18</span>
<div class="sw" style="left:14px;top:136px;background:#ff80ff"></div>
<span style="left:62px;top:136px">Right Toe</span><span style="left:166.5px;top:135px">9.52</span>
</div>
<div class="a" style="left:21px;top:1375px;width:1707px;height:78px;background:#f0f0f0;border:1px solid #9a9a9a;border-top:none"></div>
<div class="a" style="left:21px;top:1454px;width:1707px;height:80px;background:#f0f0f0;border:1px solid #6a6a6a;overflow:hidden" id="ts21"></div>
<div class="a" style="left:20px;top:1534px;width:1709px;height:25px;background:#f4f4f4;border-bottom:1px solid #dcdcdc"></div>
<div class="a" style="left:23px;top:1376px;width:2px;height:75px;background:#c080c0"></div>
<div class="a" style="left:1729px;top:1375px;width:1706px;height:78px;background:#f0f0f0;border:1px solid #9a9a9a;border-top:none"></div>
<div class="a" style="left:1729px;top:1454px;width:1706px;height:80px;background:#f0f0f0;border:1px solid #6a6a6a;overflow:hidden" id="ts1729"></div>
<div class="a" style="left:1728px;top:1534px;width:1708px;height:25px;background:#f4f4f4;border-bottom:1px solid #dcdcdc"></div>
<div class="a" style="left:1731px;top:1376px;width:2px;height:75px;background:#c080c0"></div>
<div class="a" style="left:1727px;top:1375px;width:3px;height:160px;background:#000"></div>
<div class="t big" style="left:587px;top:1414px">Gait Session 2/2&nbsp; Stances 6-25&nbsp; Active 6</div>
<div class="t big" style="left:2277px;top:1414px">Gait Session 2/2&nbsp; Stances 13-22&nbsp; Active 13</div>
<svg width="3456" height="1890" font-family="Liberation Sans, sans-serif"><defs>
<radialGradient id="gR"><stop offset="0" stop-color="#ff0000"/><stop offset=".45" stop-color="#ff6000"/><stop offset=".75" stop-color="#ffe000" stop-opacity=".9"/><stop offset="1" stop-color="#40ff80" stop-opacity="0"/></radialGradient>
<radialGradient id="gY"><stop offset="0" stop-color="#ff9000"/><stop offset=".5" stop-color="#ffe000"/><stop offset=".8" stop-color="#60ff60" stop-opacity=".8"/><stop offset="1" stop-color="#00e0ff" stop-opacity="0"/></radialGradient>
<radialGradient id="gC"><stop offset="0" stop-color="#00e0ff"/><stop offset=".6" stop-color="#00a0ff" stop-opacity=".9"/><stop offset="1" stop-color="#0040ff" stop-opacity="0"/></radialGradient>
<clipPath id="cA"><path d="M3 0 H52 Q62 2 67 12 V19 Q66 22 62 22 H44 Q36 22 33 15 L29 9 H24 L20 16 H6 Q0 14 0 8 V3 Q0 0 3 0Z"/></clipPath>
<clipPath id="cB"><path d="M3 22 H52 Q62 20 67 10 V3 Q66 0 62 0 H44 Q36 0 33 7 L29 13 H24 L20 6 H6 Q0 8 0 14 V19 Q0 22 3 22Z"/></clipPath>
<symbol id="thA" overflow="visible"><path d="M0 14 V22" stroke="#000" stroke-width="1.5"/><path d="M20 16 L24 9 H29 L33 15" fill="#fff"/><path d="M4 16 H40" stroke="#000" stroke-width="1.3"/>
<g clip-path="url(#cA)"><rect width="68" height="23" fill="#0010c8"/><ellipse cx="11" cy="7" rx="13" ry="9" fill="url(#gC)"/><ellipse cx="51" cy="11" rx="20" ry="13" fill="url(#gC)"/><ellipse cx="30" cy="3" rx="9" ry="4" fill="url(#gC)"/>
<ellipse cx="10" cy="7" rx="10" ry="7" fill="url(#gY)"/><ellipse cx="49" cy="9" rx="12" ry="10" fill="url(#gY)"/><ellipse cx="57" cy="18" rx="8" ry="5" fill="url(#gR)"/><ellipse cx="49" cy="8" rx="5" ry="6" fill="url(#gR)"/><ellipse cx="8" cy="8" rx="4" ry="3" fill="url(#gR)"/></g></symbol>
<symbol id="thA2" overflow="visible"><path d="M0 14 V22" stroke="#000" stroke-width="1.5"/><path d="M20 16 L24 9 H29 L33 15" fill="#fff"/><path d="M4 16 H40" stroke="#000" stroke-width="1.3"/>
<g clip-path="url(#cA)"><rect width="68" height="23" fill="#0010c8"/><ellipse cx="11" cy="7" rx="13" ry="9" fill="url(#gC)"/><ellipse cx="51" cy="11" rx="20" ry="13" fill="url(#gC)"/><ellipse cx="30" cy="3" rx="9" ry="4" fill="url(#gC)"/>
<ellipse cx="10" cy="7" rx="11" ry="8" fill="url(#gY)"/><ellipse cx="49" cy="9" rx="12" ry="10" fill="url(#gY)"/><ellipse cx="57" cy="18" rx="9" ry="6" fill="url(#gR)"/><ellipse cx="48" cy="8" rx="8" ry="8" fill="url(#gR)"/><ellipse cx="9" cy="7" rx="9" ry="6.5" fill="url(#gR)"/></g></symbol>
<symbol id="thB" overflow="visible"><path d="M0 0 V8" stroke="#000" stroke-width="1.5"/><path d="M20 6 L24 13 H29 L33 7" fill="#fff"/><path d="M4 7 H34" stroke="#000" stroke-width="1.3"/>
<g clip-path="url(#cB)"><rect width="68" height="23" fill="#0010c8"/><ellipse cx="11" cy="15" rx="13" ry="9" fill="url(#gC)"/><ellipse cx="51" cy="11" rx="20" ry="13" fill="url(#gC)"/><ellipse cx="30" cy="19" rx="9" ry="4" fill="url(#gC)"/>
<ellipse cx="10" cy="15" rx="9" ry="6" fill="url(#gY)"/><ellipse cx="48" cy="12" rx="11" ry="10" fill="url(#gY)"/><ellipse cx="57" cy="4" rx="6" ry="4" fill="url(#gR)"/><ellipse cx="50" cy="8" rx="4" ry="4" fill="url(#gR)"/></g></symbol>
</defs>
<polyline points="25.0,1417.0 112.0,1388.0 202.0,1423.0 291.0,1392.5 383.0,1392.0 477.0,1376.4 559.0,1382.0 639.0,1377.0 734.0,1378.0 832.0,1393.5 919.0,1385.0 1008.0,1393.0 1181.0,1377.0 1277.0,1377.5 1368.0,1405.4 1454.0,1399.0 1545.0,1380.0 1636.0,1386.0 1726.0,1410.7" fill="none" stroke="#ff8040" stroke-width="1.2"/>
<polyline points="25.0,1450.0 112.0,1438.0 202.0,1450.0 293.0,1429.0 381.0,1437.6 468.0,1436.0 559.0,1431.6 646.0,1431.6 734.0,1431.6 832.0,1435.0 919.0,1418.7 1010.0,1425.7 1099.0,1414.0 1188.0,1424.6 1277.0,1430.0 1368.0,1431.6 1454.0,1426.4 1545.0,1431.6 1636.0,1420.0 1726.0,1425.3" fill="none" stroke="#4080ff" stroke-width="1.2"/>
<polyline points="1734.0,1441.0 1921.0,1391.4 2110.0,1423.6 2300.0,1376.4 2489.0,1394.0 2675.0,1445.0 2863.0,1423.0 3052.0,1383.4 3241.0,1397.4 3433.0,1376.8" fill="none" stroke="#ff8040" stroke-width="1.2"/>
<polyline points="1734.0,1450.0 1921.0,1398.4 2099.0,1400.0 2300.0,1400.2 2471.0,1425.7 2675.0,1425.7 2863.0,1380.3 3052.0,1389.7 3241.0,1396.0 3433.0,1411.7" fill="none" stroke="#4080ff" stroke-width="1.2"/>
<clipPath id="clip22"><rect x="22" y="1455" width="1705" height="78"/></clipPath>
<g clip-path="url(#clip22)"><use href="#thA" x="-40" y="1457"/><use href="#thA" x="112" y="1457"/><use href="#thA" x="264" y="1457"/><use href="#thA" x="416" y="1457"/><use href="#thA" x="568" y="1457"/><use href="#thB" x="44" y="1508"/><use href="#thB" x="196" y="1508"/><use href="#thB" x="348" y="1508"/><use href="#thB" x="500" y="1508"/><text x="-10" y="1486.5" font-size="32" fill="#111">0.18m</text><text x="142" y="1486.5" font-size="32" fill="#111">0.52m</text><text x="294" y="1486.5" font-size="32" fill="#111">0.91m</text><text x="446" y="1486.5" font-size="32" fill="#111">1.29m</text><text x="598" y="1486.5" font-size="32" fill="#111">1.64m</text><text x="74" y="1524" font-size="32" fill="#111">0.34m</text><text x="226" y="1524" font-size="32" fill="#111">0.73m</text><text x="378" y="1524" font-size="32" fill="#111">1.11m</text><text x="530" y="1524" font-size="32" fill="#111">1.46m</text></g>
<clipPath id="clip22"><rect x="22" y="1455" width="1705" height="78"/></clipPath>
<g clip-path="url(#clip22)"><rect x="806" y="1457.5" width="150" height="21" fill="#bcd3ec" stroke="#3d5f8f" stroke-width="1.6"/><rect x="931" y="1457" width="2" height="22" fill="#f07820"/><rect x="873" y="1510" width="150" height="21" fill="#bcd3ec" stroke="#3d5f8f" stroke-width="1.6"/><rect x="998" y="1509" width="2" height="22" fill="#f07820"/><use href="#thA2" x="805" y="1457"/><use href="#thA2" x="957" y="1457"/><use href="#thA2" x="1109" y="1457"/><use href="#thA2" x="1261" y="1457"/><use href="#thA2" x="1413" y="1457"/><use href="#thA2" x="1565" y="1457"/><use href="#thA2" x="1718" y="1457"/><use href="#thB" x="872" y="1508"/><use href="#thB" x="1024" y="1508"/><use href="#thB" x="1176" y="1508"/><use href="#thB" x="1328" y="1508"/><use href="#thB" x="1480" y="1508"/><use href="#thB" x="1633" y="1508"/><text x="835" y="1486.5" font-size="32" fill="#111">0.00m</text><text x="987" y="1486.5" font-size="32" fill="#111">0.41m</text><text x="1139" y="1486.5" font-size="32" fill="#111">0.74m</text><text x="1291" y="1486.5" font-size="32" fill="#111">1.13m</text><text x="1443" y="1486.5" font-size="32" fill="#111">1.48m</text><text x="1595" y="1486.5" font-size="32" fill="#111">1.85m</text><text x="1748" y="1486.5" font-size="32" fill="#111"></text><text x="902" y="1524" font-size="32" fill="#111">0.19m</text><text x="1054" y="1524" font-size="32" fill="#111">0.60m</text><text x="1206" y="1524" font-size="32" fill="#111">0.93m</text><text x="1358" y="1524" font-size="32" fill="#111">1.32m</text><text x="1510" y="1524" font-size="32" fill="#111">1.67m</text><text x="1663" y="1524" font-size="32" fill="#111">2.04m</text></g>
<clipPath id="clip1731"><rect x="1731" y="1455" width="1703" height="78"/></clipPath>
<g clip-path="url(#clip1731)"><use href="#thA2" x="1751" y="1457"/><use href="#thA2" x="1903" y="1457"/><use href="#thA2" x="2055" y="1457"/><use href="#thA2" x="2207" y="1457"/><use href="#thB" x="1668" y="1508"/><use href="#thB" x="1820" y="1508"/><use href="#thB" x="1972" y="1508"/><use href="#thB" x="2124" y="1508"/><use href="#thB" x="2276" y="1508"/><text x="1781" y="1486.5" font-size="32" fill="#111">5.69m</text><text x="1933" y="1486.5" font-size="32" fill="#111">6.08m</text><text x="2085" y="1486.5" font-size="32" fill="#111">6.46m</text><text x="2237" y="1486.5" font-size="32" fill="#111">6.79m</text><text x="1698" y="1524" font-size="32" fill="#111">5.58m</text><text x="1850" y="1524" font-size="32" fill="#111">5.94m</text><text x="2002" y="1524" font-size="32" fill="#111">6.33m</text><text x="2154" y="1524" font-size="32" fill="#111">6.71m</text><text x="2306" y="1524" font-size="32" fill="#111">7.04m</text></g>
<clipPath id="clip1731"><rect x="1731" y="1455" width="1703" height="78"/></clipPath>
<g clip-path="url(#clip1731)"><rect x="2513" y="1457.5" width="151" height="21" fill="#bcd3ec" stroke="#3d5f8f" stroke-width="1.6"/><rect x="2637" y="1457" width="2" height="22" fill="#f07820"/><rect x="2581" y="1510" width="150" height="21" fill="#bcd3ec" stroke="#3d5f8f" stroke-width="1.6"/><rect x="2704" y="1509" width="2" height="22" fill="#f07820"/><use href="#thA2" x="2512" y="1457"/><use href="#thA2" x="2665" y="1457"/><use href="#thA2" x="2817" y="1457"/><use href="#thA2" x="2969" y="1457"/><use href="#thA2" x="3121" y="1457"/><use href="#thA2" x="3273" y="1457"/><use href="#thA2" x="3425" y="1457"/><use href="#thB" x="2580" y="1508"/><use href="#thB" x="2732" y="1508"/><use href="#thB" x="2884" y="1508"/><use href="#thB" x="3036" y="1508"/><use href="#thB" x="3188" y="1508"/><use href="#thB" x="3341" y="1508"/><text x="2542" y="1486.5" font-size="32" fill="#111">0.00m</text><text x="2695" y="1486.5" font-size="32" fill="#111">0.29m</text><text x="2847" y="1486.5" font-size="32" fill="#111">0.66m</text><text x="2999" y="1486.5" font-size="32" fill="#111">1.01m</text><text x="3151" y="1486.5" font-size="32" fill="#111">1.40m</text><text x="3303" y="1486.5" font-size="32" fill="#111">1.71m</text><text x="3455" y="1486.5" font-size="32" fill="#111"></text><text x="2610" y="1524" font-size="32" fill="#111">0.18m</text><text x="2762" y="1524" font-size="32" fill="#111">0.47m</text><text x="2914" y="1524" font-size="32" fill="#111">0.85m</text><text x="3066" y="1524" font-size="32" fill="#111">1.20m</text><text x="3218" y="1524" font-size="32" fill="#111">1.58m</text><text x="3371" y="1524" font-size="32" fill="#111">1.89m</text></g>
<rect x="641" y="1456" width="1.6" height="77" fill="#000"/>
<rect x="645" y="1456" width="1.6" height="77" fill="#000"/>
<rect x="798" y="1456" width="1.6" height="77" fill="#000"/>
<rect x="802" y="1456" width="1.6" height="77" fill="#000"/>
<rect x="2348" y="1456" width="1.6" height="77" fill="#000"/>
<rect x="2352" y="1456" width="1.6" height="77" fill="#000"/>
<rect x="2505" y="1456" width="1.6" height="77" fill="#000"/>
<rect x="2509" y="1456" width="1.6" height="77" fill="#000"/>
<rect x="30" y="1545.5" width="1649" height="3.6" fill="#a4a4a4"/><rect x="28.5" y="1539" width="3" height="16" fill="#a4a4a4"/><rect x="1677.5" y="1539" width="3" height="16" fill="#a4a4a4"/>
<rect x="441" y="1538.5" width="10.5" height="16.5" fill="#c9c9c9" stroke="#a0a0a0" stroke-width="1"/>
<rect x="1688" y="1538.5" width="16" height="16.5" fill="#f6f6f6" stroke="#9a9a9a" stroke-width="1"/>
<path d="M1698 1542.5 L1693.5 1547 L1698 1551.5" fill="none" stroke="#222" stroke-width="1.6"/>
<rect x="1705" y="1538.5" width="16" height="16.5" fill="#f6f6f6" stroke="#9a9a9a" stroke-width="1"/>
<path d="M1711 1542.5 L1715.5 1547 L1711 1551.5" fill="none" stroke="#222" stroke-width="1.6"/>
<rect x="1738" y="1545.5" width="1649" height="3.6" fill="#a4a4a4"/><rect x="1736.5" y="1539" width="3" height="16" fill="#a4a4a4"/><rect x="3385.5" y="1539" width="3" height="16" fill="#a4a4a4"/>
<rect x="2761" y="1538.5" width="10.5" height="16.5" fill="#c9c9c9" stroke="#a0a0a0" stroke-width="1"/>
<rect x="3396" y="1538.5" width="16" height="16.5" fill="#f6f6f6" stroke="#9a9a9a" stroke-width="1"/>
<path d="M3406 1542.5 L3401.5 1547 L3406 1551.5" fill="none" stroke="#222" stroke-width="1.6"/>
<rect x="3413" y="1538.5" width="16" height="16.5" fill="#f6f6f6" stroke="#9a9a9a" stroke-width="1"/>
<path d="M3419 1542.5 L3423.5 1547 L3419 1551.5" fill="none" stroke="#222" stroke-width="1.6"/></svg>
<div class="ph" style="left:19px;top:1572px;width:1131px;background:#c2cfde"><span>Foot Frame Statistics</span></div>
<div class="pb" style="left:19px;top:1635px;width:1131px;height:239px"></div>
<div class="a" style="left:1098px;top:1636px;width:51px;height:237px;background:#f0f0f0"></div>
<div class="ph" style="left:1162px;top:1572px;width:1131px;background:#c2cfde"><span>Stance Statistics</span></div>
<div class="pb" style="left:1162px;top:1635px;width:1131px;height:239px"></div>
<div class="a" style="left:2241px;top:1636px;width:51px;height:237px;background:#f0f0f0"></div>
<div class="ph" style="left:2305px;top:1572px;width:1132px;background:#9bb5d5"><span>Gait Statistics</span></div>
<div class="pb" style="left:2305px;top:1635px;width:1132px;height:239px"></div>
<div class="a" style="left:3385px;top:1636px;width:51px;height:237px;background:#f0f0f0"></div>
<div class="c h" style="left:26px;top:1657px;width:155px;height:34px;background:#4bacc6;color:#000">FOOT</div>
<div class="c h" style="left:185px;top:1657px;width:128.6px;height:34px;background:#4bacc6;color:#000">LEFT</div>
<div class="c h" style="left:317.6px;top:1657px;width:128.6px;height:34px;background:#4bacc6;color:#000">RIGHT</div>
<div class="c h" style="left:450.3px;top:1657px;width:102.6px;height:34px;background:#4bacc6;color:#000">% &#916;</div>
<div class="c r" style="left:26px;top:1695px;width:155px;height:47px;background:#e9f0f4;color:#000">Avg Pressure</div>
<div class="c" style="left:185px;top:1695px;width:128.6px;height:47px;background:#f2f2f2;color:#000">7.37</div>
<div class="c" style="left:317.6px;top:1695px;width:128.6px;height:47px;background:#f2f2f2;color:#000">5.06</div>
<div class="c" style="left:450.3px;top:1695px;width:102.6px;height:47px;background:#6cb2d2;color:#000">37.1%</div>
<div class="c r" style="left:26px;top:1746px;width:155px;height:47px;background:#e9f0f4;color:#000">Peak Pressure</div>
<div class="c" style="left:185px;top:1746px;width:128.6px;height:47px;background:#f2f2f2;color:#000">20.34</div>
<div class="c" style="left:317.6px;top:1746px;width:128.6px;height:47px;background:#f2f2f2;color:#000">13.81</div>
<div class="c" style="left:450.3px;top:1746px;width:102.6px;height:47px;background:#6cb2d2;color:#000">38.2%</div>
<div class="c h" style="left:26px;top:1810px;width:155px;height:34px;background:#ff0000;color:#fff">Heel</div>
<div class="c h" style="left:185px;top:1810px;width:128.6px;height:34px;background:#ff0000;color:#fff">LEFT</div>
<div class="c h" style="left:317.6px;top:1810px;width:128.6px;height:34px;background:#ff0000;color:#fff">RIGHT</div>
<div class="c h" style="left:450.3px;top:1810px;width:102.6px;height:34px;background:#ff0000;color:#fff">% &#916;</div>
<div class="a" style="left:26px;top:1848px;width:155px;height:26px;overflow:hidden"><div class="c r" style="left:0;top:0;width:155px;height:47px;background:#ffa9a9;color:#000">Avg Pressure</div></div>
<div class="a" style="left:185px;top:1848px;width:128.6px;height:26px;overflow:hidden"><div class="c" style="left:0;top:0;width:128.6px;height:47px;background:#ffa9a9;color:#000">0.0</div></div>
<div class="a" style="left:317.6px;top:1848px;width:128.6px;height:26px;overflow:hidden"><div class="c" style="left:0;top:0;width:128.6px;height:47px;background:#ffa9a9;color:#000">0.58</div></div>
<div class="a" style="left:450.3px;top:1848px;width:102.6px;height:26px;overflow:hidden"><div class="c" style="left:0;top:0;width:102.6px;height:47px;background:#ffa9a9;color:#000">-</div></div>
<div class="c h" style="left:566px;top:1657px;width:155px;height:34px;background:#66c69f;color:#000">FOOT</div>
<div class="c h" style="left:725px;top:1657px;width:128.6px;height:34px;background:#66c69f;color:#000">LEFT</div>
<div class="c h" style="left:857.6px;top:1657px;width:128.6px;height:34px;background:#66c69f;color:#000">RIGHT</div>
<div class="c h" style="left:990.3px;top:1657px;width:102.6px;height:34px;background:#66c69f;color:#000">% &#916;</div>
<div class="c r" style="left:566px;top:1695px;width:155px;height:47px;background:#eaf4f0;color:#000">Avg Pressure</div>
<div class="c" style="left:725px;top:1695px;width:128.6px;height:47px;background:#f2f2f2;color:#000">6.51</div>
<div class="c" style="left:857.6px;top:1695px;width:128.6px;height:47px;background:#f2f2f2;color:#000">6.18</div>
<div class="c" style="left:990.3px;top:1695px;width:102.6px;height:47px;background:#ddf0e8;color:#000">5.1%</div>
<div class="c r" style="left:566px;top:1746px;width:155px;height:47px;background:#eaf4f0;color:#000">Peak Pressure</div>
<div class="c" style="left:725px;top:1746px;width:128.6px;height:47px;background:#f2f2f2;color:#000">20.45</div>
<div class="c" style="left:857.6px;top:1746px;width:128.6px;height:47px;background:#f2f2f2;color:#000">21.35</div>
<div class="c" style="left:990.3px;top:1746px;width:102.6px;height:47px;background:#ddf0e8;color:#000">-4.3%</div>
<div class="c h" style="left:566px;top:1810px;width:155px;height:34px;background:#ff3535;color:#fff">Heel</div>
<div class="c h" style="left:725px;top:1810px;width:128.6px;height:34px;background:#ff3535;color:#fff">LEFT</div>
<div class="c h" style="left:857.6px;top:1810px;width:128.6px;height:34px;background:#ff3535;color:#fff">RIGHT</div>
<div class="c h" style="left:990.3px;top:1810px;width:102.6px;height:34px;background:#ff3535;color:#fff">% &#916;</div>
<div class="a" style="left:566px;top:1848px;width:155px;height:26px;overflow:hidden"><div class="c r" style="left:0;top:0;width:155px;height:47px;background:#ffbcbc;color:#000">Avg Pressure</div></div>
<div class="a" style="left:725px;top:1848px;width:128.6px;height:26px;overflow:hidden"><div class="c" style="left:0;top:0;width:128.6px;height:47px;background:#ffbcbc;color:#000">0.81</div></div>
<div class="a" style="left:857.6px;top:1848px;width:128.6px;height:26px;overflow:hidden"><div class="c" style="left:0;top:0;width:128.6px;height:47px;background:#ffbcbc;color:#000">0.69</div></div>
<div class="a" style="left:990.3px;top:1848px;width:102.6px;height:26px;overflow:hidden"><div class="c" style="left:0;top:0;width:102.6px;height:47px;background:#ff9c9c;color:#000">16.1%</div></div>
<div class="c h" style="left:1169px;top:1657px;width:155px;height:34px;background:#4bacc6;color:#000">FOOT</div>
<div class="c h" style="left:1328px;top:1657px;width:128.6px;height:34px;background:#4bacc6;color:#000">LEFT</div>
<div class="c h" style="left:1460.6px;top:1657px;width:128.6px;height:34px;background:#4bacc6;color:#000">RIGHT</div>
<div class="c h" style="left:1593.3px;top:1657px;width:102.6px;height:34px;background:#4bacc6;color:#000">% &#916;</div>
<div class="c r" style="left:1169px;top:1695px;width:155px;height:47px;background:#e9f0f4;color:#000">Stance Avg Pressure</div>
<div class="c" style="left:1328px;top:1695px;width:128.6px;height:47px;background:#f2f2f2;color:#000">5.21</div>
<div class="c" style="left:1460.6px;top:1695px;width:128.6px;height:47px;background:#f2f2f2;color:#000">3.79</div>
<div class="c" style="left:1593.3px;top:1695px;width:102.6px;height:47px;background:#7dbad6;color:#000">31.5%</div>
<div class="c r" style="left:1169px;top:1746px;width:155px;height:47px;background:#e9f0f4;color:#000">Stance Peak Pressure</div>
<div class="c" style="left:1328px;top:1746px;width:128.6px;height:47px;background:#f2f2f2;color:#000">23.69</div>
<div class="c" style="left:1460.6px;top:1746px;width:128.6px;height:47px;background:#f2f2f2;color:#000">22.87</div>
<div class="c" style="left:1593.3px;top:1746px;width:102.6px;height:47px;background:#deebf1;color:#000">3.5%</div>
<div class="c h" style="left:1169px;top:1810px;width:155px;height:34px;background:#ff0000;color:#fff">Heel</div>
<div class="c h" style="left:1328px;top:1810px;width:128.6px;height:34px;background:#ff0000;color:#fff">LEFT</div>
<div class="c h" style="left:1460.6px;top:1810px;width:128.6px;height:34px;background:#ff0000;color:#fff">RIGHT</div>
<div class="c h" style="left:1593.3px;top:1810px;width:102.6px;height:34px;background:#ff0000;color:#fff">% &#916;</div>
<div class="a" style="left:1169px;top:1848px;width:155px;height:26px;overflow:hidden"><div class="c r" style="left:0;top:0;width:155px;height:47px;background:#ffa9a9;color:#000">Stance Avg Pressure</div></div>
<div class="a" style="left:1328px;top:1848px;width:128.6px;height:26px;overflow:hidden"><div class="c" style="left:0;top:0;width:128.6px;height:47px;background:#ffa9a9;color:#000">6.51</div></div>
<div class="a" style="left:1460.6px;top:1848px;width:128.6px;height:26px;overflow:hidden"><div class="c" style="left:0;top:0;width:128.6px;height:47px;background:#ffa9a9;color:#000">3.55</div></div>
<div class="a" style="left:1593.3px;top:1848px;width:102.6px;height:26px;overflow:hidden"><div class="c" style="left:0;top:0;width:102.6px;height:47px;background:#ff0000;color:#fff">58.9%</div></div>
<div class="c h" style="left:1709px;top:1657px;width:155px;height:34px;background:#66c69f;color:#000">FOOT</div>
<div class="c h" style="left:1868px;top:1657px;width:128.6px;height:34px;background:#66c69f;color:#000">LEFT</div>
<div class="c h" style="left:2000.6px;top:1657px;width:128.6px;height:34px;background:#66c69f;color:#000">RIGHT</div>
<div class="c h" style="left:2133.3px;top:1657px;width:102.6px;height:34px;background:#66c69f;color:#000">% &#916;</div>
<div class="c r" style="left:1709px;top:1695px;width:155px;height:47px;background:#eaf4f0;color:#000">Stance Avg Pressure</div>
<div class="c" style="left:1868px;top:1695px;width:128.6px;height:47px;background:#f2f2f2;color:#000">4.41</div>
<div class="c" style="left:2000.6px;top:1695px;width:128.6px;height:47px;background:#f2f2f2;color:#000">4.14</div>
<div class="c" style="left:2133.3px;top:1695px;width:102.6px;height:47px;background:#d9efe6;color:#000">6.5%</div>
<div class="c r" style="left:1709px;top:1746px;width:155px;height:47px;background:#eaf4f0;color:#000">Stance Peak Pressure</div>
<div class="c" style="left:1868px;top:1746px;width:128.6px;height:47px;background:#f2f2f2;color:#000">29.67</div>
<div class="c" style="left:2000.6px;top:1746px;width:128.6px;height:47px;background:#f2f2f2;color:#000">33.96</div>
<div class="c" style="left:2133.3px;top:1746px;width:102.6px;height:47px;background:#c1e7d8;color:#000">-13.5%</div>
<div class="c h" style="left:1709px;top:1810px;width:155px;height:34px;background:#ff3535;color:#fff">Heel</div>
<div class="c h" style="left:1868px;top:1810px;width:128.6px;height:34px;background:#ff3535;color:#fff">LEFT</div>
<div class="c h" style="left:2000.6px;top:1810px;width:128.6px;height:34px;background:#ff3535;color:#fff">RIGHT</div>
<div class="c h" style="left:2133.3px;top:1810px;width:102.6px;height:34px;background:#ff3535;color:#fff">% &#916;</div>
<div class="a" style="left:1709px;top:1848px;width:155px;height:26px;overflow:hidden"><div class="c r" style="left:0;top:0;width:155px;height:47px;background:#ffbcbc;color:#000">Stance Avg Pressure</div></div>
<div class="a" style="left:1868px;top:1848px;width:128.6px;height:26px;overflow:hidden"><div class="c" style="left:0;top:0;width:128.6px;height:47px;background:#ffbcbc;color:#000">4.92</div></div>
<div class="a" style="left:2000.6px;top:1848px;width:128.6px;height:26px;overflow:hidden"><div class="c" style="left:0;top:0;width:128.6px;height:47px;background:#ffbcbc;color:#000">4.39</div></div>
<div class="a" style="left:2133.3px;top:1848px;width:102.6px;height:26px;overflow:hidden"><div class="c" style="left:0;top:0;width:102.6px;height:47px;background:#ffa9a9;color:#000">11.5%</div></div>
<div class="c h" style="left:2312px;top:1657px;width:155px;height:34px;background:#3b5f8c;color:#fff">Temporal</div>
<div class="c h" style="left:2471px;top:1657px;width:128.6px;height:34px;background:#3b5f8c;color:#fff">LEFT</div>
<div class="c h" style="left:2603.6px;top:1657px;width:128.6px;height:34px;background:#3b5f8c;color:#fff">RIGHT</div>
<div class="c h" style="left:2736.3px;top:1657px;width:102.6px;height:34px;background:#3b5f8c;color:#fff">% &#916;</div>
<div class="c r" style="left:2312px;top:1695px;width:155px;height:47px;background:#e8edf5;color:#000">Swing Time</div>
<div class="c" style="left:2471px;top:1695px;width:128.6px;height:47px;background:#f2f2f2;color:#000">360 ms</div>
<div class="c" style="left:2603.6px;top:1695px;width:128.6px;height:47px;background:#f2f2f2;color:#000">399 ms</div>
<div class="c" style="left:2736.3px;top:1695px;width:102.6px;height:47px;background:#b8c8df;color:#000">-10.3%</div>
<div class="c r" style="left:2312px;top:1746px;width:155px;height:47px;background:#e8edf5;color:#000">Stance Time</div>
<div class="c" style="left:2471px;top:1746px;width:128.6px;height:47px;background:#f2f2f2;color:#000">771 ms</div>
<div class="c" style="left:2603.6px;top:1746px;width:128.6px;height:47px;background:#f2f2f2;color:#000">692 ms</div>
<div class="c" style="left:2736.3px;top:1746px;width:102.6px;height:47px;background:#b8c8df;color:#000">10.8%</div>
<div class="c r" style="left:2312px;top:1797px;width:155px;height:47px;background:#e8edf5;color:#000">Support Time</div>
<div class="c" style="left:2471px;top:1797px;width:128.6px;height:47px;background:#f2f2f2;color:#000">199 ms</div>
<div class="c" style="left:2603.6px;top:1797px;width:128.6px;height:47px;background:#f2f2f2;color:#000">133 ms</div>
<div class="c" style="left:2736.3px;top:1797px;width:102.6px;height:47px;background:#55709f;color:#fff">39.8%</div>
<div class="c h" style="left:2852px;top:1657px;width:155px;height:34px;background:#4b8c7f;color:#fff">Temporal</div>
<div class="c h" style="left:3011px;top:1657px;width:128.6px;height:34px;background:#4b8c7f;color:#fff">LEFT</div>
<div class="c h" style="left:3143.6px;top:1657px;width:128.6px;height:34px;background:#4b8c7f;color:#fff">RIGHT</div>
<div class="c h" style="left:3276.3px;top:1657px;width:102.6px;height:34px;background:#4b8c7f;color:#fff">% &#916;</div>
<div class="c r" style="left:2852px;top:1695px;width:155px;height:47px;background:#eaf3f1;color:#000">Swing Time</div>
<div class="c" style="left:3011px;top:1695px;width:128.6px;height:47px;background:#f2f2f2;color:#000">439 ms</div>
<div class="c" style="left:3143.6px;top:1695px;width:128.6px;height:47px;background:#f2f2f2;color:#000">439 ms</div>
<div class="c" style="left:3276.3px;top:1695px;width:102.6px;height:47px;background:#eaf3f1;color:#000">0.00%</div>
<div class="c r" style="left:2852px;top:1746px;width:155px;height:47px;background:#eaf3f1;color:#000">Stance Time</div>
<div class="c" style="left:3011px;top:1746px;width:128.6px;height:47px;background:#f2f2f2;color:#000">1117 ms</div>
<div class="c" style="left:3143.6px;top:1746px;width:128.6px;height:47px;background:#f2f2f2;color:#000">931 ms</div>
<div class="c" style="left:3276.3px;top:1746px;width:102.6px;height:47px;background:#a3cdc5;color:#000">18.2%</div>
<div class="c r" style="left:2852px;top:1797px;width:155px;height:47px;background:#eaf3f1;color:#000">Support Time</div>
<div class="c" style="left:3011px;top:1797px;width:128.6px;height:47px;background:#f2f2f2;color:#000">293 ms</div>
<div class="c" style="left:3143.6px;top:1797px;width:128.6px;height:47px;background:#f2f2f2;color:#000">199 ms</div>
<div class="c" style="left:3276.3px;top:1797px;width:102.6px;height:47px;background:#67a69a;color:#000">38.2%</div>
<div class="a" style="left:1106px;top:1687px;width:36px;height:36px;background:#858585"></div>
<div class="a" style="left:2250px;top:1687px;width:36px;height:36px;background:#858585"></div>
<svg width="3456" height="1890"><rect x="1067.5" y="1593.3" width="10.7" height="16" fill="none" stroke="#000" stroke-width="2.8"/><rect x="1075" y="1592" width="4.7" height="18" fill="#000"/><rect x="1063" y="1609.2" width="20" height="2.9" fill="#000"/><rect x="1071.4" y="1612" width="3.6" height="9" fill="#000"/>
<path d="M1113.4 1596 L1132.6 1614.4 M1132.6 1596 L1113.4 1614.4" stroke="#000" stroke-width="3.4" stroke-linecap="round"/>
<rect x="2210.5" y="1593.3" width="10.7" height="16" fill="none" stroke="#000" stroke-width="2.8"/><rect x="2218" y="1592" width="4.7" height="18" fill="#000"/><rect x="2206" y="1609.2" width="20" height="2.9" fill="#000"/><rect x="2214.4" y="1612" width="3.6" height="9" fill="#000"/>
<path d="M2256.4 1596 L2275.6 1614.4 M2275.6 1596 L2256.4 1614.4" stroke="#000" stroke-width="3.4" stroke-linecap="round"/>
<rect x="3354.5" y="1593.3" width="10.7" height="16" fill="none" stroke="#000" stroke-width="2.8"/><rect x="3362" y="1592" width="4.7" height="18" fill="#000"/><rect x="3350" y="1609.2" width="20" height="2.9" fill="#000"/><rect x="3358.4" y="1612" width="3.6" height="9" fill="#000"/>
<path d="M3400.4 1596 L3419.6 1614.4 M3419.6 1596 L3400.4 1614.4" stroke="#000" stroke-width="3.4" stroke-linecap="round"/>
<path d="M3401 1668 L3411.5 1653 L3422 1668 Q3411.5 1670 3401 1668Z" fill="#a0a0a0"/><path d="M3401 1841 L3411.5 1857 L3422 1841 Q3411.5 1839 3401 1841Z" fill="#a0a0a0"/>
<path d="M304.0 1669.4 C301.3 1670.9 296.8 1676.1 288.2 1678.0 C279.6 1679.9 261.9 1678.6 252.2 1680.7 C242.4 1682.8 235.7 1685.9 229.7 1690.6 C223.7 1695.2 219.0 1702.2 216.1 1708.6 C213.3 1715.0 211.0 1724.2 212.5 1728.9 C214.0 1733.5 217.0 1735.0 225.2 1736.5 C233.3 1738.0 247.7 1737.4 261.2 1737.9 C274.7 1738.3 292.7 1737.3 306.2 1739.2 C319.7 1741.1 328.7 1747.3 342.2 1749.1 C355.7 1750.9 376.0 1750.4 387.3 1750.0 C398.5 1749.7 405.4 1750.8 409.8 1746.9 C414.1 1743.0 413.0 1733.7 413.4 1726.6 C413.8 1719.5 414.9 1710.0 412.0 1704.1 C409.2 1698.2 403.4 1694.6 396.3 1691.5 C389.1 1688.3 379.8 1686.5 369.3 1685.2 C358.7 1683.9 342.2 1684.6 333.2 1683.8 C324.2 1683.1 322.7 1681.7 315.2 1680.7 C307.7 1679.7 292.7 1678.4 288.2 1678.0" stroke="#e3172f" stroke-width="5" fill="none" stroke-linecap="round" stroke-linejoin="round"/>
<path d="M833.1 1694.2 C827.8 1694.0 812.8 1693.8 801.5 1692.8 C790.3 1691.9 776.0 1688.6 765.5 1688.3 C755.0 1688.1 744.7 1688.9 738.5 1691.5 C732.4 1694.1 730.5 1699.0 728.6 1704.1 C726.7 1709.2 724.8 1717.6 727.2 1722.1 C729.6 1726.6 732.9 1729.0 743.0 1731.1 C753.1 1733.2 769.3 1733.8 788.0 1734.7 C806.8 1735.6 836.8 1735.5 855.6 1736.5 C874.3 1737.6 886.4 1740.3 900.6 1741.0 C914.9 1741.8 931.4 1742.7 941.1 1741.0 C950.9 1739.4 955.0 1736.5 959.2 1731.1 C963.3 1725.7 965.5 1715.4 965.9 1708.6 C966.3 1701.8 964.8 1694.9 961.4 1690.6 C958.0 1686.2 955.8 1684.0 945.6 1682.5 C935.5 1681.0 915.6 1681.6 900.6 1681.6 C885.6 1681.6 867.4 1682.3 855.6 1682.5 C843.7 1682.6 833.8 1682.5 829.5 1682.5" stroke="#e3172f" stroke-width="5" fill="none" stroke-linecap="round" stroke-linejoin="round"/>
<path d="M1393.2 1691.5 C1398.4 1691.3 1426.2 1690.9 1424.7 1690.6 C1423.2 1690.3 1396.9 1690.1 1384.2 1689.7 C1371.4 1689.3 1356.4 1687.4 1348.1 1688.3 C1339.9 1689.2 1337.6 1690.2 1334.6 1695.1 C1331.6 1700.0 1330.7 1710.1 1330.1 1717.6 C1329.5 1725.1 1328.0 1734.9 1331.0 1740.1 C1334.0 1745.4 1336.3 1747.5 1348.1 1749.1 C1360.0 1750.8 1382.7 1750.0 1402.2 1750.0 C1421.7 1750.0 1445.7 1749.3 1465.2 1749.1 C1484.7 1749.0 1503.5 1749.5 1519.3 1749.1 C1535.0 1748.8 1550.0 1748.8 1559.8 1746.9 C1569.5 1745.0 1573.9 1742.8 1577.8 1737.9 C1581.7 1733.0 1582.8 1724.0 1583.2 1717.6 C1583.6 1711.2 1583.2 1703.9 1580.0 1699.6 C1576.9 1695.2 1572.9 1693.0 1564.3 1691.5 C1555.7 1690.0 1544.8 1690.6 1528.3 1690.6 C1511.7 1690.6 1486.2 1691.3 1465.2 1691.5 C1444.2 1691.6 1412.7 1691.5 1402.2 1691.5" stroke="#e3172f" stroke-width="5" fill="none" stroke-linecap="round" stroke-linejoin="round"/>
<path d="M1958.3 1688.3 C1951.2 1688.7 1928.7 1690.1 1915.5 1690.6 C1902.4 1691.1 1887.8 1689.2 1879.5 1691.5 C1871.2 1693.7 1868.8 1698.2 1866.0 1704.1 C1863.1 1710.0 1861.6 1720.6 1862.4 1726.6 C1863.1 1732.6 1861.6 1737.6 1870.5 1740.1 C1879.3 1742.7 1900.5 1741.6 1915.5 1741.9 C1930.5 1742.2 1945.5 1741.5 1960.6 1741.9 C1975.6 1742.4 1986.8 1744.3 2005.6 1744.6 C2024.3 1744.9 2055.1 1743.9 2073.1 1743.7 C2091.1 1743.6 2106.2 1747.3 2113.7 1743.7 C2121.2 1740.1 2117.8 1729.5 2118.2 1722.1 C2118.5 1714.8 2118.2 1704.7 2115.9 1699.6 C2113.7 1694.5 2115.5 1693.0 2104.7 1691.5 C2093.8 1690.0 2067.1 1691.1 2050.6 1690.6 C2034.1 1690.1 2018.3 1690.0 2005.6 1688.3 C1992.8 1686.7 1984.6 1682.0 1974.1 1680.7 C1963.6 1679.4 1947.8 1680.7 1942.5 1680.7" stroke="#e3172f" stroke-width="5" fill="none" stroke-linecap="round" stroke-linejoin="round"/></svg>
</body></html>
